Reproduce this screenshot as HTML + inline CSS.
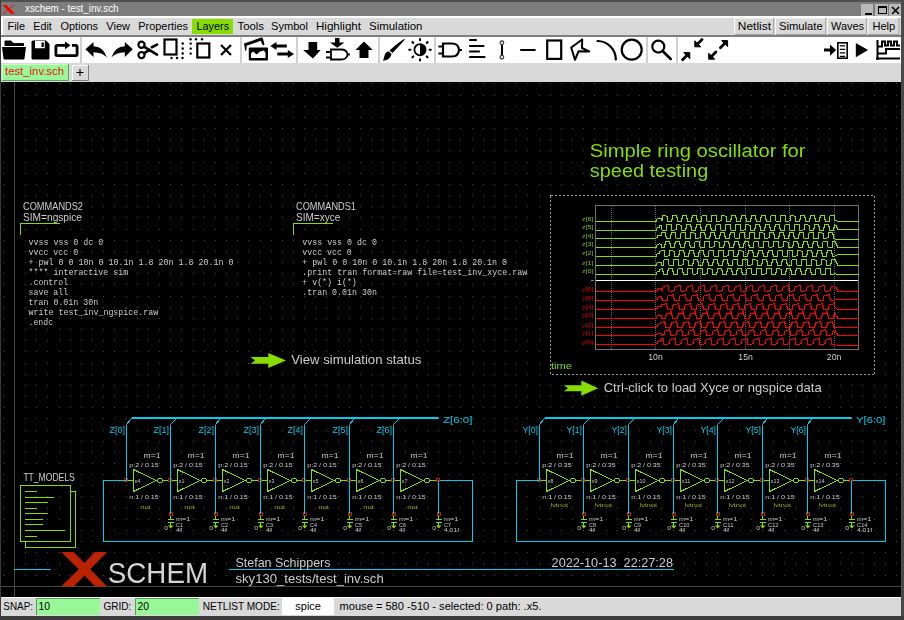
<!DOCTYPE html>
<html><head><meta charset="utf-8"><style>html,body{margin:0;padding:0;background:#000;overflow:hidden}svg{display:block} text.g{will-change:transform}</style></head>
<body><svg width="904" height="620" viewBox="0 0 904 620">
<rect x="0" y="0" width="904" height="620" fill="#d9d9d9" />
<rect x="0" y="0" width="904" height="2" fill="#505050" />
<rect x="0" y="2" width="904" height="14" fill="#7c7c7c" />
<rect x="0" y="0" width="1" height="620" fill="#3c3c3c" />
<rect x="901" y="0" width="3" height="620" fill="#4a4a4a" />
<path d="M2.5 5 L6.5 5 L15 14 L11 14 Z" fill="#ff0000"/>
<path d="M3 14 L14 5" stroke="#ff0000" stroke-width="1"/>
<text x="25" y="12" font-family="Liberation Sans" font-size="11.5" fill="#ffffff" textLength="93.5" lengthAdjust="spacingAndGlyphs"  xml:space="preserve">xschem - test_inv.sch</text>
<rect x="861" y="4" width="12" height="12" fill="#b8b8b8" />
<rect x="875" y="4" width="13" height="12" fill="#b8b8b8" />
<rect x="889" y="4" width="12" height="12" fill="#b8b8b8" />
<rect x="865" y="13" width="7" height="2" fill="#000" />
<rect x="878.5" y="6.5" width="8" height="7" fill="none" stroke="#000" stroke-width="1"/>
<rect x="878" y="6" width="9" height="2" fill="#000" />
<path d="M892 7 L899 14 M899 7 L892 14" stroke="#000" stroke-width="1.6"/>
<rect x="1" y="16" width="900" height="2" fill="#ffffff" />
<rect x="1" y="18" width="900" height="17" fill="#d9d9d9" />
<rect x="1" y="16" width="2" height="20" fill="#ffffff" />
<rect x="1" y="35" width="900" height="2" fill="#808080" />
<rect x="192" y="19" width="41" height="15" fill="#88dd00" />
<text x="7.5" y="30" font-family="Liberation Sans" font-size="11.6" fill="#000000" textLength="17.5" lengthAdjust="spacingAndGlyphs"  xml:space="preserve">File</text>
<text x="33.3" y="30" font-family="Liberation Sans" font-size="11.6" fill="#000000" textLength="18.5" lengthAdjust="spacingAndGlyphs"  xml:space="preserve">Edit</text>
<text x="60.5" y="30" font-family="Liberation Sans" font-size="11.6" fill="#000000" textLength="37.5" lengthAdjust="spacingAndGlyphs"  xml:space="preserve">Options</text>
<text x="106.3" y="30" font-family="Liberation Sans" font-size="11.6" fill="#000000" textLength="23.7" lengthAdjust="spacingAndGlyphs"  xml:space="preserve">View</text>
<text x="138.3" y="30" font-family="Liberation Sans" font-size="11.6" fill="#000000" textLength="49.7" lengthAdjust="spacingAndGlyphs"  xml:space="preserve">Properties</text>
<text x="237.5" y="30" font-family="Liberation Sans" font-size="11.6" fill="#000000" textLength="26.5" lengthAdjust="spacingAndGlyphs"  xml:space="preserve">Tools</text>
<text x="271" y="30" font-family="Liberation Sans" font-size="11.6" fill="#000000" textLength="37" lengthAdjust="spacingAndGlyphs"  xml:space="preserve">Symbol</text>
<text x="316" y="30" font-family="Liberation Sans" font-size="11.6" fill="#000000" textLength="45" lengthAdjust="spacingAndGlyphs"  xml:space="preserve">Highlight</text>
<text x="369" y="30" font-family="Liberation Sans" font-size="11.6" fill="#000000" textLength="53.5" lengthAdjust="spacingAndGlyphs"  xml:space="preserve">Simulation</text>
<text x="196.4" y="30" font-family="Liberation Sans" font-size="11.6" fill="#000000" textLength="32.7" lengthAdjust="spacingAndGlyphs"  xml:space="preserve">Layers</text>
<rect x="734.7" y="18" width="39" height="17" fill="#d9d9d9"/>
<path d="M734.7 35 V18 H773.7" fill="none" stroke="#ffffff" stroke-width="1"/>
<path d="M734.7 34.5 H773.7 V18" fill="none" stroke="#a0a0a0" stroke-width="1"/>
<text x="737.8" y="30" font-family="Liberation Sans" font-size="11.6" fill="#000000" textLength="33.2" lengthAdjust="spacingAndGlyphs"  xml:space="preserve">Netlist</text>
<rect x="775.6" y="18" width="50.2" height="17" fill="#d9d9d9"/>
<path d="M775.6 35 V18 H825.8000000000001" fill="none" stroke="#ffffff" stroke-width="1"/>
<path d="M775.6 34.5 H825.8000000000001 V18" fill="none" stroke="#a0a0a0" stroke-width="1"/>
<text x="779" y="30" font-family="Liberation Sans" font-size="11.6" fill="#000000" textLength="43.7" lengthAdjust="spacingAndGlyphs"  xml:space="preserve">Simulate</text>
<rect x="827.4" y="18" width="39.3" height="17" fill="#d9d9d9"/>
<path d="M827.4 35 V18 H866.6999999999999" fill="none" stroke="#ffffff" stroke-width="1"/>
<path d="M827.4 34.5 H866.6999999999999 V18" fill="none" stroke="#a0a0a0" stroke-width="1"/>
<text x="831" y="30" font-family="Liberation Sans" font-size="11.6" fill="#000000" textLength="33" lengthAdjust="spacingAndGlyphs"  xml:space="preserve">Waves</text>
<rect x="868" y="18" width="31" height="17" fill="#d9d9d9"/>
<path d="M868 35 V18 H899" fill="none" stroke="#ffffff" stroke-width="1"/>
<path d="M868 34.5 H899 V18" fill="none" stroke="#a0a0a0" stroke-width="1"/>
<text x="872.4" y="30" font-family="Liberation Sans" font-size="11.6" fill="#000000" textLength="22.8" lengthAdjust="spacingAndGlyphs"  xml:space="preserve">Help</text>
<rect x="1" y="37" width="900" height="26" fill="#ffffff" />
<rect x="80" y="37" width="2" height="26" fill="#d0d0d0" />
<rect x="240" y="37" width="2" height="26" fill="#d0d0d0" />
<rect x="296" y="37" width="2" height="26" fill="#d0d0d0" />
<rect x="378" y="37" width="2" height="26" fill="#d0d0d0" />
<rect x="434" y="37" width="2" height="26" fill="#d0d0d0" />
<rect x="646" y="37" width="2" height="26" fill="#d0d0d0" />
<rect x="676" y="37" width="2" height="26" fill="#d0d0d0" />
<rect x="1" y="63" width="900" height="19" fill="#d9d9d9" />
<rect x="2" y="64" width="67" height="17" fill="#98f898" />
<path d="M2.5 81 V64.5 H69" fill="none" stroke="#c8ffc8" stroke-width="1"/>
<path d="M2 80.5 H68.5 V64" fill="none" stroke="#60a060" stroke-width="1"/>
<text x="5" y="75" font-family="Liberation Sans" font-size="11.6" fill="#ee1111" textLength="59" lengthAdjust="spacingAndGlyphs"  xml:space="preserve">test_inv.sch</text>
<rect x="72" y="65" width="17" height="16" fill="#d9d9d9" />
<path d="M72.5 81 V65.5 H89" fill="none" stroke="#ffffff" stroke-width="1"/>
<path d="M72 80.5 H88.5 V65" fill="none" stroke="#808080" stroke-width="1"/>
<path d="M76.5 72.5 H83.5 M80 69 V76" stroke="#000000" stroke-width="1.1"/>
<rect x="1" y="82" width="900" height="515" fill="#000000" />
<rect x="1" y="597" width="900" height="1" fill="#ffffff" />
<rect x="1" y="598" width="900" height="18" fill="#d9d9d9" />
<rect x="0" y="616" width="904" height="4" fill="#3c3c3c" />
<text x="3.3" y="610" font-family="Liberation Sans" font-size="11.6" fill="#000000" textLength="29.7" lengthAdjust="spacingAndGlyphs"  xml:space="preserve">SNAP:</text>
<rect x="36" y="598" width="64" height="17" fill="#98f898" />
<path d="M36.5 615 V598.5 H100" fill="none" stroke="#5a9a5a" stroke-width="1"/>
<text x="38.5" y="610" font-family="Liberation Sans" font-size="11.6" fill="#000000" textLength="11.5" lengthAdjust="spacingAndGlyphs"  xml:space="preserve">10</text>
<text x="103.4" y="610" font-family="Liberation Sans" font-size="11.6" fill="#000000" textLength="28" lengthAdjust="spacingAndGlyphs"  xml:space="preserve">GRID:</text>
<rect x="135" y="598" width="64" height="17" fill="#98f898" />
<path d="M135.5 615 V598.5 H199" fill="none" stroke="#5a9a5a" stroke-width="1"/>
<text x="137.5" y="610" font-family="Liberation Sans" font-size="11.6" fill="#000000" textLength="11.5" lengthAdjust="spacingAndGlyphs"  xml:space="preserve">20</text>
<text x="202.7" y="610" font-family="Liberation Sans" font-size="11.6" fill="#000000" textLength="77" lengthAdjust="spacingAndGlyphs"  xml:space="preserve">NETLIST MODE:</text>
<rect x="282" y="598" width="52" height="17" fill="#ffffff" />
<text x="295.3" y="610" font-family="Liberation Sans" font-size="11.6" fill="#000000" textLength="25.7" lengthAdjust="spacingAndGlyphs"  xml:space="preserve">spice</text>
<text x="339.5" y="610" font-family="Liberation Sans" font-size="11.6" fill="#000000" textLength="202" lengthAdjust="spacingAndGlyphs"  xml:space="preserve">mouse = 580 -510 - selected: 0 path: .x5.</text>
<g shape-rendering="crispEdges">
<path d="M3 83h1v1h-1zM3 95h1v1h-1zM3 106h1v1h-1zM3 117h1v1h-1zM3 128h1v1h-1zM3 139h1v1h-1zM3 150h1v1h-1zM3 162h1v1h-1zM3 173h1v1h-1zM3 184h1v1h-1zM3 195h1v1h-1zM3 206h1v1h-1zM3 217h1v1h-1zM3 229h1v1h-1zM3 240h1v1h-1zM3 251h1v1h-1zM3 262h1v1h-1zM3 273h1v1h-1zM3 284h1v1h-1zM3 296h1v1h-1zM3 307h1v1h-1zM3 318h1v1h-1zM3 329h1v1h-1zM3 340h1v1h-1zM3 351h1v1h-1zM3 363h1v1h-1zM3 374h1v1h-1zM3 385h1v1h-1zM3 396h1v1h-1zM3 407h1v1h-1zM3 418h1v1h-1zM3 430h1v1h-1zM3 441h1v1h-1zM3 452h1v1h-1zM3 463h1v1h-1zM3 474h1v1h-1zM3 485h1v1h-1zM3 496h1v1h-1zM3 508h1v1h-1zM3 519h1v1h-1zM3 530h1v1h-1zM3 541h1v1h-1zM3 552h1v1h-1zM3 563h1v1h-1zM3 575h1v1h-1zM3 586h1v1h-1zM14 83h1v1h-1zM14 95h1v1h-1zM14 106h1v1h-1zM14 117h1v1h-1zM14 128h1v1h-1zM14 139h1v1h-1zM14 150h1v1h-1zM14 162h1v1h-1zM14 173h1v1h-1zM14 184h1v1h-1zM14 195h1v1h-1zM14 206h1v1h-1zM14 217h1v1h-1zM14 229h1v1h-1zM14 240h1v1h-1zM14 251h1v1h-1zM14 262h1v1h-1zM14 273h1v1h-1zM14 284h1v1h-1zM14 296h1v1h-1zM14 307h1v1h-1zM14 318h1v1h-1zM14 329h1v1h-1zM14 340h1v1h-1zM14 351h1v1h-1zM14 363h1v1h-1zM14 374h1v1h-1zM14 385h1v1h-1zM14 396h1v1h-1zM14 407h1v1h-1zM14 418h1v1h-1zM14 430h1v1h-1zM14 441h1v1h-1zM14 452h1v1h-1zM14 463h1v1h-1zM14 474h1v1h-1zM14 485h1v1h-1zM14 496h1v1h-1zM14 508h1v1h-1zM14 519h1v1h-1zM14 530h1v1h-1zM14 541h1v1h-1zM14 552h1v1h-1zM14 563h1v1h-1zM14 575h1v1h-1zM14 586h1v1h-1zM25 83h1v1h-1zM25 95h1v1h-1zM25 106h1v1h-1zM25 117h1v1h-1zM25 128h1v1h-1zM25 139h1v1h-1zM25 150h1v1h-1zM25 162h1v1h-1zM25 173h1v1h-1zM25 184h1v1h-1zM25 195h1v1h-1zM25 206h1v1h-1zM25 217h1v1h-1zM25 229h1v1h-1zM25 240h1v1h-1zM25 251h1v1h-1zM25 262h1v1h-1zM25 273h1v1h-1zM25 284h1v1h-1zM25 296h1v1h-1zM25 307h1v1h-1zM25 318h1v1h-1zM25 329h1v1h-1zM25 340h1v1h-1zM25 351h1v1h-1zM25 363h1v1h-1zM25 374h1v1h-1zM25 385h1v1h-1zM25 396h1v1h-1zM25 407h1v1h-1zM25 418h1v1h-1zM25 430h1v1h-1zM25 441h1v1h-1zM25 452h1v1h-1zM25 463h1v1h-1zM25 474h1v1h-1zM25 485h1v1h-1zM25 496h1v1h-1zM25 508h1v1h-1zM25 519h1v1h-1zM25 530h1v1h-1zM25 541h1v1h-1zM25 552h1v1h-1zM25 563h1v1h-1zM25 575h1v1h-1zM25 586h1v1h-1zM36 83h1v1h-1zM36 95h1v1h-1zM36 106h1v1h-1zM36 117h1v1h-1zM36 128h1v1h-1zM36 139h1v1h-1zM36 150h1v1h-1zM36 162h1v1h-1zM36 173h1v1h-1zM36 184h1v1h-1zM36 195h1v1h-1zM36 206h1v1h-1zM36 217h1v1h-1zM36 229h1v1h-1zM36 240h1v1h-1zM36 251h1v1h-1zM36 262h1v1h-1zM36 273h1v1h-1zM36 284h1v1h-1zM36 296h1v1h-1zM36 307h1v1h-1zM36 318h1v1h-1zM36 329h1v1h-1zM36 340h1v1h-1zM36 351h1v1h-1zM36 363h1v1h-1zM36 374h1v1h-1zM36 385h1v1h-1zM36 396h1v1h-1zM36 407h1v1h-1zM36 418h1v1h-1zM36 430h1v1h-1zM36 441h1v1h-1zM36 452h1v1h-1zM36 463h1v1h-1zM36 474h1v1h-1zM36 485h1v1h-1zM36 496h1v1h-1zM36 508h1v1h-1zM36 519h1v1h-1zM36 530h1v1h-1zM36 541h1v1h-1zM36 552h1v1h-1zM36 563h1v1h-1zM36 575h1v1h-1zM36 586h1v1h-1zM47 83h1v1h-1zM47 95h1v1h-1zM47 106h1v1h-1zM47 117h1v1h-1zM47 128h1v1h-1zM47 139h1v1h-1zM47 150h1v1h-1zM47 162h1v1h-1zM47 173h1v1h-1zM47 184h1v1h-1zM47 195h1v1h-1zM47 206h1v1h-1zM47 217h1v1h-1zM47 229h1v1h-1zM47 240h1v1h-1zM47 251h1v1h-1zM47 262h1v1h-1zM47 273h1v1h-1zM47 284h1v1h-1zM47 296h1v1h-1zM47 307h1v1h-1zM47 318h1v1h-1zM47 329h1v1h-1zM47 340h1v1h-1zM47 351h1v1h-1zM47 363h1v1h-1zM47 374h1v1h-1zM47 385h1v1h-1zM47 396h1v1h-1zM47 407h1v1h-1zM47 418h1v1h-1zM47 430h1v1h-1zM47 441h1v1h-1zM47 452h1v1h-1zM47 463h1v1h-1zM47 474h1v1h-1zM47 485h1v1h-1zM47 496h1v1h-1zM47 508h1v1h-1zM47 519h1v1h-1zM47 530h1v1h-1zM47 541h1v1h-1zM47 552h1v1h-1zM47 563h1v1h-1zM47 575h1v1h-1zM47 586h1v1h-1zM59 83h1v1h-1zM59 95h1v1h-1zM59 106h1v1h-1zM59 117h1v1h-1zM59 128h1v1h-1zM59 139h1v1h-1zM59 150h1v1h-1zM59 162h1v1h-1zM59 173h1v1h-1zM59 184h1v1h-1zM59 195h1v1h-1zM59 206h1v1h-1zM59 217h1v1h-1zM59 229h1v1h-1zM59 240h1v1h-1zM59 251h1v1h-1zM59 262h1v1h-1zM59 273h1v1h-1zM59 284h1v1h-1zM59 296h1v1h-1zM59 307h1v1h-1zM59 318h1v1h-1zM59 329h1v1h-1zM59 340h1v1h-1zM59 351h1v1h-1zM59 363h1v1h-1zM59 374h1v1h-1zM59 385h1v1h-1zM59 396h1v1h-1zM59 407h1v1h-1zM59 418h1v1h-1zM59 430h1v1h-1zM59 441h1v1h-1zM59 452h1v1h-1zM59 463h1v1h-1zM59 474h1v1h-1zM59 485h1v1h-1zM59 496h1v1h-1zM59 508h1v1h-1zM59 519h1v1h-1zM59 530h1v1h-1zM59 541h1v1h-1zM59 552h1v1h-1zM59 563h1v1h-1zM59 575h1v1h-1zM59 586h1v1h-1zM70 83h1v1h-1zM70 95h1v1h-1zM70 106h1v1h-1zM70 117h1v1h-1zM70 128h1v1h-1zM70 139h1v1h-1zM70 150h1v1h-1zM70 162h1v1h-1zM70 173h1v1h-1zM70 184h1v1h-1zM70 195h1v1h-1zM70 206h1v1h-1zM70 217h1v1h-1zM70 229h1v1h-1zM70 240h1v1h-1zM70 251h1v1h-1zM70 262h1v1h-1zM70 273h1v1h-1zM70 284h1v1h-1zM70 296h1v1h-1zM70 307h1v1h-1zM70 318h1v1h-1zM70 329h1v1h-1zM70 340h1v1h-1zM70 351h1v1h-1zM70 363h1v1h-1zM70 374h1v1h-1zM70 385h1v1h-1zM70 396h1v1h-1zM70 407h1v1h-1zM70 418h1v1h-1zM70 430h1v1h-1zM70 441h1v1h-1zM70 452h1v1h-1zM70 463h1v1h-1zM70 474h1v1h-1zM70 485h1v1h-1zM70 496h1v1h-1zM70 508h1v1h-1zM70 519h1v1h-1zM70 530h1v1h-1zM70 541h1v1h-1zM70 552h1v1h-1zM70 563h1v1h-1zM70 575h1v1h-1zM70 586h1v1h-1zM81 83h1v1h-1zM81 95h1v1h-1zM81 106h1v1h-1zM81 117h1v1h-1zM81 128h1v1h-1zM81 139h1v1h-1zM81 150h1v1h-1zM81 162h1v1h-1zM81 173h1v1h-1zM81 184h1v1h-1zM81 195h1v1h-1zM81 206h1v1h-1zM81 217h1v1h-1zM81 229h1v1h-1zM81 240h1v1h-1zM81 251h1v1h-1zM81 262h1v1h-1zM81 273h1v1h-1zM81 284h1v1h-1zM81 296h1v1h-1zM81 307h1v1h-1zM81 318h1v1h-1zM81 329h1v1h-1zM81 340h1v1h-1zM81 351h1v1h-1zM81 363h1v1h-1zM81 374h1v1h-1zM81 385h1v1h-1zM81 396h1v1h-1zM81 407h1v1h-1zM81 418h1v1h-1zM81 430h1v1h-1zM81 441h1v1h-1zM81 452h1v1h-1zM81 463h1v1h-1zM81 474h1v1h-1zM81 485h1v1h-1zM81 496h1v1h-1zM81 508h1v1h-1zM81 519h1v1h-1zM81 530h1v1h-1zM81 541h1v1h-1zM81 552h1v1h-1zM81 563h1v1h-1zM81 575h1v1h-1zM81 586h1v1h-1zM92 83h1v1h-1zM92 95h1v1h-1zM92 106h1v1h-1zM92 117h1v1h-1zM92 128h1v1h-1zM92 139h1v1h-1zM92 150h1v1h-1zM92 162h1v1h-1zM92 173h1v1h-1zM92 184h1v1h-1zM92 195h1v1h-1zM92 206h1v1h-1zM92 217h1v1h-1zM92 229h1v1h-1zM92 240h1v1h-1zM92 251h1v1h-1zM92 262h1v1h-1zM92 273h1v1h-1zM92 284h1v1h-1zM92 296h1v1h-1zM92 307h1v1h-1zM92 318h1v1h-1zM92 329h1v1h-1zM92 340h1v1h-1zM92 351h1v1h-1zM92 363h1v1h-1zM92 374h1v1h-1zM92 385h1v1h-1zM92 396h1v1h-1zM92 407h1v1h-1zM92 418h1v1h-1zM92 430h1v1h-1zM92 441h1v1h-1zM92 452h1v1h-1zM92 463h1v1h-1zM92 474h1v1h-1zM92 485h1v1h-1zM92 496h1v1h-1zM92 508h1v1h-1zM92 519h1v1h-1zM92 530h1v1h-1zM92 541h1v1h-1zM92 552h1v1h-1zM92 563h1v1h-1zM92 575h1v1h-1zM92 586h1v1h-1zM103 83h1v1h-1zM103 95h1v1h-1zM103 106h1v1h-1zM103 117h1v1h-1zM103 128h1v1h-1zM103 139h1v1h-1zM103 150h1v1h-1zM103 162h1v1h-1zM103 173h1v1h-1zM103 184h1v1h-1zM103 195h1v1h-1zM103 206h1v1h-1zM103 217h1v1h-1zM103 229h1v1h-1zM103 240h1v1h-1zM103 251h1v1h-1zM103 262h1v1h-1zM103 273h1v1h-1zM103 284h1v1h-1zM103 296h1v1h-1zM103 307h1v1h-1zM103 318h1v1h-1zM103 329h1v1h-1zM103 340h1v1h-1zM103 351h1v1h-1zM103 363h1v1h-1zM103 374h1v1h-1zM103 385h1v1h-1zM103 396h1v1h-1zM103 407h1v1h-1zM103 418h1v1h-1zM103 430h1v1h-1zM103 441h1v1h-1zM103 452h1v1h-1zM103 463h1v1h-1zM103 474h1v1h-1zM103 485h1v1h-1zM103 496h1v1h-1zM103 508h1v1h-1zM103 519h1v1h-1zM103 530h1v1h-1zM103 541h1v1h-1zM103 552h1v1h-1zM103 563h1v1h-1zM103 575h1v1h-1zM103 586h1v1h-1zM114 83h1v1h-1zM114 95h1v1h-1zM114 106h1v1h-1zM114 117h1v1h-1zM114 128h1v1h-1zM114 139h1v1h-1zM114 150h1v1h-1zM114 162h1v1h-1zM114 173h1v1h-1zM114 184h1v1h-1zM114 195h1v1h-1zM114 206h1v1h-1zM114 217h1v1h-1zM114 229h1v1h-1zM114 240h1v1h-1zM114 251h1v1h-1zM114 262h1v1h-1zM114 273h1v1h-1zM114 284h1v1h-1zM114 296h1v1h-1zM114 307h1v1h-1zM114 318h1v1h-1zM114 329h1v1h-1zM114 340h1v1h-1zM114 351h1v1h-1zM114 363h1v1h-1zM114 374h1v1h-1zM114 385h1v1h-1zM114 396h1v1h-1zM114 407h1v1h-1zM114 418h1v1h-1zM114 430h1v1h-1zM114 441h1v1h-1zM114 452h1v1h-1zM114 463h1v1h-1zM114 474h1v1h-1zM114 485h1v1h-1zM114 496h1v1h-1zM114 508h1v1h-1zM114 519h1v1h-1zM114 530h1v1h-1zM114 541h1v1h-1zM114 552h1v1h-1zM114 563h1v1h-1zM114 575h1v1h-1zM114 586h1v1h-1zM126 83h1v1h-1zM126 95h1v1h-1zM126 106h1v1h-1zM126 117h1v1h-1zM126 128h1v1h-1zM126 139h1v1h-1zM126 150h1v1h-1zM126 162h1v1h-1zM126 173h1v1h-1zM126 184h1v1h-1zM126 195h1v1h-1zM126 206h1v1h-1zM126 217h1v1h-1zM126 229h1v1h-1zM126 240h1v1h-1zM126 251h1v1h-1zM126 262h1v1h-1zM126 273h1v1h-1zM126 284h1v1h-1zM126 296h1v1h-1zM126 307h1v1h-1zM126 318h1v1h-1zM126 329h1v1h-1zM126 340h1v1h-1zM126 351h1v1h-1zM126 363h1v1h-1zM126 374h1v1h-1zM126 385h1v1h-1zM126 396h1v1h-1zM126 407h1v1h-1zM126 418h1v1h-1zM126 430h1v1h-1zM126 441h1v1h-1zM126 452h1v1h-1zM126 463h1v1h-1zM126 474h1v1h-1zM126 485h1v1h-1zM126 496h1v1h-1zM126 508h1v1h-1zM126 519h1v1h-1zM126 530h1v1h-1zM126 541h1v1h-1zM126 552h1v1h-1zM126 563h1v1h-1zM126 575h1v1h-1zM126 586h1v1h-1zM137 83h1v1h-1zM137 95h1v1h-1zM137 106h1v1h-1zM137 117h1v1h-1zM137 128h1v1h-1zM137 139h1v1h-1zM137 150h1v1h-1zM137 162h1v1h-1zM137 173h1v1h-1zM137 184h1v1h-1zM137 195h1v1h-1zM137 206h1v1h-1zM137 217h1v1h-1zM137 229h1v1h-1zM137 240h1v1h-1zM137 251h1v1h-1zM137 262h1v1h-1zM137 273h1v1h-1zM137 284h1v1h-1zM137 296h1v1h-1zM137 307h1v1h-1zM137 318h1v1h-1zM137 329h1v1h-1zM137 340h1v1h-1zM137 351h1v1h-1zM137 363h1v1h-1zM137 374h1v1h-1zM137 385h1v1h-1zM137 396h1v1h-1zM137 407h1v1h-1zM137 418h1v1h-1zM137 430h1v1h-1zM137 441h1v1h-1zM137 452h1v1h-1zM137 463h1v1h-1zM137 474h1v1h-1zM137 485h1v1h-1zM137 496h1v1h-1zM137 508h1v1h-1zM137 519h1v1h-1zM137 530h1v1h-1zM137 541h1v1h-1zM137 552h1v1h-1zM137 563h1v1h-1zM137 575h1v1h-1zM137 586h1v1h-1zM148 83h1v1h-1zM148 95h1v1h-1zM148 106h1v1h-1zM148 117h1v1h-1zM148 128h1v1h-1zM148 139h1v1h-1zM148 150h1v1h-1zM148 162h1v1h-1zM148 173h1v1h-1zM148 184h1v1h-1zM148 195h1v1h-1zM148 206h1v1h-1zM148 217h1v1h-1zM148 229h1v1h-1zM148 240h1v1h-1zM148 251h1v1h-1zM148 262h1v1h-1zM148 273h1v1h-1zM148 284h1v1h-1zM148 296h1v1h-1zM148 307h1v1h-1zM148 318h1v1h-1zM148 329h1v1h-1zM148 340h1v1h-1zM148 351h1v1h-1zM148 363h1v1h-1zM148 374h1v1h-1zM148 385h1v1h-1zM148 396h1v1h-1zM148 407h1v1h-1zM148 418h1v1h-1zM148 430h1v1h-1zM148 441h1v1h-1zM148 452h1v1h-1zM148 463h1v1h-1zM148 474h1v1h-1zM148 485h1v1h-1zM148 496h1v1h-1zM148 508h1v1h-1zM148 519h1v1h-1zM148 530h1v1h-1zM148 541h1v1h-1zM148 552h1v1h-1zM148 563h1v1h-1zM148 575h1v1h-1zM148 586h1v1h-1zM159 83h1v1h-1zM159 95h1v1h-1zM159 106h1v1h-1zM159 117h1v1h-1zM159 128h1v1h-1zM159 139h1v1h-1zM159 150h1v1h-1zM159 162h1v1h-1zM159 173h1v1h-1zM159 184h1v1h-1zM159 195h1v1h-1zM159 206h1v1h-1zM159 217h1v1h-1zM159 229h1v1h-1zM159 240h1v1h-1zM159 251h1v1h-1zM159 262h1v1h-1zM159 273h1v1h-1zM159 284h1v1h-1zM159 296h1v1h-1zM159 307h1v1h-1zM159 318h1v1h-1zM159 329h1v1h-1zM159 340h1v1h-1zM159 351h1v1h-1zM159 363h1v1h-1zM159 374h1v1h-1zM159 385h1v1h-1zM159 396h1v1h-1zM159 407h1v1h-1zM159 418h1v1h-1zM159 430h1v1h-1zM159 441h1v1h-1zM159 452h1v1h-1zM159 463h1v1h-1zM159 474h1v1h-1zM159 485h1v1h-1zM159 496h1v1h-1zM159 508h1v1h-1zM159 519h1v1h-1zM159 530h1v1h-1zM159 541h1v1h-1zM159 552h1v1h-1zM159 563h1v1h-1zM159 575h1v1h-1zM159 586h1v1h-1zM170 83h1v1h-1zM170 95h1v1h-1zM170 106h1v1h-1zM170 117h1v1h-1zM170 128h1v1h-1zM170 139h1v1h-1zM170 150h1v1h-1zM170 162h1v1h-1zM170 173h1v1h-1zM170 184h1v1h-1zM170 195h1v1h-1zM170 206h1v1h-1zM170 217h1v1h-1zM170 229h1v1h-1zM170 240h1v1h-1zM170 251h1v1h-1zM170 262h1v1h-1zM170 273h1v1h-1zM170 284h1v1h-1zM170 296h1v1h-1zM170 307h1v1h-1zM170 318h1v1h-1zM170 329h1v1h-1zM170 340h1v1h-1zM170 351h1v1h-1zM170 363h1v1h-1zM170 374h1v1h-1zM170 385h1v1h-1zM170 396h1v1h-1zM170 407h1v1h-1zM170 418h1v1h-1zM170 430h1v1h-1zM170 441h1v1h-1zM170 452h1v1h-1zM170 463h1v1h-1zM170 474h1v1h-1zM170 485h1v1h-1zM170 496h1v1h-1zM170 508h1v1h-1zM170 519h1v1h-1zM170 530h1v1h-1zM170 541h1v1h-1zM170 552h1v1h-1zM170 563h1v1h-1zM170 575h1v1h-1zM170 586h1v1h-1zM181 83h1v1h-1zM181 95h1v1h-1zM181 106h1v1h-1zM181 117h1v1h-1zM181 128h1v1h-1zM181 139h1v1h-1zM181 150h1v1h-1zM181 162h1v1h-1zM181 173h1v1h-1zM181 184h1v1h-1zM181 195h1v1h-1zM181 206h1v1h-1zM181 217h1v1h-1zM181 229h1v1h-1zM181 240h1v1h-1zM181 251h1v1h-1zM181 262h1v1h-1zM181 273h1v1h-1zM181 284h1v1h-1zM181 296h1v1h-1zM181 307h1v1h-1zM181 318h1v1h-1zM181 329h1v1h-1zM181 340h1v1h-1zM181 351h1v1h-1zM181 363h1v1h-1zM181 374h1v1h-1zM181 385h1v1h-1zM181 396h1v1h-1zM181 407h1v1h-1zM181 418h1v1h-1zM181 430h1v1h-1zM181 441h1v1h-1zM181 452h1v1h-1zM181 463h1v1h-1zM181 474h1v1h-1zM181 485h1v1h-1zM181 496h1v1h-1zM181 508h1v1h-1zM181 519h1v1h-1zM181 530h1v1h-1zM181 541h1v1h-1zM181 552h1v1h-1zM181 563h1v1h-1zM181 575h1v1h-1zM181 586h1v1h-1zM193 83h1v1h-1zM193 95h1v1h-1zM193 106h1v1h-1zM193 117h1v1h-1zM193 128h1v1h-1zM193 139h1v1h-1zM193 150h1v1h-1zM193 162h1v1h-1zM193 173h1v1h-1zM193 184h1v1h-1zM193 195h1v1h-1zM193 206h1v1h-1zM193 217h1v1h-1zM193 229h1v1h-1zM193 240h1v1h-1zM193 251h1v1h-1zM193 262h1v1h-1zM193 273h1v1h-1zM193 284h1v1h-1zM193 296h1v1h-1zM193 307h1v1h-1zM193 318h1v1h-1zM193 329h1v1h-1zM193 340h1v1h-1zM193 351h1v1h-1zM193 363h1v1h-1zM193 374h1v1h-1zM193 385h1v1h-1zM193 396h1v1h-1zM193 407h1v1h-1zM193 418h1v1h-1zM193 430h1v1h-1zM193 441h1v1h-1zM193 452h1v1h-1zM193 463h1v1h-1zM193 474h1v1h-1zM193 485h1v1h-1zM193 496h1v1h-1zM193 508h1v1h-1zM193 519h1v1h-1zM193 530h1v1h-1zM193 541h1v1h-1zM193 552h1v1h-1zM193 563h1v1h-1zM193 575h1v1h-1zM193 586h1v1h-1zM204 83h1v1h-1zM204 95h1v1h-1zM204 106h1v1h-1zM204 117h1v1h-1zM204 128h1v1h-1zM204 139h1v1h-1zM204 150h1v1h-1zM204 162h1v1h-1zM204 173h1v1h-1zM204 184h1v1h-1zM204 195h1v1h-1zM204 206h1v1h-1zM204 217h1v1h-1zM204 229h1v1h-1zM204 240h1v1h-1zM204 251h1v1h-1zM204 262h1v1h-1zM204 273h1v1h-1zM204 284h1v1h-1zM204 296h1v1h-1zM204 307h1v1h-1zM204 318h1v1h-1zM204 329h1v1h-1zM204 340h1v1h-1zM204 351h1v1h-1zM204 363h1v1h-1zM204 374h1v1h-1zM204 385h1v1h-1zM204 396h1v1h-1zM204 407h1v1h-1zM204 418h1v1h-1zM204 430h1v1h-1zM204 441h1v1h-1zM204 452h1v1h-1zM204 463h1v1h-1zM204 474h1v1h-1zM204 485h1v1h-1zM204 496h1v1h-1zM204 508h1v1h-1zM204 519h1v1h-1zM204 530h1v1h-1zM204 541h1v1h-1zM204 552h1v1h-1zM204 563h1v1h-1zM204 575h1v1h-1zM204 586h1v1h-1zM215 83h1v1h-1zM215 95h1v1h-1zM215 106h1v1h-1zM215 117h1v1h-1zM215 128h1v1h-1zM215 139h1v1h-1zM215 150h1v1h-1zM215 162h1v1h-1zM215 173h1v1h-1zM215 184h1v1h-1zM215 195h1v1h-1zM215 206h1v1h-1zM215 217h1v1h-1zM215 229h1v1h-1zM215 240h1v1h-1zM215 251h1v1h-1zM215 262h1v1h-1zM215 273h1v1h-1zM215 284h1v1h-1zM215 296h1v1h-1zM215 307h1v1h-1zM215 318h1v1h-1zM215 329h1v1h-1zM215 340h1v1h-1zM215 351h1v1h-1zM215 363h1v1h-1zM215 374h1v1h-1zM215 385h1v1h-1zM215 396h1v1h-1zM215 407h1v1h-1zM215 418h1v1h-1zM215 430h1v1h-1zM215 441h1v1h-1zM215 452h1v1h-1zM215 463h1v1h-1zM215 474h1v1h-1zM215 485h1v1h-1zM215 496h1v1h-1zM215 508h1v1h-1zM215 519h1v1h-1zM215 530h1v1h-1zM215 541h1v1h-1zM215 552h1v1h-1zM215 563h1v1h-1zM215 575h1v1h-1zM215 586h1v1h-1zM226 83h1v1h-1zM226 95h1v1h-1zM226 106h1v1h-1zM226 117h1v1h-1zM226 128h1v1h-1zM226 139h1v1h-1zM226 150h1v1h-1zM226 162h1v1h-1zM226 173h1v1h-1zM226 184h1v1h-1zM226 195h1v1h-1zM226 206h1v1h-1zM226 217h1v1h-1zM226 229h1v1h-1zM226 240h1v1h-1zM226 251h1v1h-1zM226 262h1v1h-1zM226 273h1v1h-1zM226 284h1v1h-1zM226 296h1v1h-1zM226 307h1v1h-1zM226 318h1v1h-1zM226 329h1v1h-1zM226 340h1v1h-1zM226 351h1v1h-1zM226 363h1v1h-1zM226 374h1v1h-1zM226 385h1v1h-1zM226 396h1v1h-1zM226 407h1v1h-1zM226 418h1v1h-1zM226 430h1v1h-1zM226 441h1v1h-1zM226 452h1v1h-1zM226 463h1v1h-1zM226 474h1v1h-1zM226 485h1v1h-1zM226 496h1v1h-1zM226 508h1v1h-1zM226 519h1v1h-1zM226 530h1v1h-1zM226 541h1v1h-1zM226 552h1v1h-1zM226 563h1v1h-1zM226 575h1v1h-1zM226 586h1v1h-1zM237 83h1v1h-1zM237 95h1v1h-1zM237 106h1v1h-1zM237 117h1v1h-1zM237 128h1v1h-1zM237 139h1v1h-1zM237 150h1v1h-1zM237 162h1v1h-1zM237 173h1v1h-1zM237 184h1v1h-1zM237 195h1v1h-1zM237 206h1v1h-1zM237 217h1v1h-1zM237 229h1v1h-1zM237 240h1v1h-1zM237 251h1v1h-1zM237 262h1v1h-1zM237 273h1v1h-1zM237 284h1v1h-1zM237 296h1v1h-1zM237 307h1v1h-1zM237 318h1v1h-1zM237 329h1v1h-1zM237 340h1v1h-1zM237 351h1v1h-1zM237 363h1v1h-1zM237 374h1v1h-1zM237 385h1v1h-1zM237 396h1v1h-1zM237 407h1v1h-1zM237 418h1v1h-1zM237 430h1v1h-1zM237 441h1v1h-1zM237 452h1v1h-1zM237 463h1v1h-1zM237 474h1v1h-1zM237 485h1v1h-1zM237 496h1v1h-1zM237 508h1v1h-1zM237 519h1v1h-1zM237 530h1v1h-1zM237 541h1v1h-1zM237 552h1v1h-1zM237 563h1v1h-1zM237 575h1v1h-1zM237 586h1v1h-1zM248 83h1v1h-1zM248 95h1v1h-1zM248 106h1v1h-1zM248 117h1v1h-1zM248 128h1v1h-1zM248 139h1v1h-1zM248 150h1v1h-1zM248 162h1v1h-1zM248 173h1v1h-1zM248 184h1v1h-1zM248 195h1v1h-1zM248 206h1v1h-1zM248 217h1v1h-1zM248 229h1v1h-1zM248 240h1v1h-1zM248 251h1v1h-1zM248 262h1v1h-1zM248 273h1v1h-1zM248 284h1v1h-1zM248 296h1v1h-1zM248 307h1v1h-1zM248 318h1v1h-1zM248 329h1v1h-1zM248 340h1v1h-1zM248 351h1v1h-1zM248 363h1v1h-1zM248 374h1v1h-1zM248 385h1v1h-1zM248 396h1v1h-1zM248 407h1v1h-1zM248 418h1v1h-1zM248 430h1v1h-1zM248 441h1v1h-1zM248 452h1v1h-1zM248 463h1v1h-1zM248 474h1v1h-1zM248 485h1v1h-1zM248 496h1v1h-1zM248 508h1v1h-1zM248 519h1v1h-1zM248 530h1v1h-1zM248 541h1v1h-1zM248 552h1v1h-1zM248 563h1v1h-1zM248 575h1v1h-1zM248 586h1v1h-1zM260 83h1v1h-1zM260 95h1v1h-1zM260 106h1v1h-1zM260 117h1v1h-1zM260 128h1v1h-1zM260 139h1v1h-1zM260 150h1v1h-1zM260 162h1v1h-1zM260 173h1v1h-1zM260 184h1v1h-1zM260 195h1v1h-1zM260 206h1v1h-1zM260 217h1v1h-1zM260 229h1v1h-1zM260 240h1v1h-1zM260 251h1v1h-1zM260 262h1v1h-1zM260 273h1v1h-1zM260 284h1v1h-1zM260 296h1v1h-1zM260 307h1v1h-1zM260 318h1v1h-1zM260 329h1v1h-1zM260 340h1v1h-1zM260 351h1v1h-1zM260 363h1v1h-1zM260 374h1v1h-1zM260 385h1v1h-1zM260 396h1v1h-1zM260 407h1v1h-1zM260 418h1v1h-1zM260 430h1v1h-1zM260 441h1v1h-1zM260 452h1v1h-1zM260 463h1v1h-1zM260 474h1v1h-1zM260 485h1v1h-1zM260 496h1v1h-1zM260 508h1v1h-1zM260 519h1v1h-1zM260 530h1v1h-1zM260 541h1v1h-1zM260 552h1v1h-1zM260 563h1v1h-1zM260 575h1v1h-1zM260 586h1v1h-1zM271 83h1v1h-1zM271 95h1v1h-1zM271 106h1v1h-1zM271 117h1v1h-1zM271 128h1v1h-1zM271 139h1v1h-1zM271 150h1v1h-1zM271 162h1v1h-1zM271 173h1v1h-1zM271 184h1v1h-1zM271 195h1v1h-1zM271 206h1v1h-1zM271 217h1v1h-1zM271 229h1v1h-1zM271 240h1v1h-1zM271 251h1v1h-1zM271 262h1v1h-1zM271 273h1v1h-1zM271 284h1v1h-1zM271 296h1v1h-1zM271 307h1v1h-1zM271 318h1v1h-1zM271 329h1v1h-1zM271 340h1v1h-1zM271 351h1v1h-1zM271 363h1v1h-1zM271 374h1v1h-1zM271 385h1v1h-1zM271 396h1v1h-1zM271 407h1v1h-1zM271 418h1v1h-1zM271 430h1v1h-1zM271 441h1v1h-1zM271 452h1v1h-1zM271 463h1v1h-1zM271 474h1v1h-1zM271 485h1v1h-1zM271 496h1v1h-1zM271 508h1v1h-1zM271 519h1v1h-1zM271 530h1v1h-1zM271 541h1v1h-1zM271 552h1v1h-1zM271 563h1v1h-1zM271 575h1v1h-1zM271 586h1v1h-1zM282 83h1v1h-1zM282 95h1v1h-1zM282 106h1v1h-1zM282 117h1v1h-1zM282 128h1v1h-1zM282 139h1v1h-1zM282 150h1v1h-1zM282 162h1v1h-1zM282 173h1v1h-1zM282 184h1v1h-1zM282 195h1v1h-1zM282 206h1v1h-1zM282 217h1v1h-1zM282 229h1v1h-1zM282 240h1v1h-1zM282 251h1v1h-1zM282 262h1v1h-1zM282 273h1v1h-1zM282 284h1v1h-1zM282 296h1v1h-1zM282 307h1v1h-1zM282 318h1v1h-1zM282 329h1v1h-1zM282 340h1v1h-1zM282 351h1v1h-1zM282 363h1v1h-1zM282 374h1v1h-1zM282 385h1v1h-1zM282 396h1v1h-1zM282 407h1v1h-1zM282 418h1v1h-1zM282 430h1v1h-1zM282 441h1v1h-1zM282 452h1v1h-1zM282 463h1v1h-1zM282 474h1v1h-1zM282 485h1v1h-1zM282 496h1v1h-1zM282 508h1v1h-1zM282 519h1v1h-1zM282 530h1v1h-1zM282 541h1v1h-1zM282 552h1v1h-1zM282 563h1v1h-1zM282 575h1v1h-1zM282 586h1v1h-1zM293 83h1v1h-1zM293 95h1v1h-1zM293 106h1v1h-1zM293 117h1v1h-1zM293 128h1v1h-1zM293 139h1v1h-1zM293 150h1v1h-1zM293 162h1v1h-1zM293 173h1v1h-1zM293 184h1v1h-1zM293 195h1v1h-1zM293 206h1v1h-1zM293 217h1v1h-1zM293 229h1v1h-1zM293 240h1v1h-1zM293 251h1v1h-1zM293 262h1v1h-1zM293 273h1v1h-1zM293 284h1v1h-1zM293 296h1v1h-1zM293 307h1v1h-1zM293 318h1v1h-1zM293 329h1v1h-1zM293 340h1v1h-1zM293 351h1v1h-1zM293 363h1v1h-1zM293 374h1v1h-1zM293 385h1v1h-1zM293 396h1v1h-1zM293 407h1v1h-1zM293 418h1v1h-1zM293 430h1v1h-1zM293 441h1v1h-1zM293 452h1v1h-1zM293 463h1v1h-1zM293 474h1v1h-1zM293 485h1v1h-1zM293 496h1v1h-1zM293 508h1v1h-1zM293 519h1v1h-1zM293 530h1v1h-1zM293 541h1v1h-1zM293 552h1v1h-1zM293 563h1v1h-1zM293 575h1v1h-1zM293 586h1v1h-1zM304 83h1v1h-1zM304 95h1v1h-1zM304 106h1v1h-1zM304 117h1v1h-1zM304 128h1v1h-1zM304 139h1v1h-1zM304 150h1v1h-1zM304 162h1v1h-1zM304 173h1v1h-1zM304 184h1v1h-1zM304 195h1v1h-1zM304 206h1v1h-1zM304 217h1v1h-1zM304 229h1v1h-1zM304 240h1v1h-1zM304 251h1v1h-1zM304 262h1v1h-1zM304 273h1v1h-1zM304 284h1v1h-1zM304 296h1v1h-1zM304 307h1v1h-1zM304 318h1v1h-1zM304 329h1v1h-1zM304 340h1v1h-1zM304 351h1v1h-1zM304 363h1v1h-1zM304 374h1v1h-1zM304 385h1v1h-1zM304 396h1v1h-1zM304 407h1v1h-1zM304 418h1v1h-1zM304 430h1v1h-1zM304 441h1v1h-1zM304 452h1v1h-1zM304 463h1v1h-1zM304 474h1v1h-1zM304 485h1v1h-1zM304 496h1v1h-1zM304 508h1v1h-1zM304 519h1v1h-1zM304 530h1v1h-1zM304 541h1v1h-1zM304 552h1v1h-1zM304 563h1v1h-1zM304 575h1v1h-1zM304 586h1v1h-1zM315 83h1v1h-1zM315 95h1v1h-1zM315 106h1v1h-1zM315 117h1v1h-1zM315 128h1v1h-1zM315 139h1v1h-1zM315 150h1v1h-1zM315 162h1v1h-1zM315 173h1v1h-1zM315 184h1v1h-1zM315 195h1v1h-1zM315 206h1v1h-1zM315 217h1v1h-1zM315 229h1v1h-1zM315 240h1v1h-1zM315 251h1v1h-1zM315 262h1v1h-1zM315 273h1v1h-1zM315 284h1v1h-1zM315 296h1v1h-1zM315 307h1v1h-1zM315 318h1v1h-1zM315 329h1v1h-1zM315 340h1v1h-1zM315 351h1v1h-1zM315 363h1v1h-1zM315 374h1v1h-1zM315 385h1v1h-1zM315 396h1v1h-1zM315 407h1v1h-1zM315 418h1v1h-1zM315 430h1v1h-1zM315 441h1v1h-1zM315 452h1v1h-1zM315 463h1v1h-1zM315 474h1v1h-1zM315 485h1v1h-1zM315 496h1v1h-1zM315 508h1v1h-1zM315 519h1v1h-1zM315 530h1v1h-1zM315 541h1v1h-1zM315 552h1v1h-1zM315 563h1v1h-1zM315 575h1v1h-1zM315 586h1v1h-1zM326 83h1v1h-1zM326 95h1v1h-1zM326 106h1v1h-1zM326 117h1v1h-1zM326 128h1v1h-1zM326 139h1v1h-1zM326 150h1v1h-1zM326 162h1v1h-1zM326 173h1v1h-1zM326 184h1v1h-1zM326 195h1v1h-1zM326 206h1v1h-1zM326 217h1v1h-1zM326 229h1v1h-1zM326 240h1v1h-1zM326 251h1v1h-1zM326 262h1v1h-1zM326 273h1v1h-1zM326 284h1v1h-1zM326 296h1v1h-1zM326 307h1v1h-1zM326 318h1v1h-1zM326 329h1v1h-1zM326 340h1v1h-1zM326 351h1v1h-1zM326 363h1v1h-1zM326 374h1v1h-1zM326 385h1v1h-1zM326 396h1v1h-1zM326 407h1v1h-1zM326 418h1v1h-1zM326 430h1v1h-1zM326 441h1v1h-1zM326 452h1v1h-1zM326 463h1v1h-1zM326 474h1v1h-1zM326 485h1v1h-1zM326 496h1v1h-1zM326 508h1v1h-1zM326 519h1v1h-1zM326 530h1v1h-1zM326 541h1v1h-1zM326 552h1v1h-1zM326 563h1v1h-1zM326 575h1v1h-1zM326 586h1v1h-1zM338 83h1v1h-1zM338 95h1v1h-1zM338 106h1v1h-1zM338 117h1v1h-1zM338 128h1v1h-1zM338 139h1v1h-1zM338 150h1v1h-1zM338 162h1v1h-1zM338 173h1v1h-1zM338 184h1v1h-1zM338 195h1v1h-1zM338 206h1v1h-1zM338 217h1v1h-1zM338 229h1v1h-1zM338 240h1v1h-1zM338 251h1v1h-1zM338 262h1v1h-1zM338 273h1v1h-1zM338 284h1v1h-1zM338 296h1v1h-1zM338 307h1v1h-1zM338 318h1v1h-1zM338 329h1v1h-1zM338 340h1v1h-1zM338 351h1v1h-1zM338 363h1v1h-1zM338 374h1v1h-1zM338 385h1v1h-1zM338 396h1v1h-1zM338 407h1v1h-1zM338 418h1v1h-1zM338 430h1v1h-1zM338 441h1v1h-1zM338 452h1v1h-1zM338 463h1v1h-1zM338 474h1v1h-1zM338 485h1v1h-1zM338 496h1v1h-1zM338 508h1v1h-1zM338 519h1v1h-1zM338 530h1v1h-1zM338 541h1v1h-1zM338 552h1v1h-1zM338 563h1v1h-1zM338 575h1v1h-1zM338 586h1v1h-1zM349 83h1v1h-1zM349 95h1v1h-1zM349 106h1v1h-1zM349 117h1v1h-1zM349 128h1v1h-1zM349 139h1v1h-1zM349 150h1v1h-1zM349 162h1v1h-1zM349 173h1v1h-1zM349 184h1v1h-1zM349 195h1v1h-1zM349 206h1v1h-1zM349 217h1v1h-1zM349 229h1v1h-1zM349 240h1v1h-1zM349 251h1v1h-1zM349 262h1v1h-1zM349 273h1v1h-1zM349 284h1v1h-1zM349 296h1v1h-1zM349 307h1v1h-1zM349 318h1v1h-1zM349 329h1v1h-1zM349 340h1v1h-1zM349 351h1v1h-1zM349 363h1v1h-1zM349 374h1v1h-1zM349 385h1v1h-1zM349 396h1v1h-1zM349 407h1v1h-1zM349 418h1v1h-1zM349 430h1v1h-1zM349 441h1v1h-1zM349 452h1v1h-1zM349 463h1v1h-1zM349 474h1v1h-1zM349 485h1v1h-1zM349 496h1v1h-1zM349 508h1v1h-1zM349 519h1v1h-1zM349 530h1v1h-1zM349 541h1v1h-1zM349 552h1v1h-1zM349 563h1v1h-1zM349 575h1v1h-1zM349 586h1v1h-1zM360 83h1v1h-1zM360 95h1v1h-1zM360 106h1v1h-1zM360 117h1v1h-1zM360 128h1v1h-1zM360 139h1v1h-1zM360 150h1v1h-1zM360 162h1v1h-1zM360 173h1v1h-1zM360 184h1v1h-1zM360 195h1v1h-1zM360 206h1v1h-1zM360 217h1v1h-1zM360 229h1v1h-1zM360 240h1v1h-1zM360 251h1v1h-1zM360 262h1v1h-1zM360 273h1v1h-1zM360 284h1v1h-1zM360 296h1v1h-1zM360 307h1v1h-1zM360 318h1v1h-1zM360 329h1v1h-1zM360 340h1v1h-1zM360 351h1v1h-1zM360 363h1v1h-1zM360 374h1v1h-1zM360 385h1v1h-1zM360 396h1v1h-1zM360 407h1v1h-1zM360 418h1v1h-1zM360 430h1v1h-1zM360 441h1v1h-1zM360 452h1v1h-1zM360 463h1v1h-1zM360 474h1v1h-1zM360 485h1v1h-1zM360 496h1v1h-1zM360 508h1v1h-1zM360 519h1v1h-1zM360 530h1v1h-1zM360 541h1v1h-1zM360 552h1v1h-1zM360 563h1v1h-1zM360 575h1v1h-1zM360 586h1v1h-1zM371 83h1v1h-1zM371 95h1v1h-1zM371 106h1v1h-1zM371 117h1v1h-1zM371 128h1v1h-1zM371 139h1v1h-1zM371 150h1v1h-1zM371 162h1v1h-1zM371 173h1v1h-1zM371 184h1v1h-1zM371 195h1v1h-1zM371 206h1v1h-1zM371 217h1v1h-1zM371 229h1v1h-1zM371 240h1v1h-1zM371 251h1v1h-1zM371 262h1v1h-1zM371 273h1v1h-1zM371 284h1v1h-1zM371 296h1v1h-1zM371 307h1v1h-1zM371 318h1v1h-1zM371 329h1v1h-1zM371 340h1v1h-1zM371 351h1v1h-1zM371 363h1v1h-1zM371 374h1v1h-1zM371 385h1v1h-1zM371 396h1v1h-1zM371 407h1v1h-1zM371 418h1v1h-1zM371 430h1v1h-1zM371 441h1v1h-1zM371 452h1v1h-1zM371 463h1v1h-1zM371 474h1v1h-1zM371 485h1v1h-1zM371 496h1v1h-1zM371 508h1v1h-1zM371 519h1v1h-1zM371 530h1v1h-1zM371 541h1v1h-1zM371 552h1v1h-1zM371 563h1v1h-1zM371 575h1v1h-1zM371 586h1v1h-1zM382 83h1v1h-1zM382 95h1v1h-1zM382 106h1v1h-1zM382 117h1v1h-1zM382 128h1v1h-1zM382 139h1v1h-1zM382 150h1v1h-1zM382 162h1v1h-1zM382 173h1v1h-1zM382 184h1v1h-1zM382 195h1v1h-1zM382 206h1v1h-1zM382 217h1v1h-1zM382 229h1v1h-1zM382 240h1v1h-1zM382 251h1v1h-1zM382 262h1v1h-1zM382 273h1v1h-1zM382 284h1v1h-1zM382 296h1v1h-1zM382 307h1v1h-1zM382 318h1v1h-1zM382 329h1v1h-1zM382 340h1v1h-1zM382 351h1v1h-1zM382 363h1v1h-1zM382 374h1v1h-1zM382 385h1v1h-1zM382 396h1v1h-1zM382 407h1v1h-1zM382 418h1v1h-1zM382 430h1v1h-1zM382 441h1v1h-1zM382 452h1v1h-1zM382 463h1v1h-1zM382 474h1v1h-1zM382 485h1v1h-1zM382 496h1v1h-1zM382 508h1v1h-1zM382 519h1v1h-1zM382 530h1v1h-1zM382 541h1v1h-1zM382 552h1v1h-1zM382 563h1v1h-1zM382 575h1v1h-1zM382 586h1v1h-1zM393 83h1v1h-1zM393 95h1v1h-1zM393 106h1v1h-1zM393 117h1v1h-1zM393 128h1v1h-1zM393 139h1v1h-1zM393 150h1v1h-1zM393 162h1v1h-1zM393 173h1v1h-1zM393 184h1v1h-1zM393 195h1v1h-1zM393 206h1v1h-1zM393 217h1v1h-1zM393 229h1v1h-1zM393 240h1v1h-1zM393 251h1v1h-1zM393 262h1v1h-1zM393 273h1v1h-1zM393 284h1v1h-1zM393 296h1v1h-1zM393 307h1v1h-1zM393 318h1v1h-1zM393 329h1v1h-1zM393 340h1v1h-1zM393 351h1v1h-1zM393 363h1v1h-1zM393 374h1v1h-1zM393 385h1v1h-1zM393 396h1v1h-1zM393 407h1v1h-1zM393 418h1v1h-1zM393 430h1v1h-1zM393 441h1v1h-1zM393 452h1v1h-1zM393 463h1v1h-1zM393 474h1v1h-1zM393 485h1v1h-1zM393 496h1v1h-1zM393 508h1v1h-1zM393 519h1v1h-1zM393 530h1v1h-1zM393 541h1v1h-1zM393 552h1v1h-1zM393 563h1v1h-1zM393 575h1v1h-1zM393 586h1v1h-1zM405 83h1v1h-1zM405 95h1v1h-1zM405 106h1v1h-1zM405 117h1v1h-1zM405 128h1v1h-1zM405 139h1v1h-1zM405 150h1v1h-1zM405 162h1v1h-1zM405 173h1v1h-1zM405 184h1v1h-1zM405 195h1v1h-1zM405 206h1v1h-1zM405 217h1v1h-1zM405 229h1v1h-1zM405 240h1v1h-1zM405 251h1v1h-1zM405 262h1v1h-1zM405 273h1v1h-1zM405 284h1v1h-1zM405 296h1v1h-1zM405 307h1v1h-1zM405 318h1v1h-1zM405 329h1v1h-1zM405 340h1v1h-1zM405 351h1v1h-1zM405 363h1v1h-1zM405 374h1v1h-1zM405 385h1v1h-1zM405 396h1v1h-1zM405 407h1v1h-1zM405 418h1v1h-1zM405 430h1v1h-1zM405 441h1v1h-1zM405 452h1v1h-1zM405 463h1v1h-1zM405 474h1v1h-1zM405 485h1v1h-1zM405 496h1v1h-1zM405 508h1v1h-1zM405 519h1v1h-1zM405 530h1v1h-1zM405 541h1v1h-1zM405 552h1v1h-1zM405 563h1v1h-1zM405 575h1v1h-1zM405 586h1v1h-1zM416 83h1v1h-1zM416 95h1v1h-1zM416 106h1v1h-1zM416 117h1v1h-1zM416 128h1v1h-1zM416 139h1v1h-1zM416 150h1v1h-1zM416 162h1v1h-1zM416 173h1v1h-1zM416 184h1v1h-1zM416 195h1v1h-1zM416 206h1v1h-1zM416 217h1v1h-1zM416 229h1v1h-1zM416 240h1v1h-1zM416 251h1v1h-1zM416 262h1v1h-1zM416 273h1v1h-1zM416 284h1v1h-1zM416 296h1v1h-1zM416 307h1v1h-1zM416 318h1v1h-1zM416 329h1v1h-1zM416 340h1v1h-1zM416 351h1v1h-1zM416 363h1v1h-1zM416 374h1v1h-1zM416 385h1v1h-1zM416 396h1v1h-1zM416 407h1v1h-1zM416 418h1v1h-1zM416 430h1v1h-1zM416 441h1v1h-1zM416 452h1v1h-1zM416 463h1v1h-1zM416 474h1v1h-1zM416 485h1v1h-1zM416 496h1v1h-1zM416 508h1v1h-1zM416 519h1v1h-1zM416 530h1v1h-1zM416 541h1v1h-1zM416 552h1v1h-1zM416 563h1v1h-1zM416 575h1v1h-1zM416 586h1v1h-1zM427 83h1v1h-1zM427 95h1v1h-1zM427 106h1v1h-1zM427 117h1v1h-1zM427 128h1v1h-1zM427 139h1v1h-1zM427 150h1v1h-1zM427 162h1v1h-1zM427 173h1v1h-1zM427 184h1v1h-1zM427 195h1v1h-1zM427 206h1v1h-1zM427 217h1v1h-1zM427 229h1v1h-1zM427 240h1v1h-1zM427 251h1v1h-1zM427 262h1v1h-1zM427 273h1v1h-1zM427 284h1v1h-1zM427 296h1v1h-1zM427 307h1v1h-1zM427 318h1v1h-1zM427 329h1v1h-1zM427 340h1v1h-1zM427 351h1v1h-1zM427 363h1v1h-1zM427 374h1v1h-1zM427 385h1v1h-1zM427 396h1v1h-1zM427 407h1v1h-1zM427 418h1v1h-1zM427 430h1v1h-1zM427 441h1v1h-1zM427 452h1v1h-1zM427 463h1v1h-1zM427 474h1v1h-1zM427 485h1v1h-1zM427 496h1v1h-1zM427 508h1v1h-1zM427 519h1v1h-1zM427 530h1v1h-1zM427 541h1v1h-1zM427 552h1v1h-1zM427 563h1v1h-1zM427 575h1v1h-1zM427 586h1v1h-1zM438 83h1v1h-1zM438 95h1v1h-1zM438 106h1v1h-1zM438 117h1v1h-1zM438 128h1v1h-1zM438 139h1v1h-1zM438 150h1v1h-1zM438 162h1v1h-1zM438 173h1v1h-1zM438 184h1v1h-1zM438 195h1v1h-1zM438 206h1v1h-1zM438 217h1v1h-1zM438 229h1v1h-1zM438 240h1v1h-1zM438 251h1v1h-1zM438 262h1v1h-1zM438 273h1v1h-1zM438 284h1v1h-1zM438 296h1v1h-1zM438 307h1v1h-1zM438 318h1v1h-1zM438 329h1v1h-1zM438 340h1v1h-1zM438 351h1v1h-1zM438 363h1v1h-1zM438 374h1v1h-1zM438 385h1v1h-1zM438 396h1v1h-1zM438 407h1v1h-1zM438 418h1v1h-1zM438 430h1v1h-1zM438 441h1v1h-1zM438 452h1v1h-1zM438 463h1v1h-1zM438 474h1v1h-1zM438 485h1v1h-1zM438 496h1v1h-1zM438 508h1v1h-1zM438 519h1v1h-1zM438 530h1v1h-1zM438 541h1v1h-1zM438 552h1v1h-1zM438 563h1v1h-1zM438 575h1v1h-1zM438 586h1v1h-1zM449 83h1v1h-1zM449 95h1v1h-1zM449 106h1v1h-1zM449 117h1v1h-1zM449 128h1v1h-1zM449 139h1v1h-1zM449 150h1v1h-1zM449 162h1v1h-1zM449 173h1v1h-1zM449 184h1v1h-1zM449 195h1v1h-1zM449 206h1v1h-1zM449 217h1v1h-1zM449 229h1v1h-1zM449 240h1v1h-1zM449 251h1v1h-1zM449 262h1v1h-1zM449 273h1v1h-1zM449 284h1v1h-1zM449 296h1v1h-1zM449 307h1v1h-1zM449 318h1v1h-1zM449 329h1v1h-1zM449 340h1v1h-1zM449 351h1v1h-1zM449 363h1v1h-1zM449 374h1v1h-1zM449 385h1v1h-1zM449 396h1v1h-1zM449 407h1v1h-1zM449 418h1v1h-1zM449 430h1v1h-1zM449 441h1v1h-1zM449 452h1v1h-1zM449 463h1v1h-1zM449 474h1v1h-1zM449 485h1v1h-1zM449 496h1v1h-1zM449 508h1v1h-1zM449 519h1v1h-1zM449 530h1v1h-1zM449 541h1v1h-1zM449 552h1v1h-1zM449 563h1v1h-1zM449 575h1v1h-1zM449 586h1v1h-1zM460 83h1v1h-1zM460 95h1v1h-1zM460 106h1v1h-1zM460 117h1v1h-1zM460 128h1v1h-1zM460 139h1v1h-1zM460 150h1v1h-1zM460 162h1v1h-1zM460 173h1v1h-1zM460 184h1v1h-1zM460 195h1v1h-1zM460 206h1v1h-1zM460 217h1v1h-1zM460 229h1v1h-1zM460 240h1v1h-1zM460 251h1v1h-1zM460 262h1v1h-1zM460 273h1v1h-1zM460 284h1v1h-1zM460 296h1v1h-1zM460 307h1v1h-1zM460 318h1v1h-1zM460 329h1v1h-1zM460 340h1v1h-1zM460 351h1v1h-1zM460 363h1v1h-1zM460 374h1v1h-1zM460 385h1v1h-1zM460 396h1v1h-1zM460 407h1v1h-1zM460 418h1v1h-1zM460 430h1v1h-1zM460 441h1v1h-1zM460 452h1v1h-1zM460 463h1v1h-1zM460 474h1v1h-1zM460 485h1v1h-1zM460 496h1v1h-1zM460 508h1v1h-1zM460 519h1v1h-1zM460 530h1v1h-1zM460 541h1v1h-1zM460 552h1v1h-1zM460 563h1v1h-1zM460 575h1v1h-1zM460 586h1v1h-1zM472 83h1v1h-1zM472 95h1v1h-1zM472 106h1v1h-1zM472 117h1v1h-1zM472 128h1v1h-1zM472 139h1v1h-1zM472 150h1v1h-1zM472 162h1v1h-1zM472 173h1v1h-1zM472 184h1v1h-1zM472 195h1v1h-1zM472 206h1v1h-1zM472 217h1v1h-1zM472 229h1v1h-1zM472 240h1v1h-1zM472 251h1v1h-1zM472 262h1v1h-1zM472 273h1v1h-1zM472 284h1v1h-1zM472 296h1v1h-1zM472 307h1v1h-1zM472 318h1v1h-1zM472 329h1v1h-1zM472 340h1v1h-1zM472 351h1v1h-1zM472 363h1v1h-1zM472 374h1v1h-1zM472 385h1v1h-1zM472 396h1v1h-1zM472 407h1v1h-1zM472 418h1v1h-1zM472 430h1v1h-1zM472 441h1v1h-1zM472 452h1v1h-1zM472 463h1v1h-1zM472 474h1v1h-1zM472 485h1v1h-1zM472 496h1v1h-1zM472 508h1v1h-1zM472 519h1v1h-1zM472 530h1v1h-1zM472 541h1v1h-1zM472 552h1v1h-1zM472 563h1v1h-1zM472 575h1v1h-1zM472 586h1v1h-1zM483 83h1v1h-1zM483 95h1v1h-1zM483 106h1v1h-1zM483 117h1v1h-1zM483 128h1v1h-1zM483 139h1v1h-1zM483 150h1v1h-1zM483 162h1v1h-1zM483 173h1v1h-1zM483 184h1v1h-1zM483 195h1v1h-1zM483 206h1v1h-1zM483 217h1v1h-1zM483 229h1v1h-1zM483 240h1v1h-1zM483 251h1v1h-1zM483 262h1v1h-1zM483 273h1v1h-1zM483 284h1v1h-1zM483 296h1v1h-1zM483 307h1v1h-1zM483 318h1v1h-1zM483 329h1v1h-1zM483 340h1v1h-1zM483 351h1v1h-1zM483 363h1v1h-1zM483 374h1v1h-1zM483 385h1v1h-1zM483 396h1v1h-1zM483 407h1v1h-1zM483 418h1v1h-1zM483 430h1v1h-1zM483 441h1v1h-1zM483 452h1v1h-1zM483 463h1v1h-1zM483 474h1v1h-1zM483 485h1v1h-1zM483 496h1v1h-1zM483 508h1v1h-1zM483 519h1v1h-1zM483 530h1v1h-1zM483 541h1v1h-1zM483 552h1v1h-1zM483 563h1v1h-1zM483 575h1v1h-1zM483 586h1v1h-1zM494 83h1v1h-1zM494 95h1v1h-1zM494 106h1v1h-1zM494 117h1v1h-1zM494 128h1v1h-1zM494 139h1v1h-1zM494 150h1v1h-1zM494 162h1v1h-1zM494 173h1v1h-1zM494 184h1v1h-1zM494 195h1v1h-1zM494 206h1v1h-1zM494 217h1v1h-1zM494 229h1v1h-1zM494 240h1v1h-1zM494 251h1v1h-1zM494 262h1v1h-1zM494 273h1v1h-1zM494 284h1v1h-1zM494 296h1v1h-1zM494 307h1v1h-1zM494 318h1v1h-1zM494 329h1v1h-1zM494 340h1v1h-1zM494 351h1v1h-1zM494 363h1v1h-1zM494 374h1v1h-1zM494 385h1v1h-1zM494 396h1v1h-1zM494 407h1v1h-1zM494 418h1v1h-1zM494 430h1v1h-1zM494 441h1v1h-1zM494 452h1v1h-1zM494 463h1v1h-1zM494 474h1v1h-1zM494 485h1v1h-1zM494 496h1v1h-1zM494 508h1v1h-1zM494 519h1v1h-1zM494 530h1v1h-1zM494 541h1v1h-1zM494 552h1v1h-1zM494 563h1v1h-1zM494 575h1v1h-1zM494 586h1v1h-1zM505 83h1v1h-1zM505 95h1v1h-1zM505 106h1v1h-1zM505 117h1v1h-1zM505 128h1v1h-1zM505 139h1v1h-1zM505 150h1v1h-1zM505 162h1v1h-1zM505 173h1v1h-1zM505 184h1v1h-1zM505 195h1v1h-1zM505 206h1v1h-1zM505 217h1v1h-1zM505 229h1v1h-1zM505 240h1v1h-1zM505 251h1v1h-1zM505 262h1v1h-1zM505 273h1v1h-1zM505 284h1v1h-1zM505 296h1v1h-1zM505 307h1v1h-1zM505 318h1v1h-1zM505 329h1v1h-1zM505 340h1v1h-1zM505 351h1v1h-1zM505 363h1v1h-1zM505 374h1v1h-1zM505 385h1v1h-1zM505 396h1v1h-1zM505 407h1v1h-1zM505 418h1v1h-1zM505 430h1v1h-1zM505 441h1v1h-1zM505 452h1v1h-1zM505 463h1v1h-1zM505 474h1v1h-1zM505 485h1v1h-1zM505 496h1v1h-1zM505 508h1v1h-1zM505 519h1v1h-1zM505 530h1v1h-1zM505 541h1v1h-1zM505 552h1v1h-1zM505 563h1v1h-1zM505 575h1v1h-1zM505 586h1v1h-1zM516 83h1v1h-1zM516 95h1v1h-1zM516 106h1v1h-1zM516 117h1v1h-1zM516 128h1v1h-1zM516 139h1v1h-1zM516 150h1v1h-1zM516 162h1v1h-1zM516 173h1v1h-1zM516 184h1v1h-1zM516 195h1v1h-1zM516 206h1v1h-1zM516 217h1v1h-1zM516 229h1v1h-1zM516 240h1v1h-1zM516 251h1v1h-1zM516 262h1v1h-1zM516 273h1v1h-1zM516 284h1v1h-1zM516 296h1v1h-1zM516 307h1v1h-1zM516 318h1v1h-1zM516 329h1v1h-1zM516 340h1v1h-1zM516 351h1v1h-1zM516 363h1v1h-1zM516 374h1v1h-1zM516 385h1v1h-1zM516 396h1v1h-1zM516 407h1v1h-1zM516 418h1v1h-1zM516 430h1v1h-1zM516 441h1v1h-1zM516 452h1v1h-1zM516 463h1v1h-1zM516 474h1v1h-1zM516 485h1v1h-1zM516 496h1v1h-1zM516 508h1v1h-1zM516 519h1v1h-1zM516 530h1v1h-1zM516 541h1v1h-1zM516 552h1v1h-1zM516 563h1v1h-1zM516 575h1v1h-1zM516 586h1v1h-1zM527 83h1v1h-1zM527 95h1v1h-1zM527 106h1v1h-1zM527 117h1v1h-1zM527 128h1v1h-1zM527 139h1v1h-1zM527 150h1v1h-1zM527 162h1v1h-1zM527 173h1v1h-1zM527 184h1v1h-1zM527 195h1v1h-1zM527 206h1v1h-1zM527 217h1v1h-1zM527 229h1v1h-1zM527 240h1v1h-1zM527 251h1v1h-1zM527 262h1v1h-1zM527 273h1v1h-1zM527 284h1v1h-1zM527 296h1v1h-1zM527 307h1v1h-1zM527 318h1v1h-1zM527 329h1v1h-1zM527 340h1v1h-1zM527 351h1v1h-1zM527 363h1v1h-1zM527 374h1v1h-1zM527 385h1v1h-1zM527 396h1v1h-1zM527 407h1v1h-1zM527 418h1v1h-1zM527 430h1v1h-1zM527 441h1v1h-1zM527 452h1v1h-1zM527 463h1v1h-1zM527 474h1v1h-1zM527 485h1v1h-1zM527 496h1v1h-1zM527 508h1v1h-1zM527 519h1v1h-1zM527 530h1v1h-1zM527 541h1v1h-1zM527 552h1v1h-1zM527 563h1v1h-1zM527 575h1v1h-1zM527 586h1v1h-1zM539 83h1v1h-1zM539 95h1v1h-1zM539 106h1v1h-1zM539 117h1v1h-1zM539 128h1v1h-1zM539 139h1v1h-1zM539 150h1v1h-1zM539 162h1v1h-1zM539 173h1v1h-1zM539 184h1v1h-1zM539 195h1v1h-1zM539 206h1v1h-1zM539 217h1v1h-1zM539 229h1v1h-1zM539 240h1v1h-1zM539 251h1v1h-1zM539 262h1v1h-1zM539 273h1v1h-1zM539 284h1v1h-1zM539 296h1v1h-1zM539 307h1v1h-1zM539 318h1v1h-1zM539 329h1v1h-1zM539 340h1v1h-1zM539 351h1v1h-1zM539 363h1v1h-1zM539 374h1v1h-1zM539 385h1v1h-1zM539 396h1v1h-1zM539 407h1v1h-1zM539 418h1v1h-1zM539 430h1v1h-1zM539 441h1v1h-1zM539 452h1v1h-1zM539 463h1v1h-1zM539 474h1v1h-1zM539 485h1v1h-1zM539 496h1v1h-1zM539 508h1v1h-1zM539 519h1v1h-1zM539 530h1v1h-1zM539 541h1v1h-1zM539 552h1v1h-1zM539 563h1v1h-1zM539 575h1v1h-1zM539 586h1v1h-1zM550 83h1v1h-1zM550 95h1v1h-1zM550 106h1v1h-1zM550 117h1v1h-1zM550 128h1v1h-1zM550 139h1v1h-1zM550 150h1v1h-1zM550 162h1v1h-1zM550 173h1v1h-1zM550 184h1v1h-1zM550 195h1v1h-1zM550 206h1v1h-1zM550 217h1v1h-1zM550 229h1v1h-1zM550 240h1v1h-1zM550 251h1v1h-1zM550 262h1v1h-1zM550 273h1v1h-1zM550 284h1v1h-1zM550 296h1v1h-1zM550 307h1v1h-1zM550 318h1v1h-1zM550 329h1v1h-1zM550 340h1v1h-1zM550 351h1v1h-1zM550 363h1v1h-1zM550 374h1v1h-1zM550 385h1v1h-1zM550 396h1v1h-1zM550 407h1v1h-1zM550 418h1v1h-1zM550 430h1v1h-1zM550 441h1v1h-1zM550 452h1v1h-1zM550 463h1v1h-1zM550 474h1v1h-1zM550 485h1v1h-1zM550 496h1v1h-1zM550 508h1v1h-1zM550 519h1v1h-1zM550 530h1v1h-1zM550 541h1v1h-1zM550 552h1v1h-1zM550 563h1v1h-1zM550 575h1v1h-1zM550 586h1v1h-1zM561 83h1v1h-1zM561 95h1v1h-1zM561 106h1v1h-1zM561 117h1v1h-1zM561 128h1v1h-1zM561 139h1v1h-1zM561 150h1v1h-1zM561 162h1v1h-1zM561 173h1v1h-1zM561 184h1v1h-1zM561 195h1v1h-1zM561 206h1v1h-1zM561 217h1v1h-1zM561 229h1v1h-1zM561 240h1v1h-1zM561 251h1v1h-1zM561 262h1v1h-1zM561 273h1v1h-1zM561 284h1v1h-1zM561 296h1v1h-1zM561 307h1v1h-1zM561 318h1v1h-1zM561 329h1v1h-1zM561 340h1v1h-1zM561 351h1v1h-1zM561 363h1v1h-1zM561 374h1v1h-1zM561 385h1v1h-1zM561 396h1v1h-1zM561 407h1v1h-1zM561 418h1v1h-1zM561 430h1v1h-1zM561 441h1v1h-1zM561 452h1v1h-1zM561 463h1v1h-1zM561 474h1v1h-1zM561 485h1v1h-1zM561 496h1v1h-1zM561 508h1v1h-1zM561 519h1v1h-1zM561 530h1v1h-1zM561 541h1v1h-1zM561 552h1v1h-1zM561 563h1v1h-1zM561 575h1v1h-1zM561 586h1v1h-1zM572 83h1v1h-1zM572 95h1v1h-1zM572 106h1v1h-1zM572 117h1v1h-1zM572 128h1v1h-1zM572 139h1v1h-1zM572 150h1v1h-1zM572 162h1v1h-1zM572 173h1v1h-1zM572 184h1v1h-1zM572 195h1v1h-1zM572 206h1v1h-1zM572 217h1v1h-1zM572 229h1v1h-1zM572 240h1v1h-1zM572 251h1v1h-1zM572 262h1v1h-1zM572 273h1v1h-1zM572 284h1v1h-1zM572 296h1v1h-1zM572 307h1v1h-1zM572 318h1v1h-1zM572 329h1v1h-1zM572 340h1v1h-1zM572 351h1v1h-1zM572 363h1v1h-1zM572 374h1v1h-1zM572 385h1v1h-1zM572 396h1v1h-1zM572 407h1v1h-1zM572 418h1v1h-1zM572 430h1v1h-1zM572 441h1v1h-1zM572 452h1v1h-1zM572 463h1v1h-1zM572 474h1v1h-1zM572 485h1v1h-1zM572 496h1v1h-1zM572 508h1v1h-1zM572 519h1v1h-1zM572 530h1v1h-1zM572 541h1v1h-1zM572 552h1v1h-1zM572 563h1v1h-1zM572 575h1v1h-1zM572 586h1v1h-1zM583 83h1v1h-1zM583 95h1v1h-1zM583 106h1v1h-1zM583 117h1v1h-1zM583 128h1v1h-1zM583 139h1v1h-1zM583 150h1v1h-1zM583 162h1v1h-1zM583 173h1v1h-1zM583 184h1v1h-1zM583 195h1v1h-1zM583 206h1v1h-1zM583 217h1v1h-1zM583 229h1v1h-1zM583 240h1v1h-1zM583 251h1v1h-1zM583 262h1v1h-1zM583 273h1v1h-1zM583 284h1v1h-1zM583 296h1v1h-1zM583 307h1v1h-1zM583 318h1v1h-1zM583 329h1v1h-1zM583 340h1v1h-1zM583 351h1v1h-1zM583 363h1v1h-1zM583 374h1v1h-1zM583 385h1v1h-1zM583 396h1v1h-1zM583 407h1v1h-1zM583 418h1v1h-1zM583 430h1v1h-1zM583 441h1v1h-1zM583 452h1v1h-1zM583 463h1v1h-1zM583 474h1v1h-1zM583 485h1v1h-1zM583 496h1v1h-1zM583 508h1v1h-1zM583 519h1v1h-1zM583 530h1v1h-1zM583 541h1v1h-1zM583 552h1v1h-1zM583 563h1v1h-1zM583 575h1v1h-1zM583 586h1v1h-1zM594 83h1v1h-1zM594 95h1v1h-1zM594 106h1v1h-1zM594 117h1v1h-1zM594 128h1v1h-1zM594 139h1v1h-1zM594 150h1v1h-1zM594 162h1v1h-1zM594 173h1v1h-1zM594 184h1v1h-1zM594 195h1v1h-1zM594 206h1v1h-1zM594 217h1v1h-1zM594 229h1v1h-1zM594 240h1v1h-1zM594 251h1v1h-1zM594 262h1v1h-1zM594 273h1v1h-1zM594 284h1v1h-1zM594 296h1v1h-1zM594 307h1v1h-1zM594 318h1v1h-1zM594 329h1v1h-1zM594 340h1v1h-1zM594 351h1v1h-1zM594 363h1v1h-1zM594 374h1v1h-1zM594 385h1v1h-1zM594 396h1v1h-1zM594 407h1v1h-1zM594 418h1v1h-1zM594 430h1v1h-1zM594 441h1v1h-1zM594 452h1v1h-1zM594 463h1v1h-1zM594 474h1v1h-1zM594 485h1v1h-1zM594 496h1v1h-1zM594 508h1v1h-1zM594 519h1v1h-1zM594 530h1v1h-1zM594 541h1v1h-1zM594 552h1v1h-1zM594 563h1v1h-1zM594 575h1v1h-1zM594 586h1v1h-1zM606 83h1v1h-1zM606 95h1v1h-1zM606 106h1v1h-1zM606 117h1v1h-1zM606 128h1v1h-1zM606 139h1v1h-1zM606 150h1v1h-1zM606 162h1v1h-1zM606 173h1v1h-1zM606 184h1v1h-1zM606 195h1v1h-1zM606 206h1v1h-1zM606 217h1v1h-1zM606 229h1v1h-1zM606 240h1v1h-1zM606 251h1v1h-1zM606 262h1v1h-1zM606 273h1v1h-1zM606 284h1v1h-1zM606 296h1v1h-1zM606 307h1v1h-1zM606 318h1v1h-1zM606 329h1v1h-1zM606 340h1v1h-1zM606 351h1v1h-1zM606 363h1v1h-1zM606 374h1v1h-1zM606 385h1v1h-1zM606 396h1v1h-1zM606 407h1v1h-1zM606 418h1v1h-1zM606 430h1v1h-1zM606 441h1v1h-1zM606 452h1v1h-1zM606 463h1v1h-1zM606 474h1v1h-1zM606 485h1v1h-1zM606 496h1v1h-1zM606 508h1v1h-1zM606 519h1v1h-1zM606 530h1v1h-1zM606 541h1v1h-1zM606 552h1v1h-1zM606 563h1v1h-1zM606 575h1v1h-1zM606 586h1v1h-1zM617 83h1v1h-1zM617 95h1v1h-1zM617 106h1v1h-1zM617 117h1v1h-1zM617 128h1v1h-1zM617 139h1v1h-1zM617 150h1v1h-1zM617 162h1v1h-1zM617 173h1v1h-1zM617 184h1v1h-1zM617 195h1v1h-1zM617 206h1v1h-1zM617 217h1v1h-1zM617 229h1v1h-1zM617 240h1v1h-1zM617 251h1v1h-1zM617 262h1v1h-1zM617 273h1v1h-1zM617 284h1v1h-1zM617 296h1v1h-1zM617 307h1v1h-1zM617 318h1v1h-1zM617 329h1v1h-1zM617 340h1v1h-1zM617 351h1v1h-1zM617 363h1v1h-1zM617 374h1v1h-1zM617 385h1v1h-1zM617 396h1v1h-1zM617 407h1v1h-1zM617 418h1v1h-1zM617 430h1v1h-1zM617 441h1v1h-1zM617 452h1v1h-1zM617 463h1v1h-1zM617 474h1v1h-1zM617 485h1v1h-1zM617 496h1v1h-1zM617 508h1v1h-1zM617 519h1v1h-1zM617 530h1v1h-1zM617 541h1v1h-1zM617 552h1v1h-1zM617 563h1v1h-1zM617 575h1v1h-1zM617 586h1v1h-1zM628 83h1v1h-1zM628 95h1v1h-1zM628 106h1v1h-1zM628 117h1v1h-1zM628 128h1v1h-1zM628 139h1v1h-1zM628 150h1v1h-1zM628 162h1v1h-1zM628 173h1v1h-1zM628 184h1v1h-1zM628 195h1v1h-1zM628 206h1v1h-1zM628 217h1v1h-1zM628 229h1v1h-1zM628 240h1v1h-1zM628 251h1v1h-1zM628 262h1v1h-1zM628 273h1v1h-1zM628 284h1v1h-1zM628 296h1v1h-1zM628 307h1v1h-1zM628 318h1v1h-1zM628 329h1v1h-1zM628 340h1v1h-1zM628 351h1v1h-1zM628 363h1v1h-1zM628 374h1v1h-1zM628 385h1v1h-1zM628 396h1v1h-1zM628 407h1v1h-1zM628 418h1v1h-1zM628 430h1v1h-1zM628 441h1v1h-1zM628 452h1v1h-1zM628 463h1v1h-1zM628 474h1v1h-1zM628 485h1v1h-1zM628 496h1v1h-1zM628 508h1v1h-1zM628 519h1v1h-1zM628 530h1v1h-1zM628 541h1v1h-1zM628 552h1v1h-1zM628 563h1v1h-1zM628 575h1v1h-1zM628 586h1v1h-1zM639 83h1v1h-1zM639 95h1v1h-1zM639 106h1v1h-1zM639 117h1v1h-1zM639 128h1v1h-1zM639 139h1v1h-1zM639 150h1v1h-1zM639 162h1v1h-1zM639 173h1v1h-1zM639 184h1v1h-1zM639 195h1v1h-1zM639 206h1v1h-1zM639 217h1v1h-1zM639 229h1v1h-1zM639 240h1v1h-1zM639 251h1v1h-1zM639 262h1v1h-1zM639 273h1v1h-1zM639 284h1v1h-1zM639 296h1v1h-1zM639 307h1v1h-1zM639 318h1v1h-1zM639 329h1v1h-1zM639 340h1v1h-1zM639 351h1v1h-1zM639 363h1v1h-1zM639 374h1v1h-1zM639 385h1v1h-1zM639 396h1v1h-1zM639 407h1v1h-1zM639 418h1v1h-1zM639 430h1v1h-1zM639 441h1v1h-1zM639 452h1v1h-1zM639 463h1v1h-1zM639 474h1v1h-1zM639 485h1v1h-1zM639 496h1v1h-1zM639 508h1v1h-1zM639 519h1v1h-1zM639 530h1v1h-1zM639 541h1v1h-1zM639 552h1v1h-1zM639 563h1v1h-1zM639 575h1v1h-1zM639 586h1v1h-1zM650 83h1v1h-1zM650 95h1v1h-1zM650 106h1v1h-1zM650 117h1v1h-1zM650 128h1v1h-1zM650 139h1v1h-1zM650 150h1v1h-1zM650 162h1v1h-1zM650 173h1v1h-1zM650 184h1v1h-1zM650 195h1v1h-1zM650 206h1v1h-1zM650 217h1v1h-1zM650 229h1v1h-1zM650 240h1v1h-1zM650 251h1v1h-1zM650 262h1v1h-1zM650 273h1v1h-1zM650 284h1v1h-1zM650 296h1v1h-1zM650 307h1v1h-1zM650 318h1v1h-1zM650 329h1v1h-1zM650 340h1v1h-1zM650 351h1v1h-1zM650 363h1v1h-1zM650 374h1v1h-1zM650 385h1v1h-1zM650 396h1v1h-1zM650 407h1v1h-1zM650 418h1v1h-1zM650 430h1v1h-1zM650 441h1v1h-1zM650 452h1v1h-1zM650 463h1v1h-1zM650 474h1v1h-1zM650 485h1v1h-1zM650 496h1v1h-1zM650 508h1v1h-1zM650 519h1v1h-1zM650 530h1v1h-1zM650 541h1v1h-1zM650 552h1v1h-1zM650 563h1v1h-1zM650 575h1v1h-1zM650 586h1v1h-1zM661 83h1v1h-1zM661 95h1v1h-1zM661 106h1v1h-1zM661 117h1v1h-1zM661 128h1v1h-1zM661 139h1v1h-1zM661 150h1v1h-1zM661 162h1v1h-1zM661 173h1v1h-1zM661 184h1v1h-1zM661 195h1v1h-1zM661 206h1v1h-1zM661 217h1v1h-1zM661 229h1v1h-1zM661 240h1v1h-1zM661 251h1v1h-1zM661 262h1v1h-1zM661 273h1v1h-1zM661 284h1v1h-1zM661 296h1v1h-1zM661 307h1v1h-1zM661 318h1v1h-1zM661 329h1v1h-1zM661 340h1v1h-1zM661 351h1v1h-1zM661 363h1v1h-1zM661 374h1v1h-1zM661 385h1v1h-1zM661 396h1v1h-1zM661 407h1v1h-1zM661 418h1v1h-1zM661 430h1v1h-1zM661 441h1v1h-1zM661 452h1v1h-1zM661 463h1v1h-1zM661 474h1v1h-1zM661 485h1v1h-1zM661 496h1v1h-1zM661 508h1v1h-1zM661 519h1v1h-1zM661 530h1v1h-1zM661 541h1v1h-1zM661 552h1v1h-1zM661 563h1v1h-1zM661 575h1v1h-1zM661 586h1v1h-1zM673 83h1v1h-1zM673 95h1v1h-1zM673 106h1v1h-1zM673 117h1v1h-1zM673 128h1v1h-1zM673 139h1v1h-1zM673 150h1v1h-1zM673 162h1v1h-1zM673 173h1v1h-1zM673 184h1v1h-1zM673 195h1v1h-1zM673 206h1v1h-1zM673 217h1v1h-1zM673 229h1v1h-1zM673 240h1v1h-1zM673 251h1v1h-1zM673 262h1v1h-1zM673 273h1v1h-1zM673 284h1v1h-1zM673 296h1v1h-1zM673 307h1v1h-1zM673 318h1v1h-1zM673 329h1v1h-1zM673 340h1v1h-1zM673 351h1v1h-1zM673 363h1v1h-1zM673 374h1v1h-1zM673 385h1v1h-1zM673 396h1v1h-1zM673 407h1v1h-1zM673 418h1v1h-1zM673 430h1v1h-1zM673 441h1v1h-1zM673 452h1v1h-1zM673 463h1v1h-1zM673 474h1v1h-1zM673 485h1v1h-1zM673 496h1v1h-1zM673 508h1v1h-1zM673 519h1v1h-1zM673 530h1v1h-1zM673 541h1v1h-1zM673 552h1v1h-1zM673 563h1v1h-1zM673 575h1v1h-1zM673 586h1v1h-1zM684 83h1v1h-1zM684 95h1v1h-1zM684 106h1v1h-1zM684 117h1v1h-1zM684 128h1v1h-1zM684 139h1v1h-1zM684 150h1v1h-1zM684 162h1v1h-1zM684 173h1v1h-1zM684 184h1v1h-1zM684 195h1v1h-1zM684 206h1v1h-1zM684 217h1v1h-1zM684 229h1v1h-1zM684 240h1v1h-1zM684 251h1v1h-1zM684 262h1v1h-1zM684 273h1v1h-1zM684 284h1v1h-1zM684 296h1v1h-1zM684 307h1v1h-1zM684 318h1v1h-1zM684 329h1v1h-1zM684 340h1v1h-1zM684 351h1v1h-1zM684 363h1v1h-1zM684 374h1v1h-1zM684 385h1v1h-1zM684 396h1v1h-1zM684 407h1v1h-1zM684 418h1v1h-1zM684 430h1v1h-1zM684 441h1v1h-1zM684 452h1v1h-1zM684 463h1v1h-1zM684 474h1v1h-1zM684 485h1v1h-1zM684 496h1v1h-1zM684 508h1v1h-1zM684 519h1v1h-1zM684 530h1v1h-1zM684 541h1v1h-1zM684 552h1v1h-1zM684 563h1v1h-1zM684 575h1v1h-1zM684 586h1v1h-1zM695 83h1v1h-1zM695 95h1v1h-1zM695 106h1v1h-1zM695 117h1v1h-1zM695 128h1v1h-1zM695 139h1v1h-1zM695 150h1v1h-1zM695 162h1v1h-1zM695 173h1v1h-1zM695 184h1v1h-1zM695 195h1v1h-1zM695 206h1v1h-1zM695 217h1v1h-1zM695 229h1v1h-1zM695 240h1v1h-1zM695 251h1v1h-1zM695 262h1v1h-1zM695 273h1v1h-1zM695 284h1v1h-1zM695 296h1v1h-1zM695 307h1v1h-1zM695 318h1v1h-1zM695 329h1v1h-1zM695 340h1v1h-1zM695 351h1v1h-1zM695 363h1v1h-1zM695 374h1v1h-1zM695 385h1v1h-1zM695 396h1v1h-1zM695 407h1v1h-1zM695 418h1v1h-1zM695 430h1v1h-1zM695 441h1v1h-1zM695 452h1v1h-1zM695 463h1v1h-1zM695 474h1v1h-1zM695 485h1v1h-1zM695 496h1v1h-1zM695 508h1v1h-1zM695 519h1v1h-1zM695 530h1v1h-1zM695 541h1v1h-1zM695 552h1v1h-1zM695 563h1v1h-1zM695 575h1v1h-1zM695 586h1v1h-1zM706 83h1v1h-1zM706 95h1v1h-1zM706 106h1v1h-1zM706 117h1v1h-1zM706 128h1v1h-1zM706 139h1v1h-1zM706 150h1v1h-1zM706 162h1v1h-1zM706 173h1v1h-1zM706 184h1v1h-1zM706 195h1v1h-1zM706 206h1v1h-1zM706 217h1v1h-1zM706 229h1v1h-1zM706 240h1v1h-1zM706 251h1v1h-1zM706 262h1v1h-1zM706 273h1v1h-1zM706 284h1v1h-1zM706 296h1v1h-1zM706 307h1v1h-1zM706 318h1v1h-1zM706 329h1v1h-1zM706 340h1v1h-1zM706 351h1v1h-1zM706 363h1v1h-1zM706 374h1v1h-1zM706 385h1v1h-1zM706 396h1v1h-1zM706 407h1v1h-1zM706 418h1v1h-1zM706 430h1v1h-1zM706 441h1v1h-1zM706 452h1v1h-1zM706 463h1v1h-1zM706 474h1v1h-1zM706 485h1v1h-1zM706 496h1v1h-1zM706 508h1v1h-1zM706 519h1v1h-1zM706 530h1v1h-1zM706 541h1v1h-1zM706 552h1v1h-1zM706 563h1v1h-1zM706 575h1v1h-1zM706 586h1v1h-1zM717 83h1v1h-1zM717 95h1v1h-1zM717 106h1v1h-1zM717 117h1v1h-1zM717 128h1v1h-1zM717 139h1v1h-1zM717 150h1v1h-1zM717 162h1v1h-1zM717 173h1v1h-1zM717 184h1v1h-1zM717 195h1v1h-1zM717 206h1v1h-1zM717 217h1v1h-1zM717 229h1v1h-1zM717 240h1v1h-1zM717 251h1v1h-1zM717 262h1v1h-1zM717 273h1v1h-1zM717 284h1v1h-1zM717 296h1v1h-1zM717 307h1v1h-1zM717 318h1v1h-1zM717 329h1v1h-1zM717 340h1v1h-1zM717 351h1v1h-1zM717 363h1v1h-1zM717 374h1v1h-1zM717 385h1v1h-1zM717 396h1v1h-1zM717 407h1v1h-1zM717 418h1v1h-1zM717 430h1v1h-1zM717 441h1v1h-1zM717 452h1v1h-1zM717 463h1v1h-1zM717 474h1v1h-1zM717 485h1v1h-1zM717 496h1v1h-1zM717 508h1v1h-1zM717 519h1v1h-1zM717 530h1v1h-1zM717 541h1v1h-1zM717 552h1v1h-1zM717 563h1v1h-1zM717 575h1v1h-1zM717 586h1v1h-1zM728 83h1v1h-1zM728 95h1v1h-1zM728 106h1v1h-1zM728 117h1v1h-1zM728 128h1v1h-1zM728 139h1v1h-1zM728 150h1v1h-1zM728 162h1v1h-1zM728 173h1v1h-1zM728 184h1v1h-1zM728 195h1v1h-1zM728 206h1v1h-1zM728 217h1v1h-1zM728 229h1v1h-1zM728 240h1v1h-1zM728 251h1v1h-1zM728 262h1v1h-1zM728 273h1v1h-1zM728 284h1v1h-1zM728 296h1v1h-1zM728 307h1v1h-1zM728 318h1v1h-1zM728 329h1v1h-1zM728 340h1v1h-1zM728 351h1v1h-1zM728 363h1v1h-1zM728 374h1v1h-1zM728 385h1v1h-1zM728 396h1v1h-1zM728 407h1v1h-1zM728 418h1v1h-1zM728 430h1v1h-1zM728 441h1v1h-1zM728 452h1v1h-1zM728 463h1v1h-1zM728 474h1v1h-1zM728 485h1v1h-1zM728 496h1v1h-1zM728 508h1v1h-1zM728 519h1v1h-1zM728 530h1v1h-1zM728 541h1v1h-1zM728 552h1v1h-1zM728 563h1v1h-1zM728 575h1v1h-1zM728 586h1v1h-1zM740 83h1v1h-1zM740 95h1v1h-1zM740 106h1v1h-1zM740 117h1v1h-1zM740 128h1v1h-1zM740 139h1v1h-1zM740 150h1v1h-1zM740 162h1v1h-1zM740 173h1v1h-1zM740 184h1v1h-1zM740 195h1v1h-1zM740 206h1v1h-1zM740 217h1v1h-1zM740 229h1v1h-1zM740 240h1v1h-1zM740 251h1v1h-1zM740 262h1v1h-1zM740 273h1v1h-1zM740 284h1v1h-1zM740 296h1v1h-1zM740 307h1v1h-1zM740 318h1v1h-1zM740 329h1v1h-1zM740 340h1v1h-1zM740 351h1v1h-1zM740 363h1v1h-1zM740 374h1v1h-1zM740 385h1v1h-1zM740 396h1v1h-1zM740 407h1v1h-1zM740 418h1v1h-1zM740 430h1v1h-1zM740 441h1v1h-1zM740 452h1v1h-1zM740 463h1v1h-1zM740 474h1v1h-1zM740 485h1v1h-1zM740 496h1v1h-1zM740 508h1v1h-1zM740 519h1v1h-1zM740 530h1v1h-1zM740 541h1v1h-1zM740 552h1v1h-1zM740 563h1v1h-1zM740 575h1v1h-1zM740 586h1v1h-1zM751 83h1v1h-1zM751 95h1v1h-1zM751 106h1v1h-1zM751 117h1v1h-1zM751 128h1v1h-1zM751 139h1v1h-1zM751 150h1v1h-1zM751 162h1v1h-1zM751 173h1v1h-1zM751 184h1v1h-1zM751 195h1v1h-1zM751 206h1v1h-1zM751 217h1v1h-1zM751 229h1v1h-1zM751 240h1v1h-1zM751 251h1v1h-1zM751 262h1v1h-1zM751 273h1v1h-1zM751 284h1v1h-1zM751 296h1v1h-1zM751 307h1v1h-1zM751 318h1v1h-1zM751 329h1v1h-1zM751 340h1v1h-1zM751 351h1v1h-1zM751 363h1v1h-1zM751 374h1v1h-1zM751 385h1v1h-1zM751 396h1v1h-1zM751 407h1v1h-1zM751 418h1v1h-1zM751 430h1v1h-1zM751 441h1v1h-1zM751 452h1v1h-1zM751 463h1v1h-1zM751 474h1v1h-1zM751 485h1v1h-1zM751 496h1v1h-1zM751 508h1v1h-1zM751 519h1v1h-1zM751 530h1v1h-1zM751 541h1v1h-1zM751 552h1v1h-1zM751 563h1v1h-1zM751 575h1v1h-1zM751 586h1v1h-1zM762 83h1v1h-1zM762 95h1v1h-1zM762 106h1v1h-1zM762 117h1v1h-1zM762 128h1v1h-1zM762 139h1v1h-1zM762 150h1v1h-1zM762 162h1v1h-1zM762 173h1v1h-1zM762 184h1v1h-1zM762 195h1v1h-1zM762 206h1v1h-1zM762 217h1v1h-1zM762 229h1v1h-1zM762 240h1v1h-1zM762 251h1v1h-1zM762 262h1v1h-1zM762 273h1v1h-1zM762 284h1v1h-1zM762 296h1v1h-1zM762 307h1v1h-1zM762 318h1v1h-1zM762 329h1v1h-1zM762 340h1v1h-1zM762 351h1v1h-1zM762 363h1v1h-1zM762 374h1v1h-1zM762 385h1v1h-1zM762 396h1v1h-1zM762 407h1v1h-1zM762 418h1v1h-1zM762 430h1v1h-1zM762 441h1v1h-1zM762 452h1v1h-1zM762 463h1v1h-1zM762 474h1v1h-1zM762 485h1v1h-1zM762 496h1v1h-1zM762 508h1v1h-1zM762 519h1v1h-1zM762 530h1v1h-1zM762 541h1v1h-1zM762 552h1v1h-1zM762 563h1v1h-1zM762 575h1v1h-1zM762 586h1v1h-1zM773 83h1v1h-1zM773 95h1v1h-1zM773 106h1v1h-1zM773 117h1v1h-1zM773 128h1v1h-1zM773 139h1v1h-1zM773 150h1v1h-1zM773 162h1v1h-1zM773 173h1v1h-1zM773 184h1v1h-1zM773 195h1v1h-1zM773 206h1v1h-1zM773 217h1v1h-1zM773 229h1v1h-1zM773 240h1v1h-1zM773 251h1v1h-1zM773 262h1v1h-1zM773 273h1v1h-1zM773 284h1v1h-1zM773 296h1v1h-1zM773 307h1v1h-1zM773 318h1v1h-1zM773 329h1v1h-1zM773 340h1v1h-1zM773 351h1v1h-1zM773 363h1v1h-1zM773 374h1v1h-1zM773 385h1v1h-1zM773 396h1v1h-1zM773 407h1v1h-1zM773 418h1v1h-1zM773 430h1v1h-1zM773 441h1v1h-1zM773 452h1v1h-1zM773 463h1v1h-1zM773 474h1v1h-1zM773 485h1v1h-1zM773 496h1v1h-1zM773 508h1v1h-1zM773 519h1v1h-1zM773 530h1v1h-1zM773 541h1v1h-1zM773 552h1v1h-1zM773 563h1v1h-1zM773 575h1v1h-1zM773 586h1v1h-1zM784 83h1v1h-1zM784 95h1v1h-1zM784 106h1v1h-1zM784 117h1v1h-1zM784 128h1v1h-1zM784 139h1v1h-1zM784 150h1v1h-1zM784 162h1v1h-1zM784 173h1v1h-1zM784 184h1v1h-1zM784 195h1v1h-1zM784 206h1v1h-1zM784 217h1v1h-1zM784 229h1v1h-1zM784 240h1v1h-1zM784 251h1v1h-1zM784 262h1v1h-1zM784 273h1v1h-1zM784 284h1v1h-1zM784 296h1v1h-1zM784 307h1v1h-1zM784 318h1v1h-1zM784 329h1v1h-1zM784 340h1v1h-1zM784 351h1v1h-1zM784 363h1v1h-1zM784 374h1v1h-1zM784 385h1v1h-1zM784 396h1v1h-1zM784 407h1v1h-1zM784 418h1v1h-1zM784 430h1v1h-1zM784 441h1v1h-1zM784 452h1v1h-1zM784 463h1v1h-1zM784 474h1v1h-1zM784 485h1v1h-1zM784 496h1v1h-1zM784 508h1v1h-1zM784 519h1v1h-1zM784 530h1v1h-1zM784 541h1v1h-1zM784 552h1v1h-1zM784 563h1v1h-1zM784 575h1v1h-1zM784 586h1v1h-1zM795 83h1v1h-1zM795 95h1v1h-1zM795 106h1v1h-1zM795 117h1v1h-1zM795 128h1v1h-1zM795 139h1v1h-1zM795 150h1v1h-1zM795 162h1v1h-1zM795 173h1v1h-1zM795 184h1v1h-1zM795 195h1v1h-1zM795 206h1v1h-1zM795 217h1v1h-1zM795 229h1v1h-1zM795 240h1v1h-1zM795 251h1v1h-1zM795 262h1v1h-1zM795 273h1v1h-1zM795 284h1v1h-1zM795 296h1v1h-1zM795 307h1v1h-1zM795 318h1v1h-1zM795 329h1v1h-1zM795 340h1v1h-1zM795 351h1v1h-1zM795 363h1v1h-1zM795 374h1v1h-1zM795 385h1v1h-1zM795 396h1v1h-1zM795 407h1v1h-1zM795 418h1v1h-1zM795 430h1v1h-1zM795 441h1v1h-1zM795 452h1v1h-1zM795 463h1v1h-1zM795 474h1v1h-1zM795 485h1v1h-1zM795 496h1v1h-1zM795 508h1v1h-1zM795 519h1v1h-1zM795 530h1v1h-1zM795 541h1v1h-1zM795 552h1v1h-1zM795 563h1v1h-1zM795 575h1v1h-1zM795 586h1v1h-1zM807 83h1v1h-1zM807 95h1v1h-1zM807 106h1v1h-1zM807 117h1v1h-1zM807 128h1v1h-1zM807 139h1v1h-1zM807 150h1v1h-1zM807 162h1v1h-1zM807 173h1v1h-1zM807 184h1v1h-1zM807 195h1v1h-1zM807 206h1v1h-1zM807 217h1v1h-1zM807 229h1v1h-1zM807 240h1v1h-1zM807 251h1v1h-1zM807 262h1v1h-1zM807 273h1v1h-1zM807 284h1v1h-1zM807 296h1v1h-1zM807 307h1v1h-1zM807 318h1v1h-1zM807 329h1v1h-1zM807 340h1v1h-1zM807 351h1v1h-1zM807 363h1v1h-1zM807 374h1v1h-1zM807 385h1v1h-1zM807 396h1v1h-1zM807 407h1v1h-1zM807 418h1v1h-1zM807 430h1v1h-1zM807 441h1v1h-1zM807 452h1v1h-1zM807 463h1v1h-1zM807 474h1v1h-1zM807 485h1v1h-1zM807 496h1v1h-1zM807 508h1v1h-1zM807 519h1v1h-1zM807 530h1v1h-1zM807 541h1v1h-1zM807 552h1v1h-1zM807 563h1v1h-1zM807 575h1v1h-1zM807 586h1v1h-1zM818 83h1v1h-1zM818 95h1v1h-1zM818 106h1v1h-1zM818 117h1v1h-1zM818 128h1v1h-1zM818 139h1v1h-1zM818 150h1v1h-1zM818 162h1v1h-1zM818 173h1v1h-1zM818 184h1v1h-1zM818 195h1v1h-1zM818 206h1v1h-1zM818 217h1v1h-1zM818 229h1v1h-1zM818 240h1v1h-1zM818 251h1v1h-1zM818 262h1v1h-1zM818 273h1v1h-1zM818 284h1v1h-1zM818 296h1v1h-1zM818 307h1v1h-1zM818 318h1v1h-1zM818 329h1v1h-1zM818 340h1v1h-1zM818 351h1v1h-1zM818 363h1v1h-1zM818 374h1v1h-1zM818 385h1v1h-1zM818 396h1v1h-1zM818 407h1v1h-1zM818 418h1v1h-1zM818 430h1v1h-1zM818 441h1v1h-1zM818 452h1v1h-1zM818 463h1v1h-1zM818 474h1v1h-1zM818 485h1v1h-1zM818 496h1v1h-1zM818 508h1v1h-1zM818 519h1v1h-1zM818 530h1v1h-1zM818 541h1v1h-1zM818 552h1v1h-1zM818 563h1v1h-1zM818 575h1v1h-1zM818 586h1v1h-1zM829 83h1v1h-1zM829 95h1v1h-1zM829 106h1v1h-1zM829 117h1v1h-1zM829 128h1v1h-1zM829 139h1v1h-1zM829 150h1v1h-1zM829 162h1v1h-1zM829 173h1v1h-1zM829 184h1v1h-1zM829 195h1v1h-1zM829 206h1v1h-1zM829 217h1v1h-1zM829 229h1v1h-1zM829 240h1v1h-1zM829 251h1v1h-1zM829 262h1v1h-1zM829 273h1v1h-1zM829 284h1v1h-1zM829 296h1v1h-1zM829 307h1v1h-1zM829 318h1v1h-1zM829 329h1v1h-1zM829 340h1v1h-1zM829 351h1v1h-1zM829 363h1v1h-1zM829 374h1v1h-1zM829 385h1v1h-1zM829 396h1v1h-1zM829 407h1v1h-1zM829 418h1v1h-1zM829 430h1v1h-1zM829 441h1v1h-1zM829 452h1v1h-1zM829 463h1v1h-1zM829 474h1v1h-1zM829 485h1v1h-1zM829 496h1v1h-1zM829 508h1v1h-1zM829 519h1v1h-1zM829 530h1v1h-1zM829 541h1v1h-1zM829 552h1v1h-1zM829 563h1v1h-1zM829 575h1v1h-1zM829 586h1v1h-1zM840 83h1v1h-1zM840 95h1v1h-1zM840 106h1v1h-1zM840 117h1v1h-1zM840 128h1v1h-1zM840 139h1v1h-1zM840 150h1v1h-1zM840 162h1v1h-1zM840 173h1v1h-1zM840 184h1v1h-1zM840 195h1v1h-1zM840 206h1v1h-1zM840 217h1v1h-1zM840 229h1v1h-1zM840 240h1v1h-1zM840 251h1v1h-1zM840 262h1v1h-1zM840 273h1v1h-1zM840 284h1v1h-1zM840 296h1v1h-1zM840 307h1v1h-1zM840 318h1v1h-1zM840 329h1v1h-1zM840 340h1v1h-1zM840 351h1v1h-1zM840 363h1v1h-1zM840 374h1v1h-1zM840 385h1v1h-1zM840 396h1v1h-1zM840 407h1v1h-1zM840 418h1v1h-1zM840 430h1v1h-1zM840 441h1v1h-1zM840 452h1v1h-1zM840 463h1v1h-1zM840 474h1v1h-1zM840 485h1v1h-1zM840 496h1v1h-1zM840 508h1v1h-1zM840 519h1v1h-1zM840 530h1v1h-1zM840 541h1v1h-1zM840 552h1v1h-1zM840 563h1v1h-1zM840 575h1v1h-1zM840 586h1v1h-1zM851 83h1v1h-1zM851 95h1v1h-1zM851 106h1v1h-1zM851 117h1v1h-1zM851 128h1v1h-1zM851 139h1v1h-1zM851 150h1v1h-1zM851 162h1v1h-1zM851 173h1v1h-1zM851 184h1v1h-1zM851 195h1v1h-1zM851 206h1v1h-1zM851 217h1v1h-1zM851 229h1v1h-1zM851 240h1v1h-1zM851 251h1v1h-1zM851 262h1v1h-1zM851 273h1v1h-1zM851 284h1v1h-1zM851 296h1v1h-1zM851 307h1v1h-1zM851 318h1v1h-1zM851 329h1v1h-1zM851 340h1v1h-1zM851 351h1v1h-1zM851 363h1v1h-1zM851 374h1v1h-1zM851 385h1v1h-1zM851 396h1v1h-1zM851 407h1v1h-1zM851 418h1v1h-1zM851 430h1v1h-1zM851 441h1v1h-1zM851 452h1v1h-1zM851 463h1v1h-1zM851 474h1v1h-1zM851 485h1v1h-1zM851 496h1v1h-1zM851 508h1v1h-1zM851 519h1v1h-1zM851 530h1v1h-1zM851 541h1v1h-1zM851 552h1v1h-1zM851 563h1v1h-1zM851 575h1v1h-1zM851 586h1v1h-1zM862 83h1v1h-1zM862 95h1v1h-1zM862 106h1v1h-1zM862 117h1v1h-1zM862 128h1v1h-1zM862 139h1v1h-1zM862 150h1v1h-1zM862 162h1v1h-1zM862 173h1v1h-1zM862 184h1v1h-1zM862 195h1v1h-1zM862 206h1v1h-1zM862 217h1v1h-1zM862 229h1v1h-1zM862 240h1v1h-1zM862 251h1v1h-1zM862 262h1v1h-1zM862 273h1v1h-1zM862 284h1v1h-1zM862 296h1v1h-1zM862 307h1v1h-1zM862 318h1v1h-1zM862 329h1v1h-1zM862 340h1v1h-1zM862 351h1v1h-1zM862 363h1v1h-1zM862 374h1v1h-1zM862 385h1v1h-1zM862 396h1v1h-1zM862 407h1v1h-1zM862 418h1v1h-1zM862 430h1v1h-1zM862 441h1v1h-1zM862 452h1v1h-1zM862 463h1v1h-1zM862 474h1v1h-1zM862 485h1v1h-1zM862 496h1v1h-1zM862 508h1v1h-1zM862 519h1v1h-1zM862 530h1v1h-1zM862 541h1v1h-1zM862 552h1v1h-1zM862 563h1v1h-1zM862 575h1v1h-1zM862 586h1v1h-1zM874 83h1v1h-1zM874 95h1v1h-1zM874 106h1v1h-1zM874 117h1v1h-1zM874 128h1v1h-1zM874 139h1v1h-1zM874 150h1v1h-1zM874 162h1v1h-1zM874 173h1v1h-1zM874 184h1v1h-1zM874 195h1v1h-1zM874 206h1v1h-1zM874 217h1v1h-1zM874 229h1v1h-1zM874 240h1v1h-1zM874 251h1v1h-1zM874 262h1v1h-1zM874 273h1v1h-1zM874 284h1v1h-1zM874 296h1v1h-1zM874 307h1v1h-1zM874 318h1v1h-1zM874 329h1v1h-1zM874 340h1v1h-1zM874 351h1v1h-1zM874 363h1v1h-1zM874 374h1v1h-1zM874 385h1v1h-1zM874 396h1v1h-1zM874 407h1v1h-1zM874 418h1v1h-1zM874 430h1v1h-1zM874 441h1v1h-1zM874 452h1v1h-1zM874 463h1v1h-1zM874 474h1v1h-1zM874 485h1v1h-1zM874 496h1v1h-1zM874 508h1v1h-1zM874 519h1v1h-1zM874 530h1v1h-1zM874 541h1v1h-1zM874 552h1v1h-1zM874 563h1v1h-1zM874 575h1v1h-1zM874 586h1v1h-1zM885 83h1v1h-1zM885 95h1v1h-1zM885 106h1v1h-1zM885 117h1v1h-1zM885 128h1v1h-1zM885 139h1v1h-1zM885 150h1v1h-1zM885 162h1v1h-1zM885 173h1v1h-1zM885 184h1v1h-1zM885 195h1v1h-1zM885 206h1v1h-1zM885 217h1v1h-1zM885 229h1v1h-1zM885 240h1v1h-1zM885 251h1v1h-1zM885 262h1v1h-1zM885 273h1v1h-1zM885 284h1v1h-1zM885 296h1v1h-1zM885 307h1v1h-1zM885 318h1v1h-1zM885 329h1v1h-1zM885 340h1v1h-1zM885 351h1v1h-1zM885 363h1v1h-1zM885 374h1v1h-1zM885 385h1v1h-1zM885 396h1v1h-1zM885 407h1v1h-1zM885 418h1v1h-1zM885 430h1v1h-1zM885 441h1v1h-1zM885 452h1v1h-1zM885 463h1v1h-1zM885 474h1v1h-1zM885 485h1v1h-1zM885 496h1v1h-1zM885 508h1v1h-1zM885 519h1v1h-1zM885 530h1v1h-1zM885 541h1v1h-1zM885 552h1v1h-1zM885 563h1v1h-1zM885 575h1v1h-1zM885 586h1v1h-1zM896 83h1v1h-1zM896 95h1v1h-1zM896 106h1v1h-1zM896 117h1v1h-1zM896 128h1v1h-1zM896 139h1v1h-1zM896 150h1v1h-1zM896 162h1v1h-1zM896 173h1v1h-1zM896 184h1v1h-1zM896 195h1v1h-1zM896 206h1v1h-1zM896 217h1v1h-1zM896 229h1v1h-1zM896 240h1v1h-1zM896 251h1v1h-1zM896 262h1v1h-1zM896 273h1v1h-1zM896 284h1v1h-1zM896 296h1v1h-1zM896 307h1v1h-1zM896 318h1v1h-1zM896 329h1v1h-1zM896 340h1v1h-1zM896 351h1v1h-1zM896 363h1v1h-1zM896 374h1v1h-1zM896 385h1v1h-1zM896 396h1v1h-1zM896 407h1v1h-1zM896 418h1v1h-1zM896 430h1v1h-1zM896 441h1v1h-1zM896 452h1v1h-1zM896 463h1v1h-1zM896 474h1v1h-1zM896 485h1v1h-1zM896 496h1v1h-1zM896 508h1v1h-1zM896 519h1v1h-1zM896 530h1v1h-1zM896 541h1v1h-1zM896 552h1v1h-1zM896 563h1v1h-1zM896 575h1v1h-1zM896 586h1v1h-1z" fill="#474747"/>
<rect x="14" y="82" width="1" height="515" fill="#474747" />
<rect x="1" y="586" width="900" height="1" fill="#474747" />
</g>
<g shape-rendering="crispEdges">
<text class="g" x="23" y="210.2" font-family="Liberation Sans" font-size="10.3" fill="#cccccc" textLength="60" lengthAdjust="spacingAndGlyphs"  xml:space="preserve">COMMANDS2</text>
<text class="g" x="23" y="221" font-family="Liberation Sans" font-size="10.3" fill="#cccccc" textLength="59" lengthAdjust="spacingAndGlyphs"  xml:space="preserve">SIM=ngspice</text>
<path d="M20.5 235 V223.5 H60" fill="none" stroke="#88dd00" stroke-width="1"/>
<text class="g" x="28.6" y="245" font-family="Liberation Mono" font-size="9.8" fill="#cccccc" textLength="74.55" lengthAdjust="spacingAndGlyphs"  xml:space="preserve">vvss vss 0 dc 0</text>
<text class="g" x="28.6" y="255" font-family="Liberation Mono" font-size="9.8" fill="#cccccc" textLength="49.5" lengthAdjust="spacingAndGlyphs"  xml:space="preserve">vvcc vcc 0</text>
<text class="g" x="28.6" y="265" font-family="Liberation Mono" font-size="9.8" fill="#cccccc" textLength="204.81" lengthAdjust="spacingAndGlyphs"  xml:space="preserve">+ pwl 0 0 10n 0 10.1n 1.8 20n 1.8 20.1n 0</text>
<text class="g" x="28.6" y="275" font-family="Liberation Mono" font-size="9.8" fill="#cccccc" textLength="99.6" lengthAdjust="spacingAndGlyphs"  xml:space="preserve">**** interactive sim</text>
<text class="g" x="28.6" y="285" font-family="Liberation Mono" font-size="9.8" fill="#cccccc" textLength="39.48" lengthAdjust="spacingAndGlyphs"  xml:space="preserve">.control</text>
<text class="g" x="28.6" y="295" font-family="Liberation Mono" font-size="9.8" fill="#cccccc" textLength="39.48" lengthAdjust="spacingAndGlyphs"  xml:space="preserve">save all</text>
<text class="g" x="28.6" y="305" font-family="Liberation Mono" font-size="9.8" fill="#cccccc" textLength="69.54" lengthAdjust="spacingAndGlyphs"  xml:space="preserve">tran 0.01n 30n</text>
<text class="g" x="28.6" y="315" font-family="Liberation Mono" font-size="9.8" fill="#cccccc" textLength="129.66" lengthAdjust="spacingAndGlyphs"  xml:space="preserve">write test_inv_ngspice.raw</text>
<text class="g" x="28.6" y="325" font-family="Liberation Mono" font-size="9.8" fill="#cccccc" textLength="24.45" lengthAdjust="spacingAndGlyphs"  xml:space="preserve">.endc</text>
<text class="g" x="296" y="210.2" font-family="Liberation Sans" font-size="10.3" fill="#cccccc" textLength="60" lengthAdjust="spacingAndGlyphs"  xml:space="preserve">COMMANDS1</text>
<text class="g" x="296" y="221" font-family="Liberation Sans" font-size="10.3" fill="#cccccc" textLength="44.3" lengthAdjust="spacingAndGlyphs"  xml:space="preserve">SIM=xyce</text>
<path d="M293.5 235 V223.5 H333" fill="none" stroke="#88dd00" stroke-width="1"/>
<text class="g" x="302.3" y="245" font-family="Liberation Mono" font-size="9.8" fill="#cccccc" textLength="74.55" lengthAdjust="spacingAndGlyphs"  xml:space="preserve">vvss vss 0 dc 0</text>
<text class="g" x="302.3" y="255" font-family="Liberation Mono" font-size="9.8" fill="#cccccc" textLength="49.5" lengthAdjust="spacingAndGlyphs"  xml:space="preserve">vvcc vcc 0</text>
<text class="g" x="302.3" y="265" font-family="Liberation Mono" font-size="9.8" fill="#cccccc" textLength="204.81" lengthAdjust="spacingAndGlyphs"  xml:space="preserve">+ pwl 0 0 10n 0 10.1n 1.8 20n 1.8 20.1n 0</text>
<text class="g" x="302.3" y="275" font-family="Liberation Mono" font-size="9.8" fill="#cccccc" textLength="224.85" lengthAdjust="spacingAndGlyphs"  xml:space="preserve">.print tran format=raw file=test_inv_xyce.raw</text>
<text class="g" x="302.3" y="285" font-family="Liberation Mono" font-size="9.8" fill="#cccccc" textLength="54.51" lengthAdjust="spacingAndGlyphs"  xml:space="preserve">+ v(*) i(*)</text>
<text class="g" x="302.3" y="295" font-family="Liberation Mono" font-size="9.8" fill="#cccccc" textLength="74.55" lengthAdjust="spacingAndGlyphs"  xml:space="preserve">.tran 0.01n 30n</text>
</g>
<text class="g" x="589.8" y="156.8" font-family="Liberation Sans" font-size="18" fill="#88dd00" textLength="215.8" lengthAdjust="spacingAndGlyphs"  xml:space="preserve">Simple ring oscillator for</text>
<text class="g" x="589.8" y="177" font-family="Liberation Sans" font-size="18" fill="#88dd00" textLength="118.4" lengthAdjust="spacingAndGlyphs"  xml:space="preserve">speed testing</text>
<path d="M250.6 357.0 H268.3 V352.9 L286 360.4 L268.3 367.9 V363.79999999999995 H250.6 L255.1 360.4 Z" fill="#88dd00"/>
<text class="g" x="291.3" y="364" font-family="Liberation Sans" font-size="12.8" fill="#cccccc" textLength="130" lengthAdjust="spacingAndGlyphs"  xml:space="preserve">View simulation status</text>
<path d="M563.8 385.2 H581.3 V380.59999999999997 L598.1 388.2 L581.3 395.8 V391.2 H563.8 L568.0 388.2 Z" fill="#88dd00"/>
<text class="g" x="603.7" y="392" font-family="Liberation Sans" font-size="12.8" fill="#cccccc" textLength="218" lengthAdjust="spacingAndGlyphs"  xml:space="preserve">Ctrl-click to load Xyce or ngspice data</text>
<g shape-rendering="crispEdges">
<rect x="14" y="569" width="37" height="1" fill="#00ccee" />
<rect x="229" y="569" width="445" height="1" fill="#00ccee" />
</g>
<text class="g" x="235.5" y="567" font-family="Liberation Sans" font-size="12.2" fill="#cccccc" textLength="95" lengthAdjust="spacingAndGlyphs"  xml:space="preserve">Stefan Schippers</text>
<text class="g" x="235.5" y="583" font-family="Liberation Sans" font-size="12.2" fill="#cccccc" textLength="148.2" lengthAdjust="spacingAndGlyphs"  xml:space="preserve">sky130_tests/test_inv.sch</text>
<text class="g" x="551.6" y="567" font-family="Liberation Sans" font-size="12.2" fill="#cccccc" textLength="121.4" lengthAdjust="spacingAndGlyphs"  xml:space="preserve">2022-10-13  22:27:28</text>
<path d="M61.1 552.1 L73.5 552.1 L84.5 563.1 L94.7 552.1 L107.1 552.1 L90.3 569.3 L107.1 586.6 L95.1 586.6 L84.5 575.5 L73.9 586.6 L61.1 586.6 L78.8 569.3 Z" fill="#bb2200"/>
<text class="g" x="107.8" y="582.6" font-family="Liberation Sans" font-size="29.6" fill="#d4d4d4" textLength="100.2" lengthAdjust="spacingAndGlyphs"  xml:space="preserve">SCHEM</text>
<text class="g" x="23.4" y="480.7" font-family="Liberation Sans" font-size="10.3" fill="#cccccc" textLength="51.4" lengthAdjust="spacingAndGlyphs"  xml:space="preserve">TT_MODELS</text>
<g shape-rendering="crispEdges" fill="none" stroke="#88dd00" stroke-width="1">
<path d="M70.5 491.5 H75.5 V547.5 H25.5 V541.5"/>
<rect x="20.5" y="485.5" width="50" height="56"/>
<path d="M25 491.5 H37"/>
<path d="M25 497.5 H54"/>
<path d="M25 502.5 H48"/>
<path d="M25 508.5 H37"/>
<path d="M25 513.5 H48"/>
<path d="M25 519.5 H43"/>
<path d="M25 524.5 H43"/>
<path d="M25 530.5 H65"/>
<path d="M25 536.5 H37"/>
</g>
<g shape-rendering="crispEdges" fill="none" stroke="#88dd00" stroke-width="1">
<path d="M128.0 480.5 H133.5"/>
<path d="M162.5 480.5 H168.5"/>
<path d="M133.5 469.5 V491.5 L156.0 480.5 Z"/>
</g>
<circle cx="160.0" cy="480.5" r="2.4" fill="none" stroke="#88dd00" stroke-width="1" shape-rendering="crispEdges"/>
<rect x="124.5" y="478.5" width="3" height="3" fill="none" stroke="#bb2200" stroke-width="1" shape-rendering="crispEdges"/>
<text class="g" x="143.5" y="458.0" font-family="Liberation Sans" font-size="8.1" fill="#cccccc" textLength="17" lengthAdjust="spacingAndGlyphs"  xml:space="preserve">m=1</text>
<text class="g" x="129.3" y="467.0" font-family="Liberation Sans" font-size="5.6" fill="#cccccc" textLength="29.4" lengthAdjust="spacingAndGlyphs"  xml:space="preserve">p:2 / 0.15</text>
<text class="g" x="129.3" y="499.0" font-family="Liberation Sans" font-size="5.6" fill="#cccccc" textLength="29.4" lengthAdjust="spacingAndGlyphs"  xml:space="preserve">n:1 / 0.15</text>
<text class="g" x="134.8" y="482.8" font-family="Liberation Sans" font-size="5.4" fill="#cccccc" textLength="5.6" lengthAdjust="spacingAndGlyphs"  xml:space="preserve">x4</text>
<text class="g" x="140.2" y="509.0" font-family="Liberation Sans" font-size="6.2" fill="#aaaa00" textLength="10.8" lengthAdjust="spacingAndGlyphs"  xml:space="preserve">not</text>
<g shape-rendering="crispEdges" fill="none" stroke="#88dd00" stroke-width="1">
<path d="M172.0 480.5 H177.5"/>
<path d="M206.5 480.5 H213.5"/>
<path d="M177.5 469.5 V491.5 L200.0 480.5 Z"/>
</g>
<circle cx="204.0" cy="480.5" r="2.4" fill="none" stroke="#88dd00" stroke-width="1" shape-rendering="crispEdges"/>
<rect x="168.5" y="478.5" width="3" height="3" fill="none" stroke="#bb2200" stroke-width="1" shape-rendering="crispEdges"/>
<text class="g" x="187.5" y="458.0" font-family="Liberation Sans" font-size="8.1" fill="#cccccc" textLength="17" lengthAdjust="spacingAndGlyphs"  xml:space="preserve">m=1</text>
<text class="g" x="173.3" y="467.0" font-family="Liberation Sans" font-size="5.6" fill="#cccccc" textLength="29.4" lengthAdjust="spacingAndGlyphs"  xml:space="preserve">p:2 / 0.15</text>
<text class="g" x="173.3" y="499.0" font-family="Liberation Sans" font-size="5.6" fill="#cccccc" textLength="29.4" lengthAdjust="spacingAndGlyphs"  xml:space="preserve">n:1 / 0.15</text>
<text class="g" x="178.8" y="482.8" font-family="Liberation Sans" font-size="5.4" fill="#cccccc" textLength="5.6" lengthAdjust="spacingAndGlyphs"  xml:space="preserve">x1</text>
<text class="g" x="184.2" y="509.0" font-family="Liberation Sans" font-size="6.2" fill="#aaaa00" textLength="10.8" lengthAdjust="spacingAndGlyphs"  xml:space="preserve">not</text>
<g shape-rendering="crispEdges" fill="none" stroke="#88dd00" stroke-width="1">
<path d="M217.0 480.5 H222.5"/>
<path d="M251.5 480.5 H258.5"/>
<path d="M222.5 469.5 V491.5 L245.0 480.5 Z"/>
</g>
<circle cx="249.0" cy="480.5" r="2.4" fill="none" stroke="#88dd00" stroke-width="1" shape-rendering="crispEdges"/>
<rect x="213.5" y="478.5" width="3" height="3" fill="none" stroke="#bb2200" stroke-width="1" shape-rendering="crispEdges"/>
<text class="g" x="232.5" y="458.0" font-family="Liberation Sans" font-size="8.1" fill="#cccccc" textLength="17" lengthAdjust="spacingAndGlyphs"  xml:space="preserve">m=1</text>
<text class="g" x="218.3" y="467.0" font-family="Liberation Sans" font-size="5.6" fill="#cccccc" textLength="29.4" lengthAdjust="spacingAndGlyphs"  xml:space="preserve">p:2 / 0.15</text>
<text class="g" x="218.3" y="499.0" font-family="Liberation Sans" font-size="5.6" fill="#cccccc" textLength="29.4" lengthAdjust="spacingAndGlyphs"  xml:space="preserve">n:1 / 0.15</text>
<text class="g" x="223.8" y="482.8" font-family="Liberation Sans" font-size="5.4" fill="#cccccc" textLength="5.6" lengthAdjust="spacingAndGlyphs"  xml:space="preserve">x2</text>
<text class="g" x="229.2" y="509.0" font-family="Liberation Sans" font-size="6.2" fill="#aaaa00" textLength="10.8" lengthAdjust="spacingAndGlyphs"  xml:space="preserve">not</text>
<g shape-rendering="crispEdges" fill="none" stroke="#88dd00" stroke-width="1">
<path d="M262.0 480.5 H267.5"/>
<path d="M296.5 480.5 H302.5"/>
<path d="M267.5 469.5 V491.5 L290.0 480.5 Z"/>
</g>
<circle cx="294.0" cy="480.5" r="2.4" fill="none" stroke="#88dd00" stroke-width="1" shape-rendering="crispEdges"/>
<rect x="258.5" y="478.5" width="3" height="3" fill="none" stroke="#bb2200" stroke-width="1" shape-rendering="crispEdges"/>
<text class="g" x="277.5" y="458.0" font-family="Liberation Sans" font-size="8.1" fill="#cccccc" textLength="17" lengthAdjust="spacingAndGlyphs"  xml:space="preserve">m=1</text>
<text class="g" x="263.3" y="467.0" font-family="Liberation Sans" font-size="5.6" fill="#cccccc" textLength="29.4" lengthAdjust="spacingAndGlyphs"  xml:space="preserve">p:2 / 0.15</text>
<text class="g" x="263.3" y="499.0" font-family="Liberation Sans" font-size="5.6" fill="#cccccc" textLength="29.4" lengthAdjust="spacingAndGlyphs"  xml:space="preserve">n:1 / 0.15</text>
<text class="g" x="268.8" y="482.8" font-family="Liberation Sans" font-size="5.4" fill="#cccccc" textLength="5.6" lengthAdjust="spacingAndGlyphs"  xml:space="preserve">x3</text>
<text class="g" x="274.2" y="509.0" font-family="Liberation Sans" font-size="6.2" fill="#aaaa00" textLength="10.8" lengthAdjust="spacingAndGlyphs"  xml:space="preserve">not</text>
<g shape-rendering="crispEdges" fill="none" stroke="#88dd00" stroke-width="1">
<path d="M306.0 480.5 H311.5"/>
<path d="M340.5 480.5 H347.5"/>
<path d="M311.5 469.5 V491.5 L334.0 480.5 Z"/>
</g>
<circle cx="338.0" cy="480.5" r="2.4" fill="none" stroke="#88dd00" stroke-width="1" shape-rendering="crispEdges"/>
<rect x="302.5" y="478.5" width="3" height="3" fill="none" stroke="#bb2200" stroke-width="1" shape-rendering="crispEdges"/>
<text class="g" x="321.5" y="458.0" font-family="Liberation Sans" font-size="8.1" fill="#cccccc" textLength="17" lengthAdjust="spacingAndGlyphs"  xml:space="preserve">m=1</text>
<text class="g" x="307.3" y="467.0" font-family="Liberation Sans" font-size="5.6" fill="#cccccc" textLength="29.4" lengthAdjust="spacingAndGlyphs"  xml:space="preserve">p:2 / 0.15</text>
<text class="g" x="307.3" y="499.0" font-family="Liberation Sans" font-size="5.6" fill="#cccccc" textLength="29.4" lengthAdjust="spacingAndGlyphs"  xml:space="preserve">n:1 / 0.15</text>
<text class="g" x="312.8" y="482.8" font-family="Liberation Sans" font-size="5.4" fill="#cccccc" textLength="5.6" lengthAdjust="spacingAndGlyphs"  xml:space="preserve">x5</text>
<text class="g" x="318.2" y="509.0" font-family="Liberation Sans" font-size="6.2" fill="#aaaa00" textLength="10.8" lengthAdjust="spacingAndGlyphs"  xml:space="preserve">not</text>
<g shape-rendering="crispEdges" fill="none" stroke="#88dd00" stroke-width="1">
<path d="M351.0 480.5 H356.5"/>
<path d="M385.5 480.5 H391.5"/>
<path d="M356.5 469.5 V491.5 L379.0 480.5 Z"/>
</g>
<circle cx="383.0" cy="480.5" r="2.4" fill="none" stroke="#88dd00" stroke-width="1" shape-rendering="crispEdges"/>
<rect x="347.5" y="478.5" width="3" height="3" fill="none" stroke="#bb2200" stroke-width="1" shape-rendering="crispEdges"/>
<text class="g" x="366.5" y="458.0" font-family="Liberation Sans" font-size="8.1" fill="#cccccc" textLength="17" lengthAdjust="spacingAndGlyphs"  xml:space="preserve">m=1</text>
<text class="g" x="352.3" y="467.0" font-family="Liberation Sans" font-size="5.6" fill="#cccccc" textLength="29.4" lengthAdjust="spacingAndGlyphs"  xml:space="preserve">p:2 / 0.15</text>
<text class="g" x="352.3" y="499.0" font-family="Liberation Sans" font-size="5.6" fill="#cccccc" textLength="29.4" lengthAdjust="spacingAndGlyphs"  xml:space="preserve">n:1 / 0.15</text>
<text class="g" x="357.8" y="482.8" font-family="Liberation Sans" font-size="5.4" fill="#cccccc" textLength="5.6" lengthAdjust="spacingAndGlyphs"  xml:space="preserve">x6</text>
<text class="g" x="363.2" y="509.0" font-family="Liberation Sans" font-size="6.2" fill="#aaaa00" textLength="10.8" lengthAdjust="spacingAndGlyphs"  xml:space="preserve">not</text>
<g shape-rendering="crispEdges" fill="none" stroke="#88dd00" stroke-width="1">
<path d="M395.0 480.5 H400.5"/>
<path d="M429.5 480.5 H436.5"/>
<path d="M400.5 469.5 V491.5 L423.0 480.5 Z"/>
</g>
<circle cx="427.0" cy="480.5" r="2.4" fill="none" stroke="#88dd00" stroke-width="1" shape-rendering="crispEdges"/>
<rect x="391.5" y="478.5" width="3" height="3" fill="none" stroke="#bb2200" stroke-width="1" shape-rendering="crispEdges"/>
<text class="g" x="410.5" y="458.0" font-family="Liberation Sans" font-size="8.1" fill="#cccccc" textLength="17" lengthAdjust="spacingAndGlyphs"  xml:space="preserve">m=1</text>
<text class="g" x="396.3" y="467.0" font-family="Liberation Sans" font-size="5.6" fill="#cccccc" textLength="29.4" lengthAdjust="spacingAndGlyphs"  xml:space="preserve">p:2 / 0.15</text>
<text class="g" x="396.3" y="499.0" font-family="Liberation Sans" font-size="5.6" fill="#cccccc" textLength="29.4" lengthAdjust="spacingAndGlyphs"  xml:space="preserve">n:1 / 0.15</text>
<text class="g" x="401.8" y="482.8" font-family="Liberation Sans" font-size="5.4" fill="#cccccc" textLength="5.6" lengthAdjust="spacingAndGlyphs"  xml:space="preserve">x7</text>
<text class="g" x="407.2" y="509.0" font-family="Liberation Sans" font-size="6.2" fill="#aaaa00" textLength="10.8" lengthAdjust="spacingAndGlyphs"  xml:space="preserve">not</text>
<rect x="169.5" y="512.5" width="3" height="3" fill="none" stroke="#bb2200" stroke-width="1" shape-rendering="crispEdges"/>
<g shape-rendering="crispEdges" fill="none" stroke="#88dd00" stroke-width="1">
<path d="M170.5 516.0 V519.5 M168.0 519.5 H174.0 M168.0 522.5 H174.0 M170.5 522.5 V526.0"/>
</g>
<path d="M168.0 525.5 H173.5 L170.75 528.5 Z" fill="#88dd00"/>
<text class="g" x="176.0" y="521.3" font-family="Liberation Sans" font-size="5.3" fill="#cccccc" textLength="14.2" lengthAdjust="spacingAndGlyphs"  xml:space="preserve">m=1</text>
<text class="g" x="176.0" y="526.5" font-family="Liberation Sans" font-size="5.3" fill="#cccccc" textLength="7" lengthAdjust="spacingAndGlyphs"  xml:space="preserve">C1</text>
<text class="g" x="176.0" y="531.9" font-family="Liberation Sans" font-size="5.3" fill="#cccccc" textLength="6" lengthAdjust="spacingAndGlyphs"  xml:space="preserve">4f</text>
<text class="g" x="164.2" y="530.1" font-family="Liberation Sans" font-size="5.6" fill="#cccccc" textLength="3.8" lengthAdjust="spacingAndGlyphs"  xml:space="preserve">0</text>
<rect x="214.5" y="512.5" width="3" height="3" fill="none" stroke="#bb2200" stroke-width="1" shape-rendering="crispEdges"/>
<g shape-rendering="crispEdges" fill="none" stroke="#88dd00" stroke-width="1">
<path d="M215.5 516.0 V519.5 M213.0 519.5 H219.0 M213.0 522.5 H219.0 M215.5 522.5 V526.0"/>
</g>
<path d="M213.0 525.5 H218.5 L215.75 528.5 Z" fill="#88dd00"/>
<text class="g" x="221.0" y="521.3" font-family="Liberation Sans" font-size="5.3" fill="#cccccc" textLength="14.2" lengthAdjust="spacingAndGlyphs"  xml:space="preserve">m=1</text>
<text class="g" x="221.0" y="526.5" font-family="Liberation Sans" font-size="5.3" fill="#cccccc" textLength="7" lengthAdjust="spacingAndGlyphs"  xml:space="preserve">C2</text>
<text class="g" x="221.0" y="531.9" font-family="Liberation Sans" font-size="5.3" fill="#cccccc" textLength="6" lengthAdjust="spacingAndGlyphs"  xml:space="preserve">4f</text>
<text class="g" x="209.2" y="530.1" font-family="Liberation Sans" font-size="5.6" fill="#cccccc" textLength="3.8" lengthAdjust="spacingAndGlyphs"  xml:space="preserve">0</text>
<rect x="259.5" y="512.5" width="3" height="3" fill="none" stroke="#bb2200" stroke-width="1" shape-rendering="crispEdges"/>
<g shape-rendering="crispEdges" fill="none" stroke="#88dd00" stroke-width="1">
<path d="M260.5 516.0 V519.5 M258.0 519.5 H264.0 M258.0 522.5 H264.0 M260.5 522.5 V526.0"/>
</g>
<path d="M258.0 525.5 H263.5 L260.75 528.5 Z" fill="#88dd00"/>
<text class="g" x="266.0" y="521.3" font-family="Liberation Sans" font-size="5.3" fill="#cccccc" textLength="14.2" lengthAdjust="spacingAndGlyphs"  xml:space="preserve">m=1</text>
<text class="g" x="266.0" y="526.5" font-family="Liberation Sans" font-size="5.3" fill="#cccccc" textLength="7" lengthAdjust="spacingAndGlyphs"  xml:space="preserve">C3</text>
<text class="g" x="266.0" y="531.9" font-family="Liberation Sans" font-size="5.3" fill="#cccccc" textLength="6" lengthAdjust="spacingAndGlyphs"  xml:space="preserve">4f</text>
<text class="g" x="254.2" y="530.1" font-family="Liberation Sans" font-size="5.6" fill="#cccccc" textLength="3.8" lengthAdjust="spacingAndGlyphs"  xml:space="preserve">0</text>
<rect x="303.5" y="512.5" width="3" height="3" fill="none" stroke="#bb2200" stroke-width="1" shape-rendering="crispEdges"/>
<g shape-rendering="crispEdges" fill="none" stroke="#88dd00" stroke-width="1">
<path d="M304.5 516.0 V519.5 M302.0 519.5 H308.0 M302.0 522.5 H308.0 M304.5 522.5 V526.0"/>
</g>
<path d="M302.0 525.5 H307.5 L304.75 528.5 Z" fill="#88dd00"/>
<text class="g" x="310.0" y="521.3" font-family="Liberation Sans" font-size="5.3" fill="#cccccc" textLength="14.2" lengthAdjust="spacingAndGlyphs"  xml:space="preserve">m=1</text>
<text class="g" x="310.0" y="526.5" font-family="Liberation Sans" font-size="5.3" fill="#cccccc" textLength="7" lengthAdjust="spacingAndGlyphs"  xml:space="preserve">C4</text>
<text class="g" x="310.0" y="531.9" font-family="Liberation Sans" font-size="5.3" fill="#cccccc" textLength="6" lengthAdjust="spacingAndGlyphs"  xml:space="preserve">4f</text>
<text class="g" x="298.2" y="530.1" font-family="Liberation Sans" font-size="5.6" fill="#cccccc" textLength="3.8" lengthAdjust="spacingAndGlyphs"  xml:space="preserve">0</text>
<rect x="348.5" y="512.5" width="3" height="3" fill="none" stroke="#bb2200" stroke-width="1" shape-rendering="crispEdges"/>
<g shape-rendering="crispEdges" fill="none" stroke="#88dd00" stroke-width="1">
<path d="M349.5 516.0 V519.5 M347.0 519.5 H353.0 M347.0 522.5 H353.0 M349.5 522.5 V526.0"/>
</g>
<path d="M347.0 525.5 H352.5 L349.75 528.5 Z" fill="#88dd00"/>
<text class="g" x="355.0" y="521.3" font-family="Liberation Sans" font-size="5.3" fill="#cccccc" textLength="14.2" lengthAdjust="spacingAndGlyphs"  xml:space="preserve">m=1</text>
<text class="g" x="355.0" y="526.5" font-family="Liberation Sans" font-size="5.3" fill="#cccccc" textLength="7" lengthAdjust="spacingAndGlyphs"  xml:space="preserve">C5</text>
<text class="g" x="355.0" y="531.9" font-family="Liberation Sans" font-size="5.3" fill="#cccccc" textLength="6" lengthAdjust="spacingAndGlyphs"  xml:space="preserve">4f</text>
<text class="g" x="343.2" y="530.1" font-family="Liberation Sans" font-size="5.6" fill="#cccccc" textLength="3.8" lengthAdjust="spacingAndGlyphs"  xml:space="preserve">0</text>
<rect x="392.5" y="512.5" width="3" height="3" fill="none" stroke="#bb2200" stroke-width="1" shape-rendering="crispEdges"/>
<g shape-rendering="crispEdges" fill="none" stroke="#88dd00" stroke-width="1">
<path d="M393.5 516.0 V519.5 M391.0 519.5 H397.0 M391.0 522.5 H397.0 M393.5 522.5 V526.0"/>
</g>
<path d="M391.0 525.5 H396.5 L393.75 528.5 Z" fill="#88dd00"/>
<text class="g" x="399.0" y="521.3" font-family="Liberation Sans" font-size="5.3" fill="#cccccc" textLength="14.2" lengthAdjust="spacingAndGlyphs"  xml:space="preserve">m=1</text>
<text class="g" x="399.0" y="526.5" font-family="Liberation Sans" font-size="5.3" fill="#cccccc" textLength="7" lengthAdjust="spacingAndGlyphs"  xml:space="preserve">C6</text>
<text class="g" x="399.0" y="531.9" font-family="Liberation Sans" font-size="5.3" fill="#cccccc" textLength="6" lengthAdjust="spacingAndGlyphs"  xml:space="preserve">4f</text>
<text class="g" x="387.2" y="530.1" font-family="Liberation Sans" font-size="5.6" fill="#cccccc" textLength="3.8" lengthAdjust="spacingAndGlyphs"  xml:space="preserve">0</text>
<rect x="437.5" y="512.5" width="3" height="3" fill="none" stroke="#bb2200" stroke-width="1" shape-rendering="crispEdges"/>
<g shape-rendering="crispEdges" fill="none" stroke="#88dd00" stroke-width="1">
<path d="M438.5 516.0 V519.5 M436.0 519.5 H442.0 M436.0 522.5 H442.0 M438.5 522.5 V526.0"/>
</g>
<path d="M436.0 525.5 H441.5 L438.75 528.5 Z" fill="#88dd00"/>
<text class="g" x="444.0" y="521.3" font-family="Liberation Sans" font-size="5.3" fill="#cccccc" textLength="14.2" lengthAdjust="spacingAndGlyphs"  xml:space="preserve">m=1</text>
<text class="g" x="444.0" y="526.5" font-family="Liberation Sans" font-size="5.3" fill="#cccccc" textLength="7" lengthAdjust="spacingAndGlyphs"  xml:space="preserve">C7</text>
<text class="g" x="444.0" y="531.9" font-family="Liberation Sans" font-size="5.3" fill="#cccccc" textLength="15" lengthAdjust="spacingAndGlyphs"  xml:space="preserve">4.01f</text>
<text class="g" x="432.2" y="530.1" font-family="Liberation Sans" font-size="5.6" fill="#cccccc" textLength="3.8" lengthAdjust="spacingAndGlyphs"  xml:space="preserve">0</text>
<g shape-rendering="crispEdges" fill="none">
<path d="M131.5 418.0 H438.5" stroke="#00ccee" stroke-width="2"/>
<path d="M126.5 480.5 H103.5 V541.5 H472.5 V480.5 H438.5 V513.5" stroke="#00ccee" stroke-width="1"/>
</g>
<rect x="438.0" y="417.0" width="1" height="1" fill="#ff2200" shape-rendering="crispEdges"/>
<path d="M131.5 418.5 L126.5 424.5 V480.5" fill="none" stroke="#00ccee" stroke-width="1" shape-rendering="crispEdges"/>
<rect x="126.0" y="424.0" width="1" height="1" fill="#ff2200" shape-rendering="crispEdges"/>
<text class="g" x="125.0" y="432.7" font-family="Liberation Sans" font-size="9.4" fill="#00ccee" text-anchor="end" textLength="15.5" lengthAdjust="spacingAndGlyphs"  xml:space="preserve">Z[0]</text>
<path d="M176.5 418.5 L170.5 424.5 V513.5" fill="none" stroke="#00ccee" stroke-width="1" shape-rendering="crispEdges"/>
<rect x="170.0" y="424.0" width="1" height="1" fill="#ff2200" shape-rendering="crispEdges"/>
<text class="g" x="169.0" y="432.7" font-family="Liberation Sans" font-size="9.4" fill="#00ccee" text-anchor="end" textLength="15.5" lengthAdjust="spacingAndGlyphs"  xml:space="preserve">Z[1]</text>
<path d="M220.5 418.5 L215.5 424.5 V513.5" fill="none" stroke="#00ccee" stroke-width="1" shape-rendering="crispEdges"/>
<rect x="215.0" y="424.0" width="1" height="1" fill="#ff2200" shape-rendering="crispEdges"/>
<text class="g" x="214.0" y="432.7" font-family="Liberation Sans" font-size="9.4" fill="#00ccee" text-anchor="end" textLength="15.5" lengthAdjust="spacingAndGlyphs"  xml:space="preserve">Z[2]</text>
<path d="M265.5 418.5 L260.5 424.5 V513.5" fill="none" stroke="#00ccee" stroke-width="1" shape-rendering="crispEdges"/>
<rect x="260.0" y="424.0" width="1" height="1" fill="#ff2200" shape-rendering="crispEdges"/>
<text class="g" x="259.0" y="432.7" font-family="Liberation Sans" font-size="9.4" fill="#00ccee" text-anchor="end" textLength="15.5" lengthAdjust="spacingAndGlyphs"  xml:space="preserve">Z[3]</text>
<path d="M310.5 418.5 L304.5 424.5 V513.5" fill="none" stroke="#00ccee" stroke-width="1" shape-rendering="crispEdges"/>
<rect x="304.0" y="424.0" width="1" height="1" fill="#ff2200" shape-rendering="crispEdges"/>
<text class="g" x="303.0" y="432.7" font-family="Liberation Sans" font-size="9.4" fill="#00ccee" text-anchor="end" textLength="15.5" lengthAdjust="spacingAndGlyphs"  xml:space="preserve">Z[4]</text>
<path d="M354.5 418.5 L349.5 424.5 V513.5" fill="none" stroke="#00ccee" stroke-width="1" shape-rendering="crispEdges"/>
<rect x="349.0" y="424.0" width="1" height="1" fill="#ff2200" shape-rendering="crispEdges"/>
<text class="g" x="348.0" y="432.7" font-family="Liberation Sans" font-size="9.4" fill="#00ccee" text-anchor="end" textLength="15.5" lengthAdjust="spacingAndGlyphs"  xml:space="preserve">Z[5]</text>
<path d="M399.5 418.5 L393.5 424.5 V513.5" fill="none" stroke="#00ccee" stroke-width="1" shape-rendering="crispEdges"/>
<rect x="393.0" y="424.0" width="1" height="1" fill="#ff2200" shape-rendering="crispEdges"/>
<text class="g" x="392.0" y="432.7" font-family="Liberation Sans" font-size="9.4" fill="#00ccee" text-anchor="end" textLength="15.5" lengthAdjust="spacingAndGlyphs"  xml:space="preserve">Z[6]</text>
<rect x="436.5" y="478.5" width="3" height="3" fill="none" stroke="#bb2200" stroke-width="1" shape-rendering="crispEdges"/>
<text class="g" x="443.0" y="423.0" font-family="Liberation Sans" font-size="9.8" fill="#00ccee" textLength="29.5" lengthAdjust="spacingAndGlyphs"  xml:space="preserve">Z[6:0]</text>
<g shape-rendering="crispEdges" fill="none" stroke="#88dd00" stroke-width="1">
<path d="M541.0 480.5 H546.5"/>
<path d="M575.5 480.5 H581.5"/>
<path d="M546.5 469.5 V491.5 L569.0 480.5 Z"/>
</g>
<circle cx="573.0" cy="480.5" r="2.4" fill="none" stroke="#88dd00" stroke-width="1" shape-rendering="crispEdges"/>
<rect x="537.5" y="478.5" width="3" height="3" fill="none" stroke="#bb2200" stroke-width="1" shape-rendering="crispEdges"/>
<text class="g" x="556.5" y="458.0" font-family="Liberation Sans" font-size="8.1" fill="#cccccc" textLength="17" lengthAdjust="spacingAndGlyphs"  xml:space="preserve">m=1</text>
<text class="g" x="542.3" y="467.0" font-family="Liberation Sans" font-size="5.6" fill="#cccccc" textLength="29.4" lengthAdjust="spacingAndGlyphs"  xml:space="preserve">p:2 / 0.35</text>
<text class="g" x="542.3" y="499.0" font-family="Liberation Sans" font-size="5.6" fill="#cccccc" textLength="29.4" lengthAdjust="spacingAndGlyphs"  xml:space="preserve">n:1 / 0.15</text>
<text class="g" x="547.8" y="482.8" font-family="Liberation Sans" font-size="5.4" fill="#cccccc" textLength="5.6" lengthAdjust="spacingAndGlyphs"  xml:space="preserve">x8</text>
<text class="g" x="550.5" y="507.3" font-family="Liberation Sans" font-size="6.2" fill="#aaaa00" textLength="17.5" lengthAdjust="spacingAndGlyphs"  xml:space="preserve">lvtnot</text>
<g shape-rendering="crispEdges" fill="none" stroke="#88dd00" stroke-width="1">
<path d="M585.0 480.5 H590.5"/>
<path d="M619.5 480.5 H626.5"/>
<path d="M590.5 469.5 V491.5 L613.0 480.5 Z"/>
</g>
<circle cx="617.0" cy="480.5" r="2.4" fill="none" stroke="#88dd00" stroke-width="1" shape-rendering="crispEdges"/>
<rect x="581.5" y="478.5" width="3" height="3" fill="none" stroke="#bb2200" stroke-width="1" shape-rendering="crispEdges"/>
<text class="g" x="600.5" y="458.0" font-family="Liberation Sans" font-size="8.1" fill="#cccccc" textLength="17" lengthAdjust="spacingAndGlyphs"  xml:space="preserve">m=1</text>
<text class="g" x="586.3" y="467.0" font-family="Liberation Sans" font-size="5.6" fill="#cccccc" textLength="29.4" lengthAdjust="spacingAndGlyphs"  xml:space="preserve">p:2 / 0.35</text>
<text class="g" x="586.3" y="499.0" font-family="Liberation Sans" font-size="5.6" fill="#cccccc" textLength="29.4" lengthAdjust="spacingAndGlyphs"  xml:space="preserve">n:1 / 0.15</text>
<text class="g" x="591.8" y="482.8" font-family="Liberation Sans" font-size="5.4" fill="#cccccc" textLength="5.6" lengthAdjust="spacingAndGlyphs"  xml:space="preserve">x9</text>
<text class="g" x="594.5" y="507.3" font-family="Liberation Sans" font-size="6.2" fill="#aaaa00" textLength="17.5" lengthAdjust="spacingAndGlyphs"  xml:space="preserve">lvtnot</text>
<g shape-rendering="crispEdges" fill="none" stroke="#88dd00" stroke-width="1">
<path d="M630.0 480.5 H635.5"/>
<path d="M664.5 480.5 H671.5"/>
<path d="M635.5 469.5 V491.5 L658.0 480.5 Z"/>
</g>
<circle cx="662.0" cy="480.5" r="2.4" fill="none" stroke="#88dd00" stroke-width="1" shape-rendering="crispEdges"/>
<rect x="626.5" y="478.5" width="3" height="3" fill="none" stroke="#bb2200" stroke-width="1" shape-rendering="crispEdges"/>
<text class="g" x="645.5" y="458.0" font-family="Liberation Sans" font-size="8.1" fill="#cccccc" textLength="17" lengthAdjust="spacingAndGlyphs"  xml:space="preserve">m=1</text>
<text class="g" x="631.3" y="467.0" font-family="Liberation Sans" font-size="5.6" fill="#cccccc" textLength="29.4" lengthAdjust="spacingAndGlyphs"  xml:space="preserve">p:2 / 0.35</text>
<text class="g" x="631.3" y="499.0" font-family="Liberation Sans" font-size="5.6" fill="#cccccc" textLength="29.4" lengthAdjust="spacingAndGlyphs"  xml:space="preserve">n:1 / 0.15</text>
<text class="g" x="636.8" y="482.8" font-family="Liberation Sans" font-size="5.4" fill="#cccccc" textLength="8.6" lengthAdjust="spacingAndGlyphs"  xml:space="preserve">x10</text>
<text class="g" x="639.5" y="507.3" font-family="Liberation Sans" font-size="6.2" fill="#aaaa00" textLength="17.5" lengthAdjust="spacingAndGlyphs"  xml:space="preserve">lvtnot</text>
<g shape-rendering="crispEdges" fill="none" stroke="#88dd00" stroke-width="1">
<path d="M675.0 480.5 H680.5"/>
<path d="M709.5 480.5 H715.5"/>
<path d="M680.5 469.5 V491.5 L703.0 480.5 Z"/>
</g>
<circle cx="707.0" cy="480.5" r="2.4" fill="none" stroke="#88dd00" stroke-width="1" shape-rendering="crispEdges"/>
<rect x="671.5" y="478.5" width="3" height="3" fill="none" stroke="#bb2200" stroke-width="1" shape-rendering="crispEdges"/>
<text class="g" x="690.5" y="458.0" font-family="Liberation Sans" font-size="8.1" fill="#cccccc" textLength="17" lengthAdjust="spacingAndGlyphs"  xml:space="preserve">m=1</text>
<text class="g" x="676.3" y="467.0" font-family="Liberation Sans" font-size="5.6" fill="#cccccc" textLength="29.4" lengthAdjust="spacingAndGlyphs"  xml:space="preserve">p:2 / 0.35</text>
<text class="g" x="676.3" y="499.0" font-family="Liberation Sans" font-size="5.6" fill="#cccccc" textLength="29.4" lengthAdjust="spacingAndGlyphs"  xml:space="preserve">n:1 / 0.15</text>
<text class="g" x="681.8" y="482.8" font-family="Liberation Sans" font-size="5.4" fill="#cccccc" textLength="8.6" lengthAdjust="spacingAndGlyphs"  xml:space="preserve">x11</text>
<text class="g" x="684.5" y="507.3" font-family="Liberation Sans" font-size="6.2" fill="#aaaa00" textLength="17.5" lengthAdjust="spacingAndGlyphs"  xml:space="preserve">lvtnot</text>
<g shape-rendering="crispEdges" fill="none" stroke="#88dd00" stroke-width="1">
<path d="M719.0 480.5 H724.5"/>
<path d="M753.5 480.5 H760.5"/>
<path d="M724.5 469.5 V491.5 L747.0 480.5 Z"/>
</g>
<circle cx="751.0" cy="480.5" r="2.4" fill="none" stroke="#88dd00" stroke-width="1" shape-rendering="crispEdges"/>
<rect x="715.5" y="478.5" width="3" height="3" fill="none" stroke="#bb2200" stroke-width="1" shape-rendering="crispEdges"/>
<text class="g" x="734.5" y="458.0" font-family="Liberation Sans" font-size="8.1" fill="#cccccc" textLength="17" lengthAdjust="spacingAndGlyphs"  xml:space="preserve">m=1</text>
<text class="g" x="720.3" y="467.0" font-family="Liberation Sans" font-size="5.6" fill="#cccccc" textLength="29.4" lengthAdjust="spacingAndGlyphs"  xml:space="preserve">p:2 / 0.35</text>
<text class="g" x="720.3" y="499.0" font-family="Liberation Sans" font-size="5.6" fill="#cccccc" textLength="29.4" lengthAdjust="spacingAndGlyphs"  xml:space="preserve">n:1 / 0.15</text>
<text class="g" x="725.8" y="482.8" font-family="Liberation Sans" font-size="5.4" fill="#cccccc" textLength="8.6" lengthAdjust="spacingAndGlyphs"  xml:space="preserve">x12</text>
<text class="g" x="728.5" y="507.3" font-family="Liberation Sans" font-size="6.2" fill="#aaaa00" textLength="17.5" lengthAdjust="spacingAndGlyphs"  xml:space="preserve">lvtnot</text>
<g shape-rendering="crispEdges" fill="none" stroke="#88dd00" stroke-width="1">
<path d="M764.0 480.5 H769.5"/>
<path d="M798.5 480.5 H805.5"/>
<path d="M769.5 469.5 V491.5 L792.0 480.5 Z"/>
</g>
<circle cx="796.0" cy="480.5" r="2.4" fill="none" stroke="#88dd00" stroke-width="1" shape-rendering="crispEdges"/>
<rect x="760.5" y="478.5" width="3" height="3" fill="none" stroke="#bb2200" stroke-width="1" shape-rendering="crispEdges"/>
<text class="g" x="779.5" y="458.0" font-family="Liberation Sans" font-size="8.1" fill="#cccccc" textLength="17" lengthAdjust="spacingAndGlyphs"  xml:space="preserve">m=1</text>
<text class="g" x="765.3" y="467.0" font-family="Liberation Sans" font-size="5.6" fill="#cccccc" textLength="29.4" lengthAdjust="spacingAndGlyphs"  xml:space="preserve">p:2 / 0.35</text>
<text class="g" x="765.3" y="499.0" font-family="Liberation Sans" font-size="5.6" fill="#cccccc" textLength="29.4" lengthAdjust="spacingAndGlyphs"  xml:space="preserve">n:1 / 0.15</text>
<text class="g" x="770.8" y="482.8" font-family="Liberation Sans" font-size="5.4" fill="#cccccc" textLength="8.6" lengthAdjust="spacingAndGlyphs"  xml:space="preserve">x13</text>
<text class="g" x="773.5" y="507.3" font-family="Liberation Sans" font-size="6.2" fill="#aaaa00" textLength="17.5" lengthAdjust="spacingAndGlyphs"  xml:space="preserve">lvtnot</text>
<g shape-rendering="crispEdges" fill="none" stroke="#88dd00" stroke-width="1">
<path d="M809.0 480.5 H814.5"/>
<path d="M843.5 480.5 H849.5"/>
<path d="M814.5 469.5 V491.5 L837.0 480.5 Z"/>
</g>
<circle cx="841.0" cy="480.5" r="2.4" fill="none" stroke="#88dd00" stroke-width="1" shape-rendering="crispEdges"/>
<rect x="805.5" y="478.5" width="3" height="3" fill="none" stroke="#bb2200" stroke-width="1" shape-rendering="crispEdges"/>
<text class="g" x="824.5" y="458.0" font-family="Liberation Sans" font-size="8.1" fill="#cccccc" textLength="17" lengthAdjust="spacingAndGlyphs"  xml:space="preserve">m=1</text>
<text class="g" x="810.3" y="467.0" font-family="Liberation Sans" font-size="5.6" fill="#cccccc" textLength="29.4" lengthAdjust="spacingAndGlyphs"  xml:space="preserve">p:2 / 0.35</text>
<text class="g" x="810.3" y="499.0" font-family="Liberation Sans" font-size="5.6" fill="#cccccc" textLength="29.4" lengthAdjust="spacingAndGlyphs"  xml:space="preserve">n:1 / 0.15</text>
<text class="g" x="815.8" y="482.8" font-family="Liberation Sans" font-size="5.4" fill="#cccccc" textLength="8.6" lengthAdjust="spacingAndGlyphs"  xml:space="preserve">x14</text>
<text class="g" x="818.5" y="507.3" font-family="Liberation Sans" font-size="6.2" fill="#aaaa00" textLength="17.5" lengthAdjust="spacingAndGlyphs"  xml:space="preserve">lvtnot</text>
<rect x="582.5" y="512.5" width="3" height="3" fill="none" stroke="#bb2200" stroke-width="1" shape-rendering="crispEdges"/>
<g shape-rendering="crispEdges" fill="none" stroke="#88dd00" stroke-width="1">
<path d="M583.5 516.0 V519.5 M581.0 519.5 H587.0 M581.0 522.5 H587.0 M583.5 522.5 V526.0"/>
</g>
<path d="M581.0 525.5 H586.5 L583.75 528.5 Z" fill="#88dd00"/>
<text class="g" x="589.0" y="521.3" font-family="Liberation Sans" font-size="5.3" fill="#cccccc" textLength="14.2" lengthAdjust="spacingAndGlyphs"  xml:space="preserve">m=1</text>
<text class="g" x="589.0" y="526.5" font-family="Liberation Sans" font-size="5.3" fill="#cccccc" textLength="7" lengthAdjust="spacingAndGlyphs"  xml:space="preserve">C8</text>
<text class="g" x="589.0" y="531.9" font-family="Liberation Sans" font-size="5.3" fill="#cccccc" textLength="6" lengthAdjust="spacingAndGlyphs"  xml:space="preserve">4f</text>
<text class="g" x="577.2" y="530.1" font-family="Liberation Sans" font-size="5.6" fill="#cccccc" textLength="3.8" lengthAdjust="spacingAndGlyphs"  xml:space="preserve">0</text>
<rect x="627.5" y="512.5" width="3" height="3" fill="none" stroke="#bb2200" stroke-width="1" shape-rendering="crispEdges"/>
<g shape-rendering="crispEdges" fill="none" stroke="#88dd00" stroke-width="1">
<path d="M628.5 516.0 V519.5 M626.0 519.5 H632.0 M626.0 522.5 H632.0 M628.5 522.5 V526.0"/>
</g>
<path d="M626.0 525.5 H631.5 L628.75 528.5 Z" fill="#88dd00"/>
<text class="g" x="634.0" y="521.3" font-family="Liberation Sans" font-size="5.3" fill="#cccccc" textLength="14.2" lengthAdjust="spacingAndGlyphs"  xml:space="preserve">m=1</text>
<text class="g" x="634.0" y="526.5" font-family="Liberation Sans" font-size="5.3" fill="#cccccc" textLength="7" lengthAdjust="spacingAndGlyphs"  xml:space="preserve">C9</text>
<text class="g" x="634.0" y="531.9" font-family="Liberation Sans" font-size="5.3" fill="#cccccc" textLength="6" lengthAdjust="spacingAndGlyphs"  xml:space="preserve">4f</text>
<text class="g" x="622.2" y="530.1" font-family="Liberation Sans" font-size="5.6" fill="#cccccc" textLength="3.8" lengthAdjust="spacingAndGlyphs"  xml:space="preserve">0</text>
<rect x="672.5" y="512.5" width="3" height="3" fill="none" stroke="#bb2200" stroke-width="1" shape-rendering="crispEdges"/>
<g shape-rendering="crispEdges" fill="none" stroke="#88dd00" stroke-width="1">
<path d="M673.5 516.0 V519.5 M671.0 519.5 H677.0 M671.0 522.5 H677.0 M673.5 522.5 V526.0"/>
</g>
<path d="M671.0 525.5 H676.5 L673.75 528.5 Z" fill="#88dd00"/>
<text class="g" x="679.0" y="521.3" font-family="Liberation Sans" font-size="5.3" fill="#cccccc" textLength="14.2" lengthAdjust="spacingAndGlyphs"  xml:space="preserve">m=1</text>
<text class="g" x="679.0" y="526.5" font-family="Liberation Sans" font-size="5.3" fill="#cccccc" textLength="10.5" lengthAdjust="spacingAndGlyphs"  xml:space="preserve">C10</text>
<text class="g" x="679.0" y="531.9" font-family="Liberation Sans" font-size="5.3" fill="#cccccc" textLength="6" lengthAdjust="spacingAndGlyphs"  xml:space="preserve">4f</text>
<text class="g" x="667.2" y="530.1" font-family="Liberation Sans" font-size="5.6" fill="#cccccc" textLength="3.8" lengthAdjust="spacingAndGlyphs"  xml:space="preserve">0</text>
<rect x="716.5" y="512.5" width="3" height="3" fill="none" stroke="#bb2200" stroke-width="1" shape-rendering="crispEdges"/>
<g shape-rendering="crispEdges" fill="none" stroke="#88dd00" stroke-width="1">
<path d="M717.5 516.0 V519.5 M715.0 519.5 H721.0 M715.0 522.5 H721.0 M717.5 522.5 V526.0"/>
</g>
<path d="M715.0 525.5 H720.5 L717.75 528.5 Z" fill="#88dd00"/>
<text class="g" x="723.0" y="521.3" font-family="Liberation Sans" font-size="5.3" fill="#cccccc" textLength="14.2" lengthAdjust="spacingAndGlyphs"  xml:space="preserve">m=1</text>
<text class="g" x="723.0" y="526.5" font-family="Liberation Sans" font-size="5.3" fill="#cccccc" textLength="10.5" lengthAdjust="spacingAndGlyphs"  xml:space="preserve">C11</text>
<text class="g" x="723.0" y="531.9" font-family="Liberation Sans" font-size="5.3" fill="#cccccc" textLength="6" lengthAdjust="spacingAndGlyphs"  xml:space="preserve">4f</text>
<text class="g" x="711.2" y="530.1" font-family="Liberation Sans" font-size="5.6" fill="#cccccc" textLength="3.8" lengthAdjust="spacingAndGlyphs"  xml:space="preserve">0</text>
<rect x="761.5" y="512.5" width="3" height="3" fill="none" stroke="#bb2200" stroke-width="1" shape-rendering="crispEdges"/>
<g shape-rendering="crispEdges" fill="none" stroke="#88dd00" stroke-width="1">
<path d="M762.5 516.0 V519.5 M760.0 519.5 H766.0 M760.0 522.5 H766.0 M762.5 522.5 V526.0"/>
</g>
<path d="M760.0 525.5 H765.5 L762.75 528.5 Z" fill="#88dd00"/>
<text class="g" x="768.0" y="521.3" font-family="Liberation Sans" font-size="5.3" fill="#cccccc" textLength="14.2" lengthAdjust="spacingAndGlyphs"  xml:space="preserve">m=1</text>
<text class="g" x="768.0" y="526.5" font-family="Liberation Sans" font-size="5.3" fill="#cccccc" textLength="10.5" lengthAdjust="spacingAndGlyphs"  xml:space="preserve">C12</text>
<text class="g" x="768.0" y="531.9" font-family="Liberation Sans" font-size="5.3" fill="#cccccc" textLength="6" lengthAdjust="spacingAndGlyphs"  xml:space="preserve">4f</text>
<text class="g" x="756.2" y="530.1" font-family="Liberation Sans" font-size="5.6" fill="#cccccc" textLength="3.8" lengthAdjust="spacingAndGlyphs"  xml:space="preserve">0</text>
<rect x="806.5" y="512.5" width="3" height="3" fill="none" stroke="#bb2200" stroke-width="1" shape-rendering="crispEdges"/>
<g shape-rendering="crispEdges" fill="none" stroke="#88dd00" stroke-width="1">
<path d="M807.5 516.0 V519.5 M805.0 519.5 H811.0 M805.0 522.5 H811.0 M807.5 522.5 V526.0"/>
</g>
<path d="M805.0 525.5 H810.5 L807.75 528.5 Z" fill="#88dd00"/>
<text class="g" x="813.0" y="521.3" font-family="Liberation Sans" font-size="5.3" fill="#cccccc" textLength="14.2" lengthAdjust="spacingAndGlyphs"  xml:space="preserve">m=1</text>
<text class="g" x="813.0" y="526.5" font-family="Liberation Sans" font-size="5.3" fill="#cccccc" textLength="10.5" lengthAdjust="spacingAndGlyphs"  xml:space="preserve">C13</text>
<text class="g" x="813.0" y="531.9" font-family="Liberation Sans" font-size="5.3" fill="#cccccc" textLength="6" lengthAdjust="spacingAndGlyphs"  xml:space="preserve">4f</text>
<text class="g" x="801.2" y="530.1" font-family="Liberation Sans" font-size="5.6" fill="#cccccc" textLength="3.8" lengthAdjust="spacingAndGlyphs"  xml:space="preserve">0</text>
<rect x="850.5" y="512.5" width="3" height="3" fill="none" stroke="#bb2200" stroke-width="1" shape-rendering="crispEdges"/>
<g shape-rendering="crispEdges" fill="none" stroke="#88dd00" stroke-width="1">
<path d="M851.5 516.0 V519.5 M849.0 519.5 H855.0 M849.0 522.5 H855.0 M851.5 522.5 V526.0"/>
</g>
<path d="M849.0 525.5 H854.5 L851.75 528.5 Z" fill="#88dd00"/>
<text class="g" x="857.0" y="521.3" font-family="Liberation Sans" font-size="5.3" fill="#cccccc" textLength="14.2" lengthAdjust="spacingAndGlyphs"  xml:space="preserve">m=1</text>
<text class="g" x="857.0" y="526.5" font-family="Liberation Sans" font-size="5.3" fill="#cccccc" textLength="10.5" lengthAdjust="spacingAndGlyphs"  xml:space="preserve">C14</text>
<text class="g" x="857.0" y="531.9" font-family="Liberation Sans" font-size="5.3" fill="#cccccc" textLength="15" lengthAdjust="spacingAndGlyphs"  xml:space="preserve">4.01f</text>
<text class="g" x="845.2" y="530.1" font-family="Liberation Sans" font-size="5.6" fill="#cccccc" textLength="3.8" lengthAdjust="spacingAndGlyphs"  xml:space="preserve">0</text>
<g shape-rendering="crispEdges" fill="none">
<path d="M544.5 418.0 H851.5" stroke="#00ccee" stroke-width="2"/>
<path d="M539.5 480.5 H516.5 V541.5 H885.5 V480.5 H851.5 V513.5" stroke="#00ccee" stroke-width="1"/>
</g>
<rect x="851.0" y="417.0" width="1" height="1" fill="#ff2200" shape-rendering="crispEdges"/>
<path d="M544.5 418.5 L539.5 424.5 V480.5" fill="none" stroke="#00ccee" stroke-width="1" shape-rendering="crispEdges"/>
<rect x="539.0" y="424.0" width="1" height="1" fill="#ff2200" shape-rendering="crispEdges"/>
<text class="g" x="538.0" y="432.7" font-family="Liberation Sans" font-size="9.4" fill="#00ccee" text-anchor="end" textLength="15.5" lengthAdjust="spacingAndGlyphs"  xml:space="preserve">Y[0]</text>
<path d="M589.5 418.5 L583.5 424.5 V513.5" fill="none" stroke="#00ccee" stroke-width="1" shape-rendering="crispEdges"/>
<rect x="583.0" y="424.0" width="1" height="1" fill="#ff2200" shape-rendering="crispEdges"/>
<text class="g" x="582.0" y="432.7" font-family="Liberation Sans" font-size="9.4" fill="#00ccee" text-anchor="end" textLength="15.5" lengthAdjust="spacingAndGlyphs"  xml:space="preserve">Y[1]</text>
<path d="M634.5 418.5 L628.5 424.5 V513.5" fill="none" stroke="#00ccee" stroke-width="1" shape-rendering="crispEdges"/>
<rect x="628.0" y="424.0" width="1" height="1" fill="#ff2200" shape-rendering="crispEdges"/>
<text class="g" x="627.0" y="432.7" font-family="Liberation Sans" font-size="9.4" fill="#00ccee" text-anchor="end" textLength="15.5" lengthAdjust="spacingAndGlyphs"  xml:space="preserve">Y[2]</text>
<path d="M678.5 418.5 L673.5 424.5 V513.5" fill="none" stroke="#00ccee" stroke-width="1" shape-rendering="crispEdges"/>
<rect x="673.0" y="424.0" width="1" height="1" fill="#ff2200" shape-rendering="crispEdges"/>
<text class="g" x="672.0" y="432.7" font-family="Liberation Sans" font-size="9.4" fill="#00ccee" text-anchor="end" textLength="15.5" lengthAdjust="spacingAndGlyphs"  xml:space="preserve">Y[3]</text>
<path d="M723.5 418.5 L717.5 424.5 V513.5" fill="none" stroke="#00ccee" stroke-width="1" shape-rendering="crispEdges"/>
<rect x="717.0" y="424.0" width="1" height="1" fill="#ff2200" shape-rendering="crispEdges"/>
<text class="g" x="716.0" y="432.7" font-family="Liberation Sans" font-size="9.4" fill="#00ccee" text-anchor="end" textLength="15.5" lengthAdjust="spacingAndGlyphs"  xml:space="preserve">Y[4]</text>
<path d="M767.5 418.5 L762.5 424.5 V513.5" fill="none" stroke="#00ccee" stroke-width="1" shape-rendering="crispEdges"/>
<rect x="762.0" y="424.0" width="1" height="1" fill="#ff2200" shape-rendering="crispEdges"/>
<text class="g" x="761.0" y="432.7" font-family="Liberation Sans" font-size="9.4" fill="#00ccee" text-anchor="end" textLength="15.5" lengthAdjust="spacingAndGlyphs"  xml:space="preserve">Y[5]</text>
<path d="M812.5 418.5 L807.5 424.5 V513.5" fill="none" stroke="#00ccee" stroke-width="1" shape-rendering="crispEdges"/>
<rect x="807.0" y="424.0" width="1" height="1" fill="#ff2200" shape-rendering="crispEdges"/>
<text class="g" x="806.0" y="432.7" font-family="Liberation Sans" font-size="9.4" fill="#00ccee" text-anchor="end" textLength="15.5" lengthAdjust="spacingAndGlyphs"  xml:space="preserve">Y[6]</text>
<rect x="849.5" y="478.5" width="3" height="3" fill="none" stroke="#bb2200" stroke-width="1" shape-rendering="crispEdges"/>
<text class="g" x="856.0" y="423.0" font-family="Liberation Sans" font-size="9.8" fill="#00ccee" textLength="29.5" lengthAdjust="spacingAndGlyphs"  xml:space="preserve">Y[6:0]</text>
<g shape-rendering="crispEdges">
<rect x="550" y="195" width="325" height="180" fill="#000000" />
<rect x="550.5" y="195.5" width="324" height="179" fill="none" stroke="#9a9a9a" stroke-width="1" stroke-dasharray="2 2"/>
<rect x="595.5" y="205.5" width="263" height="144" fill="none" stroke="#707070" stroke-width="1"/>
<line x1="611.5" y1="206" x2="611.5" y2="349" stroke="#6a6a6a" stroke-width="1" stroke-dasharray="1 1"/>
<line x1="655.5" y1="206" x2="655.5" y2="349" stroke="#6a6a6a" stroke-width="1" stroke-dasharray="1 1"/>
<line x1="700.5" y1="206" x2="700.5" y2="349" stroke="#6a6a6a" stroke-width="1" stroke-dasharray="1 1"/>
<line x1="745.5" y1="206" x2="745.5" y2="349" stroke="#6a6a6a" stroke-width="1" stroke-dasharray="1 1"/>
<line x1="789.5" y1="206" x2="789.5" y2="349" stroke="#6a6a6a" stroke-width="1" stroke-dasharray="1 1"/>
<line x1="834.5" y1="206" x2="834.5" y2="349" stroke="#6a6a6a" stroke-width="1" stroke-dasharray="1 1"/>
<rect x="596" y="280" width="262" height="1" fill="#ffffff" />
<rect x="591" y="280" width="3" height="1" fill="#808080" />
</g>
<text class="g" x="655.5" y="359.6" font-family="Liberation Sans" font-size="8.4" fill="#cccccc" text-anchor="middle" textLength="14.5" lengthAdjust="spacingAndGlyphs"  xml:space="preserve">10n</text>
<text class="g" x="745.6" y="359.6" font-family="Liberation Sans" font-size="8.4" fill="#cccccc" text-anchor="middle" textLength="14.5" lengthAdjust="spacingAndGlyphs"  xml:space="preserve">15n</text>
<text class="g" x="834.1" y="359.6" font-family="Liberation Sans" font-size="8.4" fill="#cccccc" text-anchor="middle" textLength="14.5" lengthAdjust="spacingAndGlyphs"  xml:space="preserve">20n</text>
<text class="g" x="551" y="369" font-family="Liberation Sans" font-size="9.3" fill="#88dd00" textLength="21" lengthAdjust="spacingAndGlyphs"  xml:space="preserve">time</text>
<path d="M596.0 221.5 L655.5 221.5 L656.5 221.5 L656.5 219.5 L657.5 218.5 L660.5 218.5 L661.5 218.5 L661.5 220.5 L662.5 220.5 L662.5 215.5 L665.5 215.5 L666.5 216.5 L667.5 216.5 L667.5 221.5 L670.5 221.5 L671.5 221.5 L671.5 219.5 L672.5 219.5 L672.5 215.5 L675.5 215.5 L676.5 215.5 L676.5 217.5 L677.5 217.5 L677.5 221.5 L680.5 221.5 L681.5 221.5 L681.5 218.5 L682.5 218.5 L682.5 215.5 L685.5 215.5 L686.5 215.5 L686.5 218.5 L687.5 218.5 L687.5 221.5 L690.5 221.5 L691.5 221.5 L691.5 217.5 L692.5 217.5 L692.5 215.5 L695.5 215.5 L696.5 215.5 L696.5 219.5 L697.5 219.5 L697.5 221.5 L700.5 221.5 L701.5 221.5 L701.5 216.5 L702.5 215.5 L705.5 215.5 L706.5 215.5 L706.5 220.5 L707.5 221.5 L710.5 221.5 L711.5 221.5 L711.5 215.5 L715.5 215.5 L716.5 215.5 L716.5 221.5 L719.5 221.5 L720.5 220.5 L721.5 220.5 L721.5 215.5 L724.5 215.5 L725.5 216.5 L726.5 216.5 L726.5 221.5 L729.5 221.5 L730.5 221.5 L730.5 219.5 L731.5 219.5 L731.5 215.5 L734.5 215.5 L735.5 215.5 L735.5 217.5 L736.5 217.5 L736.5 221.5 L739.5 221.5 L740.5 221.5 L740.5 218.5 L741.5 218.5 L741.5 215.5 L744.5 215.5 L745.5 215.5 L745.5 218.5 L746.5 218.5 L746.5 221.5 L749.5 221.5 L750.5 221.5 L750.5 218.5 L751.5 218.5 L751.5 215.5 L754.5 215.5 L755.5 215.5 L755.5 219.5 L756.5 219.5 L756.5 221.5 L759.5 221.5 L760.5 221.5 L760.5 217.5 L761.5 217.5 L761.5 215.5 L764.5 215.5 L765.5 215.5 L765.5 219.5 L766.5 219.5 L766.5 221.5 L769.5 221.5 L770.5 221.5 L770.5 216.5 L771.5 215.5 L774.5 215.5 L775.5 215.5 L775.5 220.5 L776.5 221.5 L779.5 221.5 L780.5 221.5 L780.5 215.5 L784.5 215.5 L785.5 215.5 L785.5 221.5 L788.5 221.5 L789.5 220.5 L790.5 220.5 L790.5 215.5 L793.5 215.5 L794.5 216.5 L795.5 216.5 L795.5 221.5 L798.5 221.5 L799.5 221.5 L799.5 219.5 L800.5 219.5 L800.5 215.5 L803.5 215.5 L804.5 215.5 L804.5 217.5 L805.5 217.5 L805.5 221.5 L808.5 221.5 L809.5 221.5 L809.5 218.5 L810.5 218.5 L810.5 215.5 L813.5 215.5 L814.5 215.5 L814.5 218.5 L815.5 218.5 L815.5 221.5 L818.5 221.5 L819.5 221.5 L819.5 217.5 L820.5 217.5 L820.5 215.5 L823.5 215.5 L824.5 215.5 L824.5 219.5 L825.5 219.5 L825.5 221.5 L828.5 221.5 L829.5 221.5 L829.5 216.5 L830.5 215.5 L833.5 215.5 L834.5 215.5 L834.5 220.5 L836.5 220.5 L837.5 221.5 L858.5 221.5" fill="none" stroke="#88dd00" stroke-width="1" shape-rendering="crispEdges"/>
<text class="g" x="593.5" y="220.5" font-family="Liberation Sans" font-size="6.2" fill="#78c000" text-anchor="end" textLength="11.5" lengthAdjust="spacingAndGlyphs"  xml:space="preserve">z[6]</text>
<path d="M596.0 230.5 L655.5 230.5 L656.5 230.5 L656.5 228.5 L657.5 227.5 L658.5 227.5 L659.5 227.5 L659.5 225.5 L660.5 225.5 L661.5 225.5 L661.5 229.5 L662.5 230.5 L665.5 230.5 L666.5 230.5 L666.5 224.5 L670.5 224.5 L671.5 224.5 L671.5 230.5 L674.5 230.5 L675.5 229.5 L676.5 229.5 L676.5 224.5 L679.5 224.5 L680.5 225.5 L681.5 225.5 L681.5 230.5 L684.5 230.5 L685.5 230.5 L685.5 228.5 L686.5 228.5 L686.5 224.5 L689.5 224.5 L690.5 224.5 L690.5 226.5 L691.5 226.5 L691.5 230.5 L694.5 230.5 L695.5 230.5 L695.5 227.5 L696.5 227.5 L696.5 224.5 L699.5 224.5 L700.5 224.5 L700.5 227.5 L701.5 227.5 L701.5 230.5 L704.5 230.5 L705.5 230.5 L705.5 226.5 L706.5 226.5 L706.5 224.5 L709.5 224.5 L710.5 224.5 L710.5 228.5 L711.5 228.5 L711.5 230.5 L714.5 230.5 L715.5 230.5 L715.5 225.5 L716.5 224.5 L719.5 224.5 L720.5 224.5 L720.5 229.5 L721.5 230.5 L724.5 230.5 L725.5 230.5 L725.5 224.5 L729.5 224.5 L730.5 224.5 L730.5 229.5 L731.5 230.5 L734.5 230.5 L735.5 230.5 L735.5 224.5 L739.5 224.5 L740.5 224.5 L740.5 230.5 L743.5 230.5 L744.5 229.5 L745.5 229.5 L745.5 224.5 L748.5 224.5 L749.5 225.5 L750.5 225.5 L750.5 230.5 L753.5 230.5 L754.5 230.5 L754.5 228.5 L755.5 228.5 L755.5 224.5 L758.5 224.5 L759.5 224.5 L759.5 226.5 L760.5 226.5 L760.5 230.5 L763.5 230.5 L764.5 230.5 L764.5 227.5 L765.5 227.5 L765.5 224.5 L768.5 224.5 L769.5 224.5 L769.5 227.5 L770.5 227.5 L770.5 230.5 L773.5 230.5 L774.5 230.5 L774.5 226.5 L775.5 226.5 L775.5 224.5 L778.5 224.5 L779.5 224.5 L779.5 228.5 L780.5 228.5 L780.5 230.5 L783.5 230.5 L784.5 230.5 L784.5 225.5 L785.5 224.5 L788.5 224.5 L789.5 224.5 L789.5 229.5 L790.5 230.5 L793.5 230.5 L794.5 230.5 L794.5 224.5 L798.5 224.5 L799.5 224.5 L799.5 230.5 L802.5 230.5 L803.5 229.5 L804.5 229.5 L804.5 224.5 L807.5 224.5 L808.5 225.5 L809.5 225.5 L809.5 230.5 L812.5 230.5 L813.5 230.5 L813.5 228.5 L814.5 228.5 L814.5 224.5 L817.5 224.5 L818.5 224.5 L818.5 226.5 L819.5 226.5 L819.5 230.5 L822.5 230.5 L823.5 230.5 L823.5 227.5 L824.5 227.5 L824.5 224.5 L827.5 224.5 L828.5 224.5 L828.5 226.5 L829.5 226.5 L829.5 230.5 L832.5 230.5 L833.5 230.5 L833.5 227.5 L834.5 227.5 L834.5 224.5 L835.5 225.5 L836.5 225.5 L836.5 227.5 L837.5 227.5 L837.5 229.5 L858.5 229.5" fill="none" stroke="#88dd00" stroke-width="1" shape-rendering="crispEdges"/>
<text class="g" x="593.5" y="229.39999999999998" font-family="Liberation Sans" font-size="6.2" fill="#78c000" text-anchor="end" textLength="11.5" lengthAdjust="spacingAndGlyphs"  xml:space="preserve">z[5]</text>
<path d="M596.0 238.5 L655.5 238.5 L656.5 237.5 L657.5 237.5 L657.5 235.5 L660.5 235.5 L661.5 235.5 L661.5 232.5 L664.5 232.5 L665.5 232.5 L665.5 236.5 L666.5 236.5 L666.5 238.5 L669.5 238.5 L670.5 238.5 L670.5 234.5 L671.5 234.5 L671.5 232.5 L674.5 232.5 L675.5 232.5 L675.5 237.5 L676.5 238.5 L679.5 238.5 L680.5 238.5 L680.5 233.5 L681.5 232.5 L684.5 232.5 L685.5 232.5 L685.5 238.5 L689.5 238.5 L690.5 238.5 L690.5 232.5 L693.5 232.5 L694.5 233.5 L695.5 233.5 L695.5 238.5 L698.5 238.5 L699.5 237.5 L700.5 237.5 L700.5 232.5 L703.5 232.5 L704.5 232.5 L704.5 234.5 L705.5 234.5 L705.5 238.5 L708.5 238.5 L709.5 238.5 L709.5 236.5 L710.5 236.5 L710.5 232.5 L713.5 232.5 L714.5 232.5 L714.5 235.5 L715.5 235.5 L715.5 238.5 L718.5 238.5 L719.5 238.5 L719.5 235.5 L720.5 235.5 L720.5 232.5 L723.5 232.5 L724.5 232.5 L724.5 236.5 L725.5 236.5 L725.5 238.5 L728.5 238.5 L729.5 238.5 L729.5 234.5 L730.5 234.5 L730.5 232.5 L733.5 232.5 L734.5 232.5 L734.5 237.5 L735.5 238.5 L738.5 238.5 L739.5 238.5 L739.5 233.5 L740.5 232.5 L743.5 232.5 L744.5 232.5 L744.5 237.5 L745.5 238.5 L748.5 238.5 L749.5 238.5 L749.5 232.5 L753.5 232.5 L754.5 232.5 L754.5 238.5 L758.5 238.5 L759.5 238.5 L759.5 232.5 L762.5 232.5 L763.5 233.5 L764.5 233.5 L764.5 238.5 L767.5 238.5 L768.5 237.5 L769.5 237.5 L769.5 232.5 L772.5 232.5 L773.5 232.5 L773.5 234.5 L774.5 234.5 L774.5 238.5 L777.5 238.5 L778.5 238.5 L778.5 236.5 L779.5 236.5 L779.5 232.5 L782.5 232.5 L783.5 232.5 L783.5 235.5 L784.5 235.5 L784.5 238.5 L787.5 238.5 L788.5 238.5 L788.5 235.5 L789.5 235.5 L789.5 232.5 L792.5 232.5 L793.5 232.5 L793.5 236.5 L794.5 236.5 L794.5 238.5 L797.5 238.5 L798.5 238.5 L798.5 234.5 L799.5 234.5 L799.5 232.5 L802.5 232.5 L803.5 232.5 L803.5 237.5 L804.5 238.5 L807.5 238.5 L808.5 238.5 L808.5 233.5 L809.5 232.5 L812.5 232.5 L813.5 232.5 L813.5 238.5 L817.5 238.5 L818.5 238.5 L818.5 232.5 L821.5 232.5 L822.5 233.5 L823.5 233.5 L823.5 238.5 L826.5 238.5 L827.5 237.5 L828.5 237.5 L828.5 232.5 L831.5 232.5 L832.5 232.5 L832.5 234.5 L833.5 234.5 L833.5 238.5 L834.5 238.5 L835.5 239.5 L858.5 239.5" fill="none" stroke="#88dd00" stroke-width="1" shape-rendering="crispEdges"/>
<text class="g" x="593.5" y="237.89999999999998" font-family="Liberation Sans" font-size="6.2" fill="#78c000" text-anchor="end" textLength="11.5" lengthAdjust="spacingAndGlyphs"  xml:space="preserve">z[4]</text>
<path d="M596.0 247.5 L655.5 247.5 L656.5 247.5 L656.5 245.5 L657.5 244.5 L658.5 244.5 L659.5 243.5 L660.5 244.5 L661.5 244.5 L661.5 247.5 L663.5 247.5 L664.5 247.5 L664.5 244.5 L665.5 244.5 L665.5 241.5 L668.5 241.5 L669.5 241.5 L669.5 243.5 L670.5 243.5 L670.5 247.5 L673.5 247.5 L674.5 247.5 L674.5 243.5 L675.5 243.5 L675.5 241.5 L678.5 241.5 L679.5 241.5 L679.5 244.5 L680.5 244.5 L680.5 247.5 L683.5 247.5 L684.5 247.5 L684.5 243.5 L685.5 243.5 L685.5 241.5 L688.5 241.5 L689.5 241.5 L689.5 245.5 L690.5 245.5 L690.5 247.5 L693.5 247.5 L694.5 247.5 L694.5 242.5 L695.5 241.5 L698.5 241.5 L699.5 241.5 L699.5 246.5 L700.5 247.5 L703.5 247.5 L704.5 247.5 L704.5 241.5 L708.5 241.5 L709.5 241.5 L709.5 247.5 L712.5 247.5 L713.5 246.5 L714.5 246.5 L714.5 241.5 L717.5 241.5 L718.5 242.5 L719.5 242.5 L719.5 247.5 L722.5 247.5 L723.5 247.5 L723.5 245.5 L724.5 245.5 L724.5 241.5 L727.5 241.5 L728.5 241.5 L728.5 243.5 L729.5 243.5 L729.5 247.5 L732.5 247.5 L733.5 247.5 L733.5 244.5 L734.5 244.5 L734.5 241.5 L737.5 241.5 L738.5 241.5 L738.5 244.5 L739.5 244.5 L739.5 247.5 L742.5 247.5 L743.5 247.5 L743.5 243.5 L744.5 243.5 L744.5 241.5 L747.5 241.5 L748.5 241.5 L748.5 245.5 L749.5 245.5 L749.5 247.5 L752.5 247.5 L753.5 247.5 L753.5 242.5 L754.5 241.5 L757.5 241.5 L758.5 241.5 L758.5 246.5 L759.5 247.5 L762.5 247.5 L763.5 247.5 L763.5 241.5 L767.5 241.5 L768.5 241.5 L768.5 246.5 L769.5 247.5 L771.5 247.5 L772.5 246.5 L773.5 246.5 L773.5 241.5 L777.5 241.5 L778.5 241.5 L778.5 247.5 L781.5 247.5 L782.5 246.5 L783.5 246.5 L783.5 241.5 L786.5 241.5 L787.5 242.5 L788.5 242.5 L788.5 247.5 L791.5 247.5 L792.5 247.5 L792.5 245.5 L793.5 245.5 L793.5 241.5 L796.5 241.5 L797.5 241.5 L797.5 243.5 L798.5 243.5 L798.5 247.5 L801.5 247.5 L802.5 247.5 L802.5 244.5 L803.5 244.5 L803.5 241.5 L806.5 241.5 L807.5 241.5 L807.5 244.5 L808.5 244.5 L808.5 247.5 L811.5 247.5 L812.5 247.5 L812.5 243.5 L813.5 243.5 L813.5 241.5 L816.5 241.5 L817.5 241.5 L817.5 245.5 L818.5 245.5 L818.5 247.5 L821.5 247.5 L822.5 247.5 L822.5 242.5 L823.5 241.5 L826.5 241.5 L827.5 241.5 L827.5 246.5 L828.5 247.5 L831.5 247.5 L832.5 247.5 L832.5 241.5 L834.5 241.5 L835.5 241.5 L835.5 243.5 L836.5 243.5 L836.5 245.5 L837.5 245.5 L837.5 247.5 L858.5 247.5" fill="none" stroke="#88dd00" stroke-width="1" shape-rendering="crispEdges"/>
<text class="g" x="593.5" y="246.39999999999998" font-family="Liberation Sans" font-size="6.2" fill="#78c000" text-anchor="end" textLength="11.5" lengthAdjust="spacingAndGlyphs"  xml:space="preserve">z[3]</text>
<path d="M596.0 256.5 L655.5 256.5 L656.5 256.5 L656.5 254.5 L657.5 253.5 L658.5 253.5 L659.5 253.5 L659.5 251.5 L660.5 251.5 L661.5 250.5 L663.5 250.5 L664.5 250.5 L664.5 256.5 L667.5 256.5 L668.5 255.5 L669.5 255.5 L669.5 250.5 L672.5 250.5 L673.5 251.5 L674.5 251.5 L674.5 256.5 L677.5 256.5 L678.5 256.5 L678.5 254.5 L679.5 254.5 L679.5 250.5 L682.5 250.5 L683.5 250.5 L683.5 252.5 L684.5 252.5 L684.5 256.5 L687.5 256.5 L688.5 256.5 L688.5 253.5 L689.5 253.5 L689.5 250.5 L692.5 250.5 L693.5 250.5 L693.5 253.5 L694.5 253.5 L694.5 256.5 L697.5 256.5 L698.5 256.5 L698.5 252.5 L699.5 252.5 L699.5 250.5 L702.5 250.5 L703.5 250.5 L703.5 254.5 L704.5 254.5 L704.5 256.5 L707.5 256.5 L708.5 256.5 L708.5 251.5 L709.5 250.5 L712.5 250.5 L713.5 250.5 L713.5 255.5 L714.5 256.5 L717.5 256.5 L718.5 256.5 L718.5 250.5 L722.5 250.5 L723.5 250.5 L723.5 256.5 L726.5 256.5 L727.5 255.5 L728.5 255.5 L728.5 250.5 L732.5 250.5 L733.5 250.5 L733.5 256.5 L736.5 256.5 L737.5 256.5 L737.5 254.5 L738.5 254.5 L738.5 250.5 L741.5 250.5 L742.5 251.5 L743.5 251.5 L743.5 256.5 L746.5 256.5 L747.5 256.5 L747.5 253.5 L748.5 253.5 L748.5 250.5 L751.5 250.5 L752.5 250.5 L752.5 252.5 L753.5 252.5 L753.5 256.5 L756.5 256.5 L757.5 256.5 L757.5 253.5 L758.5 253.5 L758.5 250.5 L761.5 250.5 L762.5 250.5 L762.5 253.5 L763.5 253.5 L763.5 256.5 L766.5 256.5 L767.5 256.5 L767.5 252.5 L768.5 252.5 L768.5 250.5 L771.5 250.5 L772.5 250.5 L772.5 254.5 L773.5 254.5 L773.5 256.5 L776.5 256.5 L777.5 256.5 L777.5 251.5 L778.5 250.5 L781.5 250.5 L782.5 250.5 L782.5 255.5 L783.5 256.5 L786.5 256.5 L787.5 256.5 L787.5 250.5 L791.5 250.5 L792.5 250.5 L792.5 256.5 L795.5 256.5 L796.5 255.5 L797.5 255.5 L797.5 250.5 L800.5 250.5 L801.5 251.5 L802.5 251.5 L802.5 256.5 L805.5 256.5 L806.5 256.5 L806.5 254.5 L807.5 254.5 L807.5 250.5 L810.5 250.5 L811.5 250.5 L811.5 252.5 L812.5 252.5 L812.5 256.5 L815.5 256.5 L816.5 256.5 L816.5 253.5 L817.5 253.5 L817.5 250.5 L820.5 250.5 L821.5 250.5 L821.5 253.5 L822.5 253.5 L822.5 256.5 L825.5 256.5 L826.5 256.5 L826.5 252.5 L827.5 252.5 L827.5 250.5 L830.5 250.5 L831.5 250.5 L831.5 253.5 L832.5 253.5 L832.5 256.5 L834.5 256.5 L835.5 255.5 L836.5 255.5 L837.5 254.5 L858.5 254.5" fill="none" stroke="#88dd00" stroke-width="1" shape-rendering="crispEdges"/>
<text class="g" x="593.5" y="255.3" font-family="Liberation Sans" font-size="6.2" fill="#78c000" text-anchor="end" textLength="11.5" lengthAdjust="spacingAndGlyphs"  xml:space="preserve">z[2]</text>
<path d="M596.0 265.5 L655.5 265.5 L656.5 265.5 L656.5 263.5 L657.5 262.5 L660.5 262.5 L661.5 262.5 L661.5 265.5 L662.5 265.5 L663.5 265.5 L663.5 260.5 L664.5 259.5 L667.5 259.5 L668.5 259.5 L668.5 264.5 L669.5 265.5 L672.5 265.5 L673.5 265.5 L673.5 259.5 L677.5 259.5 L678.5 259.5 L678.5 265.5 L681.5 265.5 L682.5 264.5 L683.5 264.5 L683.5 259.5 L686.5 259.5 L687.5 260.5 L688.5 260.5 L688.5 265.5 L691.5 265.5 L692.5 265.5 L692.5 263.5 L693.5 263.5 L693.5 259.5 L696.5 259.5 L697.5 259.5 L697.5 261.5 L698.5 261.5 L698.5 265.5 L701.5 265.5 L702.5 265.5 L702.5 262.5 L703.5 262.5 L703.5 259.5 L706.5 259.5 L707.5 259.5 L707.5 262.5 L708.5 262.5 L708.5 265.5 L711.5 265.5 L712.5 265.5 L712.5 262.5 L713.5 262.5 L713.5 259.5 L716.5 259.5 L717.5 259.5 L717.5 263.5 L718.5 263.5 L718.5 265.5 L721.5 265.5 L722.5 265.5 L722.5 261.5 L723.5 261.5 L723.5 259.5 L726.5 259.5 L727.5 259.5 L727.5 263.5 L728.5 263.5 L728.5 265.5 L731.5 265.5 L732.5 265.5 L732.5 260.5 L733.5 259.5 L736.5 259.5 L737.5 259.5 L737.5 264.5 L738.5 265.5 L741.5 265.5 L742.5 265.5 L742.5 259.5 L746.5 259.5 L747.5 259.5 L747.5 265.5 L750.5 265.5 L751.5 264.5 L752.5 264.5 L752.5 259.5 L755.5 259.5 L756.5 260.5 L757.5 260.5 L757.5 265.5 L760.5 265.5 L761.5 265.5 L761.5 263.5 L762.5 263.5 L762.5 259.5 L765.5 259.5 L766.5 259.5 L766.5 261.5 L767.5 261.5 L767.5 265.5 L770.5 265.5 L771.5 265.5 L771.5 262.5 L772.5 262.5 L772.5 259.5 L775.5 259.5 L776.5 259.5 L776.5 262.5 L777.5 262.5 L777.5 265.5 L780.5 265.5 L781.5 265.5 L781.5 261.5 L782.5 261.5 L782.5 259.5 L785.5 259.5 L786.5 259.5 L786.5 263.5 L787.5 263.5 L787.5 265.5 L790.5 265.5 L791.5 265.5 L791.5 260.5 L792.5 259.5 L795.5 259.5 L796.5 259.5 L796.5 264.5 L797.5 265.5 L800.5 265.5 L801.5 265.5 L801.5 259.5 L805.5 259.5 L806.5 259.5 L806.5 265.5 L810.5 265.5 L811.5 265.5 L811.5 259.5 L814.5 259.5 L815.5 260.5 L816.5 260.5 L816.5 265.5 L819.5 265.5 L820.5 264.5 L821.5 264.5 L821.5 259.5 L824.5 259.5 L825.5 260.5 L826.5 260.5 L826.5 265.5 L829.5 265.5 L830.5 265.5 L830.5 263.5 L831.5 263.5 L831.5 259.5 L834.5 259.5 L835.5 259.5 L835.5 261.5 L836.5 261.5 L836.5 263.5 L837.5 263.5 L837.5 265.5 L858.5 265.5" fill="none" stroke="#88dd00" stroke-width="1" shape-rendering="crispEdges"/>
<text class="g" x="593.5" y="264.5" font-family="Liberation Sans" font-size="6.2" fill="#78c000" text-anchor="end" textLength="11.5" lengthAdjust="spacingAndGlyphs"  xml:space="preserve">z[1]</text>
<path d="M596.0 274.5 L655.5 274.5 L656.5 274.5 L656.5 272.5 L657.5 271.5 L658.5 271.5 L659.5 271.5 L659.5 269.5 L660.5 269.5 L661.5 268.5 L662.5 268.5 L662.5 271.5 L663.5 271.5 L663.5 274.5 L666.5 274.5 L667.5 274.5 L667.5 270.5 L668.5 270.5 L668.5 268.5 L671.5 268.5 L672.5 268.5 L672.5 271.5 L673.5 271.5 L673.5 274.5 L676.5 274.5 L677.5 274.5 L677.5 269.5 L678.5 268.5 L681.5 268.5 L682.5 268.5 L682.5 272.5 L683.5 272.5 L683.5 274.5 L686.5 274.5 L687.5 274.5 L687.5 268.5 L691.5 268.5 L692.5 268.5 L692.5 273.5 L693.5 274.5 L695.5 274.5 L696.5 273.5 L697.5 273.5 L697.5 268.5 L701.5 268.5 L702.5 268.5 L702.5 274.5 L705.5 274.5 L706.5 273.5 L707.5 273.5 L707.5 268.5 L710.5 268.5 L711.5 269.5 L712.5 269.5 L712.5 274.5 L715.5 274.5 L716.5 274.5 L716.5 272.5 L717.5 272.5 L717.5 268.5 L720.5 268.5 L721.5 268.5 L721.5 270.5 L722.5 270.5 L722.5 274.5 L725.5 274.5 L726.5 274.5 L726.5 271.5 L727.5 271.5 L727.5 268.5 L730.5 268.5 L731.5 268.5 L731.5 271.5 L732.5 271.5 L732.5 274.5 L735.5 274.5 L736.5 274.5 L736.5 270.5 L737.5 270.5 L737.5 268.5 L740.5 268.5 L741.5 268.5 L741.5 272.5 L742.5 272.5 L742.5 274.5 L745.5 274.5 L746.5 274.5 L746.5 269.5 L747.5 268.5 L750.5 268.5 L751.5 268.5 L751.5 273.5 L752.5 274.5 L755.5 274.5 L756.5 274.5 L756.5 268.5 L760.5 268.5 L761.5 268.5 L761.5 274.5 L764.5 274.5 L765.5 273.5 L766.5 273.5 L766.5 268.5 L770.5 268.5 L771.5 268.5 L771.5 274.5 L774.5 274.5 L775.5 274.5 L775.5 272.5 L776.5 272.5 L776.5 268.5 L779.5 268.5 L780.5 269.5 L781.5 269.5 L781.5 274.5 L784.5 274.5 L785.5 274.5 L785.5 271.5 L786.5 271.5 L786.5 268.5 L789.5 268.5 L790.5 268.5 L790.5 270.5 L791.5 270.5 L791.5 274.5 L794.5 274.5 L795.5 274.5 L795.5 270.5 L796.5 270.5 L796.5 268.5 L799.5 268.5 L800.5 268.5 L800.5 271.5 L801.5 271.5 L801.5 274.5 L804.5 274.5 L805.5 274.5 L805.5 270.5 L806.5 270.5 L806.5 268.5 L809.5 268.5 L810.5 268.5 L810.5 272.5 L811.5 272.5 L811.5 274.5 L814.5 274.5 L815.5 274.5 L815.5 269.5 L816.5 268.5 L819.5 268.5 L820.5 268.5 L820.5 273.5 L821.5 274.5 L824.5 274.5 L825.5 274.5 L825.5 268.5 L829.5 268.5 L830.5 268.5 L830.5 274.5 L833.5 274.5 L834.5 273.5 L835.5 273.5 L836.5 274.5 L858.5 274.5" fill="none" stroke="#88dd00" stroke-width="1" shape-rendering="crispEdges"/>
<text class="g" x="593.5" y="273.3" font-family="Liberation Sans" font-size="6.2" fill="#78c000" text-anchor="end" textLength="11.5" lengthAdjust="spacingAndGlyphs"  xml:space="preserve">z[0]</text>
<path d="M596.0 291.5 L655.5 291.5 L656.5 290.5 L657.5 290.5 L657.5 288.5 L660.5 288.5 L661.5 288.5 L661.5 290.5 L662.5 290.5 L662.5 287.5 L663.5 286.5 L665.5 286.5 L666.5 285.5 L667.5 285.5 L668.5 285.5 L668.5 290.5 L669.5 291.5 L672.5 291.5 L673.5 290.5 L674.5 290.5 L674.5 287.5 L675.5 286.5 L677.5 286.5 L678.5 285.5 L679.5 285.5 L680.5 285.5 L680.5 290.5 L681.5 291.5 L684.5 291.5 L685.5 290.5 L686.5 290.5 L686.5 287.5 L687.5 286.5 L689.5 286.5 L690.5 285.5 L691.5 285.5 L692.5 285.5 L692.5 290.5 L693.5 291.5 L696.5 291.5 L697.5 290.5 L698.5 290.5 L698.5 287.5 L699.5 286.5 L701.5 286.5 L702.5 285.5 L703.5 285.5 L704.5 285.5 L704.5 290.5 L705.5 291.5 L708.5 291.5 L709.5 290.5 L710.5 290.5 L710.5 287.5 L711.5 286.5 L713.5 286.5 L714.5 285.5 L715.5 285.5 L716.5 285.5 L716.5 290.5 L717.5 291.5 L720.5 291.5 L721.5 290.5 L722.5 290.5 L722.5 287.5 L723.5 286.5 L725.5 286.5 L726.5 285.5 L727.5 285.5 L728.5 285.5 L728.5 290.5 L729.5 291.5 L732.5 291.5 L733.5 290.5 L734.5 290.5 L734.5 287.5 L735.5 286.5 L737.5 286.5 L738.5 285.5 L739.5 285.5 L740.5 285.5 L740.5 290.5 L741.5 291.5 L744.5 291.5 L745.5 290.5 L746.5 290.5 L746.5 287.5 L747.5 286.5 L749.5 286.5 L750.5 285.5 L751.5 285.5 L752.5 285.5 L752.5 290.5 L753.5 291.5 L756.5 291.5 L757.5 290.5 L758.5 290.5 L758.5 287.5 L759.5 286.5 L761.5 286.5 L762.5 285.5 L763.5 285.5 L764.5 285.5 L764.5 290.5 L765.5 291.5 L768.5 291.5 L769.5 290.5 L770.5 290.5 L770.5 287.5 L771.5 286.5 L773.5 286.5 L774.5 285.5 L775.5 285.5 L776.5 285.5 L776.5 290.5 L777.5 291.5 L780.5 291.5 L781.5 290.5 L782.5 290.5 L782.5 287.5 L783.5 286.5 L785.5 286.5 L786.5 285.5 L787.5 285.5 L788.5 285.5 L788.5 290.5 L789.5 291.5 L792.5 291.5 L793.5 290.5 L794.5 290.5 L794.5 287.5 L795.5 286.5 L797.5 286.5 L798.5 285.5 L799.5 285.5 L800.5 285.5 L800.5 290.5 L801.5 291.5 L804.5 291.5 L805.5 290.5 L806.5 290.5 L806.5 287.5 L807.5 286.5 L809.5 286.5 L810.5 285.5 L811.5 285.5 L812.5 285.5 L812.5 290.5 L813.5 291.5 L816.5 291.5 L817.5 290.5 L818.5 290.5 L818.5 287.5 L819.5 286.5 L821.5 286.5 L822.5 285.5 L823.5 285.5 L824.5 285.5 L824.5 290.5 L825.5 291.5 L828.5 291.5 L829.5 290.5 L830.5 290.5 L830.5 287.5 L831.5 286.5 L834.5 286.5 L835.5 287.5 L836.5 287.5 L836.5 289.5 L837.5 289.5 L837.5 291.5 L858.5 291.5" fill="none" stroke="#ff0000" stroke-width="1" shape-rendering="crispEdges"/>
<text class="g" x="593.5" y="290.59999999999997" font-family="Liberation Sans" font-size="6.2" fill="#dd0000" text-anchor="end" textLength="11.5" lengthAdjust="spacingAndGlyphs"  xml:space="preserve">y[6]</text>
<path d="M596.0 300.5 L655.5 300.5 L656.5 299.5 L657.5 299.5 L657.5 297.5 L658.5 297.5 L659.5 296.5 L660.5 296.5 L661.5 296.5 L661.5 298.5 L662.5 298.5 L662.5 300.5 L666.5 300.5 L667.5 300.5 L667.5 296.5 L668.5 295.5 L671.5 295.5 L672.5 294.5 L673.5 294.5 L673.5 298.5 L674.5 298.5 L674.5 300.5 L678.5 300.5 L679.5 300.5 L679.5 296.5 L680.5 295.5 L683.5 295.5 L684.5 294.5 L685.5 294.5 L685.5 298.5 L686.5 298.5 L686.5 300.5 L690.5 300.5 L691.5 300.5 L691.5 296.5 L692.5 295.5 L695.5 295.5 L696.5 294.5 L697.5 294.5 L697.5 298.5 L698.5 298.5 L698.5 300.5 L702.5 300.5 L703.5 300.5 L703.5 296.5 L704.5 295.5 L707.5 295.5 L708.5 294.5 L709.5 294.5 L709.5 298.5 L710.5 298.5 L710.5 300.5 L714.5 300.5 L715.5 300.5 L715.5 296.5 L716.5 295.5 L719.5 295.5 L720.5 294.5 L721.5 294.5 L721.5 298.5 L722.5 298.5 L722.5 300.5 L726.5 300.5 L727.5 300.5 L727.5 296.5 L728.5 295.5 L731.5 295.5 L732.5 294.5 L733.5 294.5 L733.5 298.5 L734.5 298.5 L734.5 300.5 L738.5 300.5 L739.5 300.5 L739.5 296.5 L740.5 295.5 L743.5 295.5 L744.5 294.5 L745.5 294.5 L745.5 298.5 L746.5 298.5 L746.5 300.5 L750.5 300.5 L751.5 300.5 L751.5 296.5 L752.5 295.5 L755.5 295.5 L756.5 294.5 L757.5 294.5 L757.5 298.5 L758.5 298.5 L758.5 300.5 L762.5 300.5 L763.5 300.5 L763.5 296.5 L764.5 295.5 L767.5 295.5 L768.5 294.5 L769.5 294.5 L769.5 298.5 L770.5 298.5 L770.5 300.5 L774.5 300.5 L775.5 300.5 L775.5 296.5 L776.5 295.5 L779.5 295.5 L780.5 294.5 L781.5 294.5 L781.5 298.5 L782.5 298.5 L782.5 300.5 L786.5 300.5 L787.5 300.5 L787.5 296.5 L788.5 295.5 L791.5 295.5 L792.5 294.5 L793.5 294.5 L793.5 298.5 L794.5 298.5 L794.5 300.5 L798.5 300.5 L799.5 300.5 L799.5 296.5 L800.5 295.5 L803.5 295.5 L804.5 294.5 L805.5 294.5 L805.5 298.5 L806.5 298.5 L806.5 300.5 L810.5 300.5 L811.5 300.5 L811.5 296.5 L812.5 295.5 L815.5 295.5 L816.5 294.5 L817.5 294.5 L817.5 298.5 L818.5 298.5 L818.5 300.5 L822.5 300.5 L823.5 300.5 L823.5 296.5 L824.5 295.5 L827.5 295.5 L828.5 294.5 L829.5 294.5 L829.5 298.5 L830.5 298.5 L830.5 300.5 L834.5 300.5 L835.5 299.5 L858.5 299.5" fill="none" stroke="#ff0000" stroke-width="1" shape-rendering="crispEdges"/>
<text class="g" x="593.5" y="299.5" font-family="Liberation Sans" font-size="6.2" fill="#dd0000" text-anchor="end" textLength="11.5" lengthAdjust="spacingAndGlyphs"  xml:space="preserve">y[5]</text>
<path d="M596.0 309.5 L655.5 309.5 L656.5 308.5 L657.5 308.5 L657.5 306.5 L660.5 306.5 L661.5 306.5 L661.5 304.5 L664.5 304.5 L665.5 303.5 L666.5 303.5 L666.5 306.5 L667.5 306.5 L667.5 309.5 L671.5 309.5 L672.5 309.5 L672.5 305.5 L673.5 304.5 L676.5 304.5 L677.5 303.5 L678.5 303.5 L678.5 306.5 L679.5 306.5 L679.5 309.5 L683.5 309.5 L684.5 309.5 L684.5 305.5 L685.5 304.5 L688.5 304.5 L689.5 303.5 L690.5 303.5 L690.5 306.5 L691.5 306.5 L691.5 309.5 L695.5 309.5 L696.5 309.5 L696.5 305.5 L697.5 304.5 L700.5 304.5 L701.5 303.5 L702.5 303.5 L702.5 306.5 L703.5 306.5 L703.5 309.5 L707.5 309.5 L708.5 309.5 L708.5 305.5 L709.5 304.5 L712.5 304.5 L713.5 303.5 L714.5 303.5 L714.5 306.5 L715.5 306.5 L715.5 309.5 L719.5 309.5 L720.5 309.5 L720.5 305.5 L721.5 304.5 L724.5 304.5 L725.5 303.5 L726.5 303.5 L726.5 306.5 L727.5 306.5 L727.5 309.5 L731.5 309.5 L732.5 309.5 L732.5 305.5 L733.5 304.5 L736.5 304.5 L737.5 303.5 L738.5 303.5 L738.5 306.5 L739.5 306.5 L739.5 309.5 L743.5 309.5 L744.5 309.5 L744.5 305.5 L745.5 304.5 L748.5 304.5 L749.5 303.5 L750.5 303.5 L750.5 306.5 L751.5 306.5 L751.5 309.5 L755.5 309.5 L756.5 309.5 L756.5 305.5 L757.5 304.5 L760.5 304.5 L761.5 303.5 L762.5 303.5 L762.5 306.5 L763.5 306.5 L763.5 309.5 L767.5 309.5 L768.5 309.5 L768.5 305.5 L769.5 304.5 L772.5 304.5 L773.5 303.5 L774.5 303.5 L774.5 306.5 L775.5 306.5 L775.5 309.5 L779.5 309.5 L780.5 309.5 L780.5 305.5 L781.5 304.5 L784.5 304.5 L785.5 303.5 L786.5 303.5 L786.5 306.5 L787.5 306.5 L787.5 309.5 L791.5 309.5 L792.5 309.5 L792.5 305.5 L793.5 304.5 L796.5 304.5 L797.5 303.5 L798.5 303.5 L798.5 306.5 L799.5 306.5 L799.5 309.5 L803.5 309.5 L804.5 309.5 L804.5 305.5 L805.5 304.5 L808.5 304.5 L809.5 303.5 L810.5 303.5 L810.5 306.5 L811.5 306.5 L811.5 309.5 L815.5 309.5 L816.5 309.5 L816.5 305.5 L817.5 304.5 L820.5 304.5 L821.5 303.5 L822.5 303.5 L822.5 306.5 L823.5 306.5 L823.5 309.5 L827.5 309.5 L828.5 309.5 L828.5 305.5 L829.5 304.5 L832.5 304.5 L833.5 303.5 L834.5 303.5 L834.5 306.5 L835.5 307.5 L836.5 308.5 L837.5 309.5 L858.5 309.5" fill="none" stroke="#ff0000" stroke-width="1" shape-rendering="crispEdges"/>
<text class="g" x="593.5" y="308.5" font-family="Liberation Sans" font-size="6.2" fill="#dd0000" text-anchor="end" textLength="11.5" lengthAdjust="spacingAndGlyphs"  xml:space="preserve">y[4]</text>
<path d="M596.0 318.5 L655.5 318.5 L656.5 318.5 L656.5 316.5 L657.5 315.5 L660.5 315.5 L661.5 315.5 L661.5 318.5 L664.5 318.5 L665.5 318.5 L665.5 315.5 L666.5 315.5 L666.5 313.5 L669.5 313.5 L670.5 313.5 L670.5 311.5 L671.5 311.5 L671.5 315.5 L672.5 315.5 L672.5 318.5 L676.5 318.5 L677.5 318.5 L677.5 315.5 L678.5 315.5 L678.5 313.5 L681.5 313.5 L682.5 313.5 L682.5 311.5 L683.5 311.5 L683.5 315.5 L684.5 315.5 L684.5 318.5 L688.5 318.5 L689.5 318.5 L689.5 315.5 L690.5 315.5 L690.5 313.5 L693.5 313.5 L694.5 313.5 L694.5 311.5 L695.5 311.5 L695.5 315.5 L696.5 315.5 L696.5 318.5 L700.5 318.5 L701.5 318.5 L701.5 315.5 L702.5 315.5 L702.5 313.5 L705.5 313.5 L706.5 313.5 L706.5 311.5 L707.5 311.5 L707.5 315.5 L708.5 315.5 L708.5 318.5 L712.5 318.5 L713.5 318.5 L713.5 315.5 L714.5 315.5 L714.5 313.5 L717.5 313.5 L718.5 313.5 L718.5 311.5 L719.5 311.5 L719.5 315.5 L720.5 315.5 L720.5 318.5 L724.5 318.5 L725.5 318.5 L725.5 315.5 L726.5 315.5 L726.5 313.5 L729.5 313.5 L730.5 313.5 L730.5 311.5 L731.5 311.5 L731.5 315.5 L732.5 315.5 L732.5 318.5 L736.5 318.5 L737.5 318.5 L737.5 315.5 L738.5 315.5 L738.5 313.5 L741.5 313.5 L742.5 313.5 L742.5 311.5 L743.5 311.5 L743.5 315.5 L744.5 315.5 L744.5 318.5 L748.5 318.5 L749.5 318.5 L749.5 315.5 L750.5 315.5 L750.5 313.5 L753.5 313.5 L754.5 313.5 L754.5 311.5 L755.5 311.5 L755.5 315.5 L756.5 315.5 L756.5 318.5 L760.5 318.5 L761.5 318.5 L761.5 315.5 L762.5 315.5 L762.5 313.5 L765.5 313.5 L766.5 313.5 L766.5 311.5 L767.5 311.5 L767.5 315.5 L768.5 315.5 L768.5 318.5 L772.5 318.5 L773.5 318.5 L773.5 315.5 L774.5 315.5 L774.5 313.5 L777.5 313.5 L778.5 313.5 L778.5 311.5 L779.5 311.5 L779.5 315.5 L780.5 315.5 L780.5 318.5 L784.5 318.5 L785.5 318.5 L785.5 315.5 L786.5 315.5 L786.5 313.5 L789.5 313.5 L790.5 313.5 L790.5 311.5 L791.5 311.5 L791.5 315.5 L792.5 315.5 L792.5 318.5 L796.5 318.5 L797.5 318.5 L797.5 315.5 L798.5 315.5 L798.5 313.5 L801.5 313.5 L802.5 313.5 L802.5 311.5 L803.5 311.5 L803.5 315.5 L804.5 315.5 L804.5 318.5 L808.5 318.5 L809.5 318.5 L809.5 315.5 L810.5 315.5 L810.5 313.5 L813.5 313.5 L814.5 313.5 L814.5 311.5 L815.5 311.5 L815.5 315.5 L816.5 315.5 L816.5 318.5 L820.5 318.5 L821.5 318.5 L821.5 315.5 L822.5 315.5 L822.5 313.5 L825.5 313.5 L826.5 313.5 L826.5 311.5 L827.5 311.5 L827.5 315.5 L828.5 315.5 L828.5 318.5 L832.5 318.5 L833.5 318.5 L833.5 315.5 L834.5 315.5 L834.5 313.5 L835.5 313.5 L835.5 315.5 L836.5 316.5 L837.5 316.5 L837.5 318.5 L858.5 318.5" fill="none" stroke="#ff0000" stroke-width="1" shape-rendering="crispEdges"/>
<text class="g" x="593.5" y="317.4" font-family="Liberation Sans" font-size="6.2" fill="#dd0000" text-anchor="end" textLength="11.5" lengthAdjust="spacingAndGlyphs"  xml:space="preserve">y[3]</text>
<path d="M596.0 327.5 L655.5 327.5 L656.5 326.5 L657.5 326.5 L657.5 324.5 L658.5 324.5 L659.5 323.5 L660.5 323.5 L661.5 322.5 L662.5 322.5 L663.5 321.5 L664.5 321.5 L664.5 323.5 L665.5 323.5 L665.5 327.5 L669.5 327.5 L670.5 327.5 L670.5 325.5 L671.5 325.5 L671.5 322.5 L674.5 322.5 L675.5 321.5 L676.5 321.5 L676.5 323.5 L677.5 323.5 L677.5 327.5 L681.5 327.5 L682.5 327.5 L682.5 325.5 L683.5 325.5 L683.5 322.5 L686.5 322.5 L687.5 321.5 L688.5 321.5 L688.5 323.5 L689.5 323.5 L689.5 327.5 L693.5 327.5 L694.5 327.5 L694.5 325.5 L695.5 325.5 L695.5 322.5 L698.5 322.5 L699.5 321.5 L700.5 321.5 L700.5 323.5 L701.5 323.5 L701.5 327.5 L705.5 327.5 L706.5 327.5 L706.5 325.5 L707.5 325.5 L707.5 322.5 L710.5 322.5 L711.5 321.5 L712.5 321.5 L712.5 323.5 L713.5 323.5 L713.5 327.5 L717.5 327.5 L718.5 327.5 L718.5 325.5 L719.5 325.5 L719.5 322.5 L722.5 322.5 L723.5 321.5 L724.5 321.5 L724.5 323.5 L725.5 323.5 L725.5 327.5 L729.5 327.5 L730.5 327.5 L730.5 325.5 L731.5 325.5 L731.5 322.5 L734.5 322.5 L735.5 321.5 L736.5 321.5 L736.5 323.5 L737.5 323.5 L737.5 327.5 L741.5 327.5 L742.5 327.5 L742.5 325.5 L743.5 325.5 L743.5 322.5 L746.5 322.5 L747.5 321.5 L748.5 321.5 L748.5 323.5 L749.5 323.5 L749.5 327.5 L753.5 327.5 L754.5 327.5 L754.5 325.5 L755.5 325.5 L755.5 322.5 L758.5 322.5 L759.5 321.5 L760.5 321.5 L760.5 323.5 L761.5 323.5 L761.5 327.5 L765.5 327.5 L766.5 327.5 L766.5 325.5 L767.5 325.5 L767.5 322.5 L770.5 322.5 L771.5 321.5 L772.5 321.5 L772.5 323.5 L773.5 323.5 L773.5 327.5 L777.5 327.5 L778.5 327.5 L778.5 325.5 L779.5 325.5 L779.5 322.5 L782.5 322.5 L783.5 321.5 L784.5 321.5 L784.5 323.5 L785.5 323.5 L785.5 327.5 L789.5 327.5 L790.5 327.5 L790.5 325.5 L791.5 325.5 L791.5 322.5 L794.5 322.5 L795.5 321.5 L796.5 321.5 L796.5 323.5 L797.5 323.5 L797.5 327.5 L801.5 327.5 L802.5 327.5 L802.5 325.5 L803.5 325.5 L803.5 322.5 L806.5 322.5 L807.5 321.5 L808.5 321.5 L808.5 323.5 L809.5 323.5 L809.5 327.5 L813.5 327.5 L814.5 327.5 L814.5 325.5 L815.5 325.5 L815.5 322.5 L818.5 322.5 L819.5 321.5 L820.5 321.5 L820.5 323.5 L821.5 323.5 L821.5 327.5 L825.5 327.5 L826.5 327.5 L826.5 325.5 L827.5 325.5 L827.5 322.5 L830.5 322.5 L831.5 321.5 L832.5 321.5 L832.5 323.5 L833.5 323.5 L833.5 327.5 L858.5 327.5" fill="none" stroke="#ff0000" stroke-width="1" shape-rendering="crispEdges"/>
<text class="g" x="593.5" y="326.59999999999997" font-family="Liberation Sans" font-size="6.2" fill="#dd0000" text-anchor="end" textLength="11.5" lengthAdjust="spacingAndGlyphs"  xml:space="preserve">y[2]</text>
<path d="M596.0 335.5 L655.5 335.5 L656.5 334.5 L657.5 333.5 L660.5 333.5 L661.5 333.5 L661.5 335.5 L662.5 335.5 L663.5 334.5 L664.5 334.5 L664.5 331.5 L665.5 330.5 L667.5 330.5 L668.5 329.5 L669.5 329.5 L669.5 331.5 L670.5 331.5 L670.5 335.5 L674.5 335.5 L675.5 334.5 L676.5 334.5 L676.5 331.5 L677.5 330.5 L679.5 330.5 L680.5 329.5 L681.5 329.5 L681.5 331.5 L682.5 331.5 L682.5 335.5 L686.5 335.5 L687.5 334.5 L688.5 334.5 L688.5 331.5 L689.5 330.5 L691.5 330.5 L692.5 329.5 L693.5 329.5 L693.5 331.5 L694.5 331.5 L694.5 335.5 L698.5 335.5 L699.5 334.5 L700.5 334.5 L700.5 331.5 L701.5 330.5 L703.5 330.5 L704.5 329.5 L705.5 329.5 L705.5 331.5 L706.5 331.5 L706.5 335.5 L710.5 335.5 L711.5 334.5 L712.5 334.5 L712.5 331.5 L713.5 330.5 L715.5 330.5 L716.5 329.5 L717.5 329.5 L717.5 331.5 L718.5 331.5 L718.5 335.5 L722.5 335.5 L723.5 334.5 L724.5 334.5 L724.5 331.5 L725.5 330.5 L727.5 330.5 L728.5 329.5 L729.5 329.5 L729.5 331.5 L730.5 331.5 L730.5 335.5 L734.5 335.5 L735.5 334.5 L736.5 334.5 L736.5 331.5 L737.5 330.5 L739.5 330.5 L740.5 329.5 L741.5 329.5 L741.5 331.5 L742.5 331.5 L742.5 335.5 L746.5 335.5 L747.5 334.5 L748.5 334.5 L748.5 331.5 L749.5 330.5 L751.5 330.5 L752.5 329.5 L753.5 329.5 L753.5 331.5 L754.5 331.5 L754.5 335.5 L758.5 335.5 L759.5 334.5 L760.5 334.5 L760.5 331.5 L761.5 330.5 L763.5 330.5 L764.5 329.5 L765.5 329.5 L765.5 331.5 L766.5 331.5 L766.5 335.5 L770.5 335.5 L771.5 334.5 L772.5 334.5 L772.5 331.5 L773.5 330.5 L775.5 330.5 L776.5 329.5 L777.5 329.5 L777.5 331.5 L778.5 331.5 L778.5 335.5 L782.5 335.5 L783.5 334.5 L784.5 334.5 L784.5 331.5 L785.5 330.5 L787.5 330.5 L788.5 329.5 L789.5 329.5 L789.5 331.5 L790.5 331.5 L790.5 335.5 L794.5 335.5 L795.5 334.5 L796.5 334.5 L796.5 331.5 L797.5 330.5 L799.5 330.5 L800.5 329.5 L801.5 329.5 L801.5 331.5 L802.5 331.5 L802.5 335.5 L806.5 335.5 L807.5 334.5 L808.5 334.5 L808.5 331.5 L809.5 330.5 L811.5 330.5 L812.5 329.5 L813.5 329.5 L813.5 331.5 L814.5 331.5 L814.5 335.5 L818.5 335.5 L819.5 334.5 L820.5 334.5 L820.5 331.5 L821.5 330.5 L823.5 330.5 L824.5 329.5 L825.5 329.5 L825.5 331.5 L826.5 331.5 L826.5 335.5 L830.5 335.5 L831.5 334.5 L832.5 334.5 L832.5 331.5 L833.5 330.5 L834.5 330.5 L835.5 330.5 L835.5 332.5 L836.5 333.5 L837.5 333.5 L837.5 335.5 L858.5 335.5" fill="none" stroke="#ff0000" stroke-width="1" shape-rendering="crispEdges"/>
<text class="g" x="593.5" y="335.09999999999997" font-family="Liberation Sans" font-size="6.2" fill="#dd0000" text-anchor="end" textLength="11.5" lengthAdjust="spacingAndGlyphs"  xml:space="preserve">y[1]</text>
<path d="M596.0 344.5 L655.5 344.5 L656.5 343.5 L657.5 343.5 L657.5 341.5 L658.5 341.5 L659.5 340.5 L660.5 340.5 L661.5 340.5 L661.5 338.5 L662.5 338.5 L663.5 338.5 L663.5 344.5 L667.5 344.5 L668.5 343.5 L669.5 343.5 L669.5 340.5 L670.5 339.5 L672.5 339.5 L673.5 338.5 L674.5 338.5 L675.5 338.5 L675.5 344.5 L679.5 344.5 L680.5 343.5 L681.5 343.5 L681.5 340.5 L682.5 339.5 L684.5 339.5 L685.5 338.5 L686.5 338.5 L687.5 338.5 L687.5 344.5 L691.5 344.5 L692.5 343.5 L693.5 343.5 L693.5 340.5 L694.5 339.5 L696.5 339.5 L697.5 338.5 L698.5 338.5 L699.5 338.5 L699.5 344.5 L703.5 344.5 L704.5 343.5 L705.5 343.5 L705.5 340.5 L706.5 339.5 L708.5 339.5 L709.5 338.5 L710.5 338.5 L711.5 338.5 L711.5 344.5 L715.5 344.5 L716.5 343.5 L717.5 343.5 L717.5 340.5 L718.5 339.5 L720.5 339.5 L721.5 338.5 L722.5 338.5 L723.5 338.5 L723.5 344.5 L727.5 344.5 L728.5 343.5 L729.5 343.5 L729.5 340.5 L730.5 339.5 L732.5 339.5 L733.5 338.5 L734.5 338.5 L735.5 338.5 L735.5 344.5 L739.5 344.5 L740.5 343.5 L741.5 343.5 L741.5 340.5 L742.5 339.5 L744.5 339.5 L745.5 338.5 L746.5 338.5 L747.5 338.5 L747.5 344.5 L751.5 344.5 L752.5 343.5 L753.5 343.5 L753.5 340.5 L754.5 339.5 L756.5 339.5 L757.5 338.5 L758.5 338.5 L759.5 338.5 L759.5 344.5 L763.5 344.5 L764.5 343.5 L765.5 343.5 L765.5 340.5 L766.5 339.5 L768.5 339.5 L769.5 338.5 L770.5 338.5 L771.5 338.5 L771.5 344.5 L775.5 344.5 L776.5 343.5 L777.5 343.5 L777.5 340.5 L778.5 339.5 L780.5 339.5 L781.5 338.5 L782.5 338.5 L783.5 338.5 L783.5 344.5 L787.5 344.5 L788.5 343.5 L789.5 343.5 L789.5 340.5 L790.5 339.5 L792.5 339.5 L793.5 338.5 L794.5 338.5 L795.5 338.5 L795.5 344.5 L799.5 344.5 L800.5 343.5 L801.5 343.5 L801.5 340.5 L802.5 339.5 L804.5 339.5 L805.5 338.5 L806.5 338.5 L807.5 338.5 L807.5 344.5 L811.5 344.5 L812.5 343.5 L813.5 343.5 L813.5 340.5 L814.5 339.5 L816.5 339.5 L817.5 338.5 L818.5 338.5 L819.5 338.5 L819.5 344.5 L823.5 344.5 L824.5 343.5 L825.5 343.5 L825.5 340.5 L826.5 339.5 L828.5 339.5 L829.5 338.5 L830.5 338.5 L831.5 338.5 L831.5 344.5 L835.5 344.5 L836.5 345.5 L858.5 345.5" fill="none" stroke="#ff0000" stroke-width="1" shape-rendering="crispEdges"/>
<text class="g" x="593.5" y="343.5" font-family="Liberation Sans" font-size="6.2" fill="#dd0000" text-anchor="end" textLength="11.5" lengthAdjust="spacingAndGlyphs"  xml:space="preserve">y[0]</text>
<g fill="#000" stroke="none">
<path d="M4.5 46 V41.5 Q4.5 40.5 5.5 40.5 H11 L13.5 43 H23 Q24 43 24 44 V46 Z"/>
<path d="M2 47 H26 L24.5 58.5 Q24.4 59.5 23.4 59.5 H4.6 Q3.6 59.5 3.5 58.5 Z"/>
<path d="M31.5 40.5 H46 L49.5 44 V58 Q49.5 59.5 48 59.5 H33 Q31.5 59.5 31.5 58 V42 Q31.5 40.5 33 40.5 Z M35 41 V48.3 H44.8 V41 Z"/>
<rect x="41.5" y="42.5" width="2.3" height="4.5"/>
<path d="M54.5 47 Q54.5 44 57.5 44 H65 V46.7 H57.3 V54.3 H75.7 V46.7 H72 V44 H75.5 Q78.5 44 78.5 47 V54.5 Q78.5 57 75.5 57 H57.5 Q54.5 57 54.5 54.5 Z"/>
<path d="M65 41.5 L70.5 45.3 L65 49.3 Z"/>
<path d="M85.5 49.3 L93.5 42 V46.3 Q103 46.3 106.9 57.3 Q102 52.5 93.5 52.3 V57 Z"/>
<path d="M132.8 49.3 L124.8 42 V46.3 Q115.3 46.3 111.4 57.3 Q116.3 52.5 124.8 52.3 V57 Z"/>
</g>
<g fill="none" stroke="#000" stroke-width="2.2">
<circle cx="141.5" cy="44.8" r="3.1"/><circle cx="141.5" cy="55.1" r="3.1"/>
<path d="M144.3 46.8 L157 54.6 M144.3 53.2 L149.5 49.8 M151.8 47.2 L157 44.6" stroke-width="2.7" stroke-linecap="round"/>
</g>
<g fill="none" stroke="#000" stroke-width="2.2">
<rect x="164.5" y="39.5" width="12" height="15"/>
<rect x="197.3" y="43.5" width="12" height="14"/>
<path d="M221 45 L231 55 M231 45 L221 55"/>
</g>
<g fill="#000">
<circle cx="182.7" cy="43.5" r="1.2"/>
<circle cx="182.7" cy="48.5" r="1.2"/>
<circle cx="182.7" cy="53.5" r="1.2"/>
<circle cx="171.5" cy="58" r="1.2"/>
<circle cx="177" cy="58" r="1.2"/>
<circle cx="182.5" cy="58" r="1.2"/>
<circle cx="190.5" cy="39.2" r="1.2"/>
<circle cx="196" cy="39.2" r="1.2"/>
<circle cx="202" cy="39.2" r="1.2"/>
<circle cx="190.7" cy="43.6" r="1.2"/>
<circle cx="190.7" cy="48.6" r="1.2"/>
<circle cx="190.7" cy="53.6" r="1.2"/>
</g>
<path d="M244 43.5 L261.2 37.6 Q262.5 37.4 262.9 38.6 L264.5 44.2 Q264 45.6 262.6 45 L260.6 40.8 L246.6 45.8 L246.3 50.8 Q245.6 51.2 245.2 50.6 Z" fill="#000"/>
<path d="M249.6 47.4 H267.2 Q268 47.4 268 48.2 V59.8 Q268 60.6 267.2 60.6 H249.6 Q248.8 60.6 248.8 59.8 V48.2 Q248.8 47.4 249.6 47.4 Z M251 58 H265.5 V52.8 L263.8 50.5 L259.6 51.7 L256.7 54.4 L253.1 51.5 L251 53.6 Z" fill="#000" fill-rule="evenodd"/>
<g fill="#000">
<path d="M270.3 46 L276.5 42 V44.5 H286.8 V47.5 H276.5 V50 Z"/>
<path d="M294 54 L287.8 50 V52.5 H277.3 V55.5 H287.8 V58 Z"/>
<path d="M308.5 42 H317.2 V50 H320.7 L312.9 58.4 L303.2 50 H308.5 Z"/>
<path d="M359.5 57.9 H368.5 V50 H372.8 L364 41.5 L355.4 50 H359.5 Z"/>
<path d="M335 38 H339.5 V42.5 H344.4 L337.2 47.8 L330 42.5 H335 Z"/>
</g>
<g fill="none" stroke="#000" stroke-width="1.8">
<path d="M331 49.5 H341 Q347 49.5 347.5 54.5 Q347 59.5 341 59.5 H331 Z M326 52 H331 M326 57.5 H331 M347.5 54.5 H350"/>
</g>
<path d="M405.5 38.5 Q404 41 392.5 53 L389.5 50.5 Q401 40 405.5 38.5 Z" fill="#000"/>
<path d="M389 51.5 L391.5 54 Q391 59.5 383 60.8 Q384 58 384.5 55.5 Q385.5 51.5 389 51.5 Z" fill="#000"/>
<g fill="none" stroke="#000" stroke-width="1.8">
<circle cx="420" cy="49.7" r="5.6"/>
</g>
<path d="M420 44.1 A5.6 5.6 0 0 1 420 55.3 Z" fill="#000"/>
<g stroke="#000" stroke-width="2" stroke-linecap="round">
<line x1="429.50" y1="49.70" x2="430.80" y2="49.70"/>
<line x1="426.72" y1="56.42" x2="427.64" y2="57.34"/>
<line x1="420.00" y1="59.20" x2="420.00" y2="60.50"/>
<line x1="413.28" y1="56.42" x2="412.36" y2="57.34"/>
<line x1="410.50" y1="49.70" x2="409.20" y2="49.70"/>
<line x1="413.28" y1="42.98" x2="412.36" y2="42.06"/>
<line x1="420.00" y1="40.20" x2="420.00" y2="38.90"/>
<line x1="426.72" y1="42.98" x2="427.64" y2="42.06"/>
</g>
<g fill="none" stroke="#000" stroke-width="2.2">
<path d="M443 43.5 H452 Q458.5 43.5 459 50 Q458.5 56.5 452 56.5 H443 Z M438.5 46.5 H443 M438.5 53.5 H443 M459 50 H462"/>
</g>
<g stroke="#000" stroke-width="2.2" stroke-linecap="round">
<path d="M470 40 H476 M470 46 H483.5 M470 51.5 H479 M470 57 H484.5"/>
</g>
<path d="M502 44.5 V55.5" stroke="#000" stroke-width="2"/>
<circle cx="501.9" cy="42.8" r="1.8" fill="#fff" stroke="#444" stroke-width="1.3"/>
<circle cx="501.9" cy="57.2" r="1.8" fill="#fff" stroke="#444" stroke-width="1.3"/>
<path d="M521 50 H534.8" stroke="#000" stroke-width="2.2" stroke-linecap="round"/>
<rect x="547.2" y="40.5" width="14" height="18.4" fill="none" stroke="#000" stroke-width="2.2"/>
<path d="M582.2 39.5 L571.2 47.5 L575 59.8 L578.6 51.2 L589.2 51.4 L582 48 Z" fill="none" stroke="#000" stroke-width="2" stroke-linejoin="round"/>
<path d="M597.5 41 A18.5 18.5 0 0 1 615.8 59.5" fill="none" stroke="#000" stroke-width="2.2" stroke-linecap="round"/>
<circle cx="631.7" cy="49.7" r="10" fill="none" stroke="#000" stroke-width="2.2"/>
<circle cx="658.3" cy="46.6" r="6" fill="none" stroke="#000" stroke-width="2.2"/>
<path d="M662.6 51 L670.7 59" stroke="#000" stroke-width="2.6" stroke-linecap="round"/>
<path d="M682.5999999999999 59.800000000000004 L687.3 55.1" stroke="#000" stroke-width="2.8" stroke-linecap="round"/>
<path d="M689.8 52.6 L683.8 52.6 L689.8 58.6 Z" fill="#000" stroke="#000" stroke-width="1" stroke-linejoin="round"/>
<path d="M702.0 39.599999999999994 L697.3 44.3" stroke="#000" stroke-width="2.8" stroke-linecap="round"/>
<path d="M694.8 46.8 L700.8 46.8 L694.8 40.8 Z" fill="#000" stroke="#000" stroke-width="1" stroke-linejoin="round"/>
<path d="M720.4 47.800000000000004 L725.1 43.1" stroke="#000" stroke-width="2.8" stroke-linecap="round"/>
<path d="M727.6 40.6 L721.6 40.6 L727.6 46.6 Z" fill="#000" stroke="#000" stroke-width="1" stroke-linejoin="round"/>
<path d="M715.9000000000001 52.0 L711.2 56.7" stroke="#000" stroke-width="2.8" stroke-linecap="round"/>
<path d="M708.7 59.2 L714.7 59.2 L708.7 53.2 Z" fill="#000" stroke="#000" stroke-width="1" stroke-linejoin="round"/>
<path d="M824 48.5 H830 V44.4 L836.2 50 L830 55.7 V51.5 H824 Z" fill="#000"/>
<rect x="837.8" y="42.8" width="9.4" height="15.4" fill="none" stroke="#000" stroke-width="1.6"/>
<path d="M839.8 45.8 H845.2 M839.8 49.3 H845.2 M839.8 52.8 H845.2 M839.8 56.3 H845.2" stroke="#000" stroke-width="1.3"/>
<path d="M855.8 42.9 L868.1 50 L855.8 57.2 Z" fill="#000"/>
<g fill="none" stroke="#000" stroke-width="2">
<path d="M877.5 40 V60 M876 58.4 H900"/>
<path d="M877.5 46.5 H882 V41.5 H885 V45.5 H888 V41.5 H891 V45.5 H894 V41.5 H897 V45.5 H900"/>
<path d="M877.5 53.5 H886 V49 H900"/>
</g>
</svg></body></html>
